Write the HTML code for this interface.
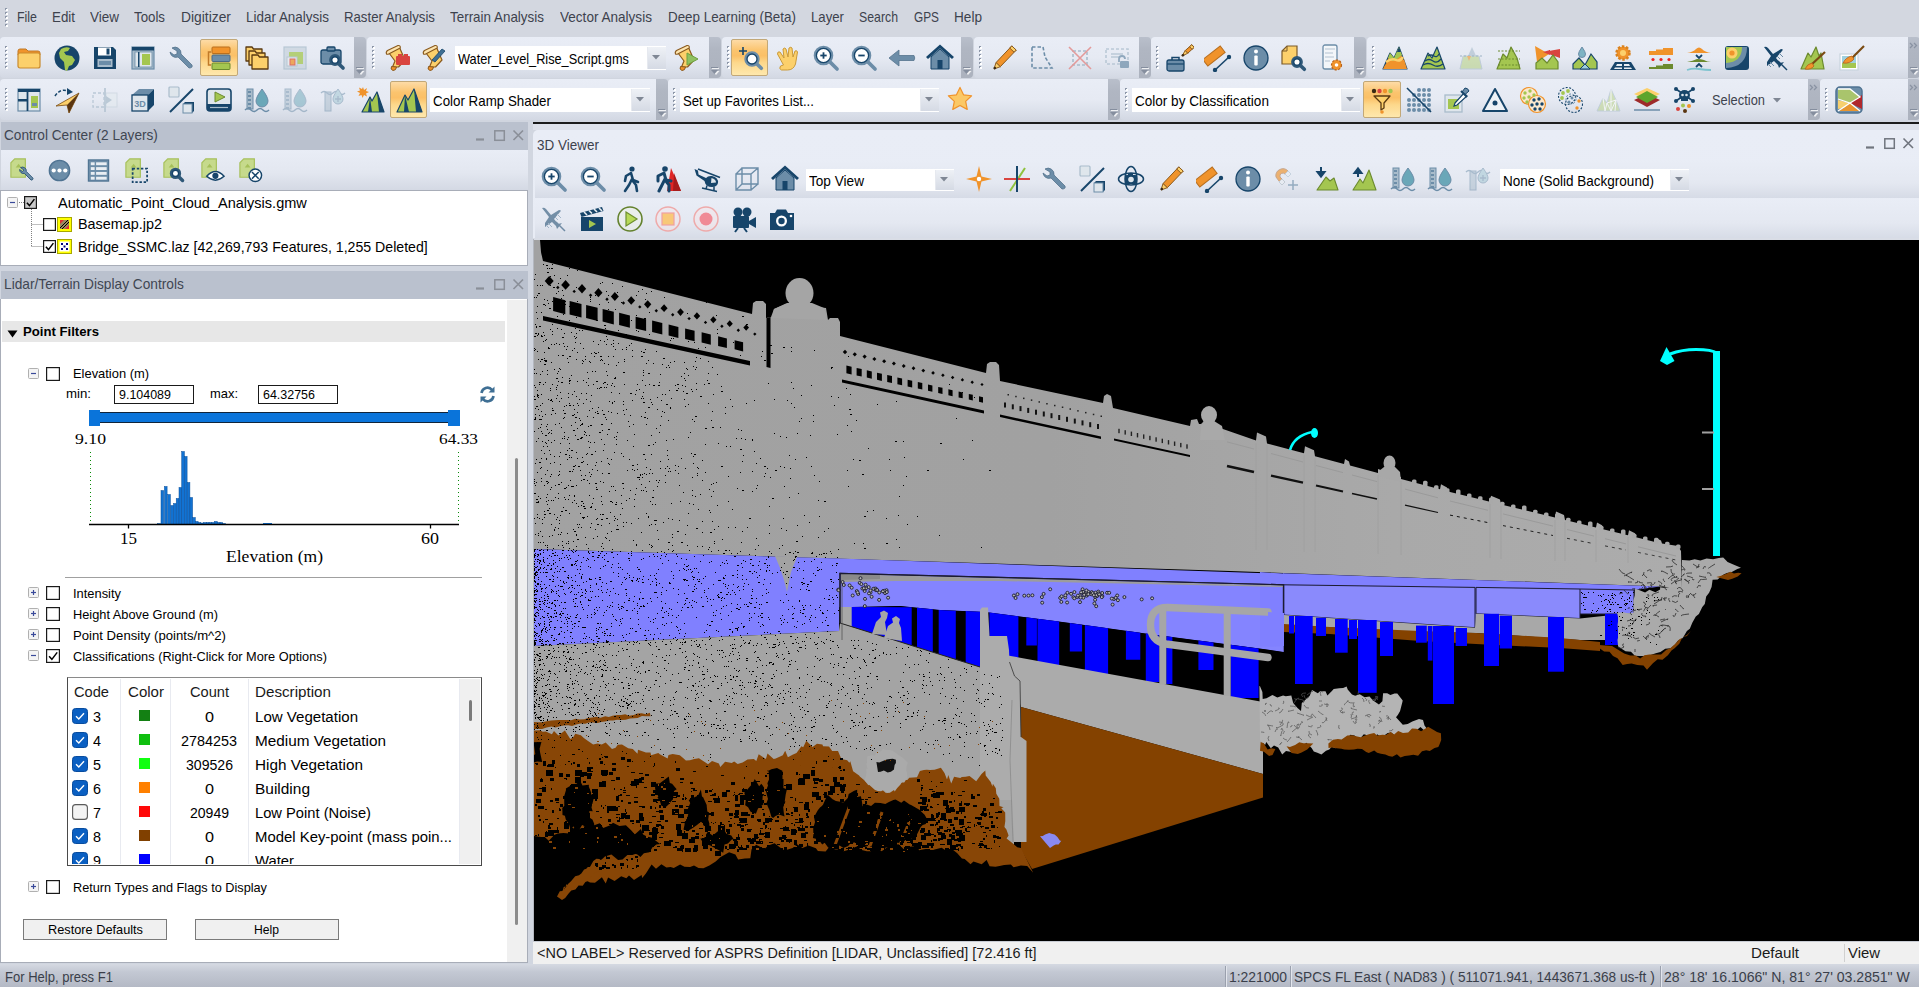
<!DOCTYPE html>
<html lang="en"><head><meta charset="utf-8"><title>Global Mapper - 3D Viewer</title>
<style>
html,body{margin:0;padding:0}
body{width:1919px;height:987px;overflow:hidden;position:relative;background:#d0d5df;font-family:"Liberation Sans",sans-serif;}
body div,body span,body svg,body i{position:absolute;display:block}
.grp{left:0;top:0;width:0;height:0;overflow:visible}
.t{white-space:nowrap;transform-origin:0 50%;}
.tb{background:linear-gradient(#e9edf6 0%,#e6eaf3 50%,#dde2ec 75%,#d3d8e3 100%);}
.ov{background:linear-gradient(#b9bfcb,#b0b6c2 30%,#acb2be);}
.hot{background:linear-gradient(#fddba6 0%,#fbc46e 30%,#fbc067 45%,#fdd88c 65%,#fee8ad 100%);border:1px solid #c2a878;box-sizing:border-box;border-radius:2px;}
</style></head>
<body>
<div id="app-chrome" class="grp">
<div style="left:0px;top:0px;width:1919px;height:37px;background:#d3d7e0;"></div>
<i style="left:5px;top:8px;width:2px;height:2px;background:#8d97a8"></i><i style="left:6px;top:9px;width:2px;height:2px;background:#fff"></i><i style="left:5px;top:12px;width:2px;height:2px;background:#8d97a8"></i><i style="left:6px;top:13px;width:2px;height:2px;background:#fff"></i><i style="left:5px;top:16px;width:2px;height:2px;background:#8d97a8"></i><i style="left:6px;top:17px;width:2px;height:2px;background:#fff"></i><i style="left:5px;top:20px;width:2px;height:2px;background:#8d97a8"></i><i style="left:6px;top:21px;width:2px;height:2px;background:#fff"></i><i style="left:5px;top:24px;width:2px;height:2px;background:#8d97a8"></i><i style="left:6px;top:25px;width:2px;height:2px;background:#fff"></i>
<span class="t " style="left:17.0px;top:8.4px;font-size:14.4px;line-height:19px;color:#3d424d;transform:scaleX(0.8618);">File</span>
<span class="t " style="left:52.0px;top:8.4px;font-size:14.4px;line-height:19px;color:#3d424d;transform:scaleX(0.9268);">Edit</span>
<span class="t " style="left:90.0px;top:8.4px;font-size:14.4px;line-height:19px;color:#3d424d;transform:scaleX(0.9369);">View</span>
<span class="t " style="left:134.0px;top:8.4px;font-size:14.4px;line-height:19px;color:#3d424d;transform:scaleX(0.9221);">Tools</span>
<span class="t " style="left:181.0px;top:8.4px;font-size:14.4px;line-height:19px;color:#3d424d;transform:scaleX(0.9612);">Digitizer</span>
<span class="t " style="left:246.0px;top:8.4px;font-size:14.4px;line-height:19px;color:#3d424d;transform:scaleX(0.9341);">Lidar Analysis</span>
<span class="t " style="left:344.0px;top:8.4px;font-size:14.4px;line-height:19px;color:#3d424d;transform:scaleX(0.9169);">Raster Analysis</span>
<span class="t " style="left:450.0px;top:8.4px;font-size:14.4px;line-height:19px;color:#3d424d;transform:scaleX(0.9321);">Terrain Analysis</span>
<span class="t " style="left:560.0px;top:8.4px;font-size:14.4px;line-height:19px;color:#3d424d;transform:scaleX(0.9421);">Vector Analysis</span>
<span class="t " style="left:668.0px;top:8.4px;font-size:14.4px;line-height:19px;color:#3d424d;transform:scaleX(0.9296);">Deep Learning (Beta)</span>
<span class="t " style="left:811.0px;top:8.4px;font-size:14.4px;line-height:19px;color:#3d424d;transform:scaleX(0.9161);">Layer</span>
<span class="t " style="left:859.0px;top:8.4px;font-size:14.4px;line-height:19px;color:#3d424d;transform:scaleX(0.8547);">Search</span>
<span class="t " style="left:914.0px;top:8.4px;font-size:14.4px;line-height:19px;color:#3d424d;transform:scaleX(0.8221);">GPS</span>
<span class="t " style="left:954.0px;top:8.4px;font-size:14.4px;line-height:19px;color:#3d424d;transform:scaleX(0.9453);">Help</span>
<div style="left:0px;top:37px;width:1919px;height:86px;background:#d0d5df;"></div>
<div class="tb" style="left:0px;top:37px;width:354px;height:41px;border-radius:4px 0 0 4px;"></div><div class="ov" style="left:354px;top:37px;width:12px;height:41px;border-radius:0 4px 4px 0;"></div><svg style="left:355px;top:67px" width="10" height="12" viewBox="0 0 10 12"><path d="M2 1.500 h7" stroke="#fff" stroke-width="1" opacity="0.8"/><path d="M1 0.500 h7" stroke="#858e9e" stroke-width="1"/><path d="M2.500 4 h7 l-3.500 4z" fill="#fff" opacity="0.8"/><path d="M1 3 h7 l-3.500 4z" fill="#858e9e"/></svg><i style="left:5px;top:46px;width:2px;height:2px;background:#8d97a8"></i><i style="left:6px;top:47px;width:2px;height:2px;background:#fff"></i><i style="left:5px;top:50px;width:2px;height:2px;background:#8d97a8"></i><i style="left:6px;top:51px;width:2px;height:2px;background:#fff"></i><i style="left:5px;top:54px;width:2px;height:2px;background:#8d97a8"></i><i style="left:6px;top:55px;width:2px;height:2px;background:#fff"></i><i style="left:5px;top:58px;width:2px;height:2px;background:#8d97a8"></i><i style="left:6px;top:59px;width:2px;height:2px;background:#fff"></i><i style="left:5px;top:62px;width:2px;height:2px;background:#8d97a8"></i><i style="left:6px;top:63px;width:2px;height:2px;background:#fff"></i><i style="left:5px;top:66px;width:2px;height:2px;background:#8d97a8"></i><i style="left:6px;top:67px;width:2px;height:2px;background:#fff"></i>
<div class="hot" style="left:200px;top:39px;width:38px;height:37px;"></div>
<svg style="left:15.0px;top:44.0px" width="28" height="28" viewBox="0 0 28 28"><path d="M3 7 q0 -2 2 -2 h6 l2 2 h10 q2 0 2 2 v2 h-22z" fill="#f0932b" stroke="#c07a28" stroke-width="1"/><rect x="3" y="9" width="22" height="15" rx="2" fill="#fcd06b" stroke="#c98a2d" stroke-width="1.2"/></svg>
<svg style="left:53.0px;top:44.0px" width="28" height="28" viewBox="0 0 28 28"><circle cx="14" cy="14" r="12.5" fill="#17456a"/><path d="M8 5 q5 -3 9 -1 l-2 3 l-4 1 l2 3 l6 1 l3 4 l-3 5 l-3 1 l-2 5 l-2 -1 l-1 -8 l-4 -4 l-1 -5z" fill="#a4c650"/></svg>
<svg style="left:91.0px;top:44.0px" width="28" height="28" viewBox="0 0 28 28"><path d="M3 3 h19 l3 3 v19 h-22z" fill="#17456a"/><rect x="7" y="3.5" width="13" height="8" fill="#fff"/><rect x="15.5" y="4.5" width="3" height="6" fill="#17456a"/><rect x="6.5" y="15" width="15" height="8" fill="#a9bccb"/><rect x="8" y="17" width="12" height="4" fill="#6c8da8"/></svg>
<svg style="left:129.0px;top:44.0px" width="28" height="28" viewBox="0 0 28 28"><rect x="3" y="3" width="22" height="22" fill="#a9bccb" stroke="#6c8da8" stroke-width="1.2"/><rect x="3" y="3" width="22" height="3.5" fill="#17456a"/><rect x="6" y="8" width="17" height="15" fill="#dfe6ec" stroke="#6c8da8" stroke-width="0.8"/><rect x="9" y="8" width="1.5" height="15" fill="#17456a"/><rect x="13" y="10" width="8" height="11" fill="#a4c650"/></svg>
<svg style="left:167.0px;top:44.0px" width="28" height="28" viewBox="0 0 28 28"><path d="M5 4 a6 6 0 0 1 9 6 l11 11 q1 3 -3 3 l-11 -11 a6 6 0 0 1 -8 -5 l4 3 l3 -1 l0 -3z" fill="#6c8da8" stroke="#55748d" stroke-width="0.8"/></svg>
<svg style="left:205.0px;top:44.0px" width="28" height="28" viewBox="0 0 28 28"><path d="M6 8 h-2.5 v13 h2.5" fill="none" stroke="#c07a28" stroke-width="1.5"/><rect x="7" y="3" width="18" height="6.5" rx="1" fill="#f0932b" stroke="#b86f1f" stroke-width="1"/><rect x="7" y="11" width="18" height="6.5" rx="1" fill="#6c8da8" stroke="#4b6a84" stroke-width="1"/><rect x="7" y="19" width="18" height="6.5" rx="1" fill="#a4c650" stroke="#6b8a2e" stroke-width="1"/></svg>
<svg style="left:243.0px;top:44.0px" width="28" height="28" viewBox="0 0 28 28"><path d="M3 3 h6 l1.5 2 h8.5 v12 h-16z" fill="#fcd06b" stroke="#5a3a12" stroke-width="1.3" stroke-linejoin="round"/><path d="M6 7 h6 l1.5 2 h8.5 v12 h-16z" fill="#fcd06b" stroke="#5a3a12" stroke-width="1.3" stroke-linejoin="round"/><path d="M9 11 h6 l1.5 2 h8.5 v12 h-16z" fill="#fcd06b" stroke="#5a3a12" stroke-width="1.3" stroke-linejoin="round"/></svg>
<svg style="left:281.0px;top:44.0px" width="28" height="28" viewBox="0 0 28 28"><g opacity="0.75"><rect x="3" y="3" width="22" height="22" fill="#c9d4de" stroke="#a9bccb" stroke-width="1.2"/><rect x="8" y="8" width="14" height="12" fill="#a4c650"/><rect x="6" y="13" width="10" height="9" fill="#e7ecef" stroke="#a9bccb"/><rect x="9" y="15" width="5" height="6" fill="#f0932b" stroke="#d9443f" stroke-width="1"/></g></svg>
<svg style="left:319.0px;top:44.0px" width="28" height="28" viewBox="0 0 28 28"><rect x="2" y="6" width="20" height="14" rx="2" fill="#6c8da8" stroke="#17456a" stroke-width="1.3"/><rect x="8" y="3" width="8" height="4" rx="1" fill="#6c8da8" stroke="#17456a" stroke-width="1.3"/><line x1="19.15" y1="19.15" x2="24.049999999999997" y2="24.049999999999997" stroke="#2f5878" stroke-width="3.6" stroke-linecap="round"/><circle cx="16" cy="16" r="4.5" fill="#fff" stroke="#2f5878" stroke-width="2.8"/><circle cx="16" cy="16" r="3.2" fill="none" stroke="#17456a" stroke-width="1.3"/></svg>
<div class="tb" style="left:367px;top:37px;width:342px;height:41px;border-radius:4px 0 0 4px;"></div><div class="ov" style="left:709px;top:37px;width:12px;height:41px;border-radius:0 4px 4px 0;"></div><svg style="left:710px;top:67px" width="10" height="12" viewBox="0 0 10 12"><path d="M2 1.500 h7" stroke="#fff" stroke-width="1" opacity="0.8"/><path d="M1 0.500 h7" stroke="#858e9e" stroke-width="1"/><path d="M2.500 4 h7 l-3.500 4z" fill="#fff" opacity="0.8"/><path d="M1 3 h7 l-3.500 4z" fill="#858e9e"/></svg><i style="left:372px;top:46px;width:2px;height:2px;background:#8d97a8"></i><i style="left:373px;top:47px;width:2px;height:2px;background:#fff"></i><i style="left:372px;top:50px;width:2px;height:2px;background:#8d97a8"></i><i style="left:373px;top:51px;width:2px;height:2px;background:#fff"></i><i style="left:372px;top:54px;width:2px;height:2px;background:#8d97a8"></i><i style="left:373px;top:55px;width:2px;height:2px;background:#fff"></i><i style="left:372px;top:58px;width:2px;height:2px;background:#8d97a8"></i><i style="left:373px;top:59px;width:2px;height:2px;background:#fff"></i><i style="left:372px;top:62px;width:2px;height:2px;background:#8d97a8"></i><i style="left:373px;top:63px;width:2px;height:2px;background:#fff"></i><i style="left:372px;top:66px;width:2px;height:2px;background:#8d97a8"></i><i style="left:373px;top:67px;width:2px;height:2px;background:#fff"></i>
<svg style="left:383.0px;top:44.0px" width="28" height="28" viewBox="0 0 28 28"><path d="M6 9 L16.500 3.500 L22 16 L15.500 23 L9.500 23 L12 17 Z" fill="#fcd06b" stroke="#8a5a1e" stroke-width="1.200" stroke-linejoin="round"/><path d="M3.500 10 q-1 -2.500 1.500 -3.800 l10 -4.700 q2.800 -0.300 2.200 2.600 l-11 5.600 q-1.800 1 -2.700 0.300z" fill="#fde4ad" stroke="#8a5a1e" stroke-width="1.100" stroke-linejoin="round"/><path d="M8.500 22.500 q-1.500 3 1.500 4 q3.200 0 3.500 -3.500z" fill="#f0932b" stroke="#8a5a1e" stroke-width="1"/><rect x="13" y="12" width="14" height="9" rx="1" fill="#d9443f"/><rect x="15" y="10" width="4" height="3" fill="#d9443f"/><rect x="21" y="10" width="4" height="3" fill="#d9443f"/></svg>
<svg style="left:420.0px;top:44.0px" width="28" height="28" viewBox="0 0 28 28"><path d="M6 9 L16.500 3.500 L22 16 L15.500 23 L9.500 23 L12 17 Z" fill="#fcd06b" stroke="#8a5a1e" stroke-width="1.200" stroke-linejoin="round"/><path d="M3.500 10 q-1 -2.500 1.500 -3.800 l10 -4.700 q2.800 -0.300 2.200 2.600 l-11 5.600 q-1.800 1 -2.700 0.300z" fill="#fde4ad" stroke="#8a5a1e" stroke-width="1.100" stroke-linejoin="round"/><path d="M8.500 22.500 q-1.500 3 1.500 4 q3.200 0 3.500 -3.500z" fill="#f0932b" stroke="#8a5a1e" stroke-width="1"/><path d="M12 16 l10 -11 l3 2 l-10 11 z" fill="#3f6f94" stroke="#17456a" stroke-width="0.8"/></svg>
<div style="left:455px;top:46px;width:211px;height:24px;background:#fff;"></div><div style="left:647px;top:47px;width:18px;height:22px;background:linear-gradient(#eef1f6,#d5dae4);border-left:1px solid #e6e9ef;"></div><svg style="left:652px;top:55px" width="8" height="5" viewBox="0 0 8 5"><path d="M0 0 h8 l-4 4.500z" fill="#7f8794"/></svg><span class="t " style="left:458.0px;top:49.5px;font-size:14.4px;line-height:19px;color:#000;transform:scaleX(0.8853);">Water_Level_Rise_Script.gms</span>
<svg style="left:672.0px;top:44.0px" width="28" height="28" viewBox="0 0 28 28"><path d="M6 9 L16.500 3.500 L22 16 L15.500 23 L9.500 23 L12 17 Z" fill="#fcd06b" stroke="#8a5a1e" stroke-width="1.200" stroke-linejoin="round"/><path d="M3.500 10 q-1 -2.500 1.500 -3.800 l10 -4.700 q2.800 -0.300 2.200 2.600 l-11 5.600 q-1.800 1 -2.700 0.300z" fill="#fde4ad" stroke="#8a5a1e" stroke-width="1.100" stroke-linejoin="round"/><path d="M8.500 22.500 q-1.500 3 1.500 4 q3.200 0 3.500 -3.500z" fill="#f0932b" stroke="#8a5a1e" stroke-width="1"/><path d="M15 9 l11 6 l-11 6z" fill="#8fc060" stroke="#6ea040" stroke-width="1"/></svg>
<div class="tb" style="left:722px;top:37px;width:239px;height:41px;border-radius:4px 0 0 4px;"></div><div class="ov" style="left:961px;top:37px;width:12px;height:41px;border-radius:0 4px 4px 0;"></div><svg style="left:962px;top:67px" width="10" height="12" viewBox="0 0 10 12"><path d="M2 1.500 h7" stroke="#fff" stroke-width="1" opacity="0.8"/><path d="M1 0.500 h7" stroke="#858e9e" stroke-width="1"/><path d="M2.500 4 h7 l-3.500 4z" fill="#fff" opacity="0.8"/><path d="M1 3 h7 l-3.500 4z" fill="#858e9e"/></svg><i style="left:727px;top:46px;width:2px;height:2px;background:#8d97a8"></i><i style="left:728px;top:47px;width:2px;height:2px;background:#fff"></i><i style="left:727px;top:50px;width:2px;height:2px;background:#8d97a8"></i><i style="left:728px;top:51px;width:2px;height:2px;background:#fff"></i><i style="left:727px;top:54px;width:2px;height:2px;background:#8d97a8"></i><i style="left:728px;top:55px;width:2px;height:2px;background:#fff"></i><i style="left:727px;top:58px;width:2px;height:2px;background:#8d97a8"></i><i style="left:728px;top:59px;width:2px;height:2px;background:#fff"></i><i style="left:727px;top:62px;width:2px;height:2px;background:#8d97a8"></i><i style="left:728px;top:63px;width:2px;height:2px;background:#fff"></i><i style="left:727px;top:66px;width:2px;height:2px;background:#8d97a8"></i><i style="left:728px;top:67px;width:2px;height:2px;background:#fff"></i>
<div class="hot" style="left:731px;top:39px;width:37px;height:37px;"></div>
<svg style="left:736.0px;top:44.0px" width="28" height="28" viewBox="0 0 28 28"><path d="M7 3 v8 M3 7 h8" stroke="#17456a" stroke-width="1.6"/><line x1="20.41" y1="19.41" x2="25.31" y2="24.31" stroke="#6c8da8" stroke-width="3.6" stroke-linecap="round"/><circle cx="16" cy="15" r="6.3" fill="#fff" stroke="#6c8da8" stroke-width="2.8"/><circle cx="16" cy="15" r="5.0" fill="none" stroke="#17456a" stroke-width="1.3"/></svg>
<svg style="left:774.0px;top:44.0px" width="28" height="28" viewBox="0 0 28 28"><path d="M6 8 l4 6 l-1 -9 q2 -2 3 0 l2 8 l1 -9 q2 -1.5 3 0 l1 9 l2 -6 q2 -1 2.5 1 l-2 12 q-2 6 -8 6 h-6 q-3 -1 -1 -4 l3 -1 l-6 -11 q0 -3 2.500 -2z" fill="#fcd06b" stroke="#c99a3a" stroke-width="1"/></svg>
<svg style="left:812.0px;top:44.0px" width="28" height="28" viewBox="0 0 28 28"><line x1="17.38" y1="17.38" x2="25.08" y2="25.08" stroke="#6c8da8" stroke-width="3.6" stroke-linecap="round"/><circle cx="11.5" cy="11.5" r="8.4" fill="#fff" stroke="#6c8da8" stroke-width="2.8"/><circle cx="11.5" cy="11.5" r="7.1000000000000005" fill="none" stroke="#17456a" stroke-width="1.3"/><line x1="8.3" y1="11.5" x2="14.7" y2="11.5" stroke="#17456a" stroke-width="1.8"/><line x1="11.5" y1="8.3" x2="11.5" y2="14.7" stroke="#17456a" stroke-width="1.8"/></svg>
<svg style="left:850.0px;top:44.0px" width="28" height="28" viewBox="0 0 28 28"><line x1="17.38" y1="17.38" x2="25.08" y2="25.08" stroke="#6c8da8" stroke-width="3.6" stroke-linecap="round"/><circle cx="11.5" cy="11.5" r="8.4" fill="#fff" stroke="#6c8da8" stroke-width="2.8"/><circle cx="11.5" cy="11.5" r="7.1000000000000005" fill="none" stroke="#17456a" stroke-width="1.3"/><line x1="8.3" y1="11.5" x2="14.7" y2="11.5" stroke="#17456a" stroke-width="1.8"/></svg>
<svg style="left:888.0px;top:44.0px" width="28" height="28" viewBox="0 0 28 28"><path d="M1 14 l10 -8 v5.500 h15 q1.500 2.500 0 5 h-15 v5.500z" fill="#6c8da8" stroke="#55748d" stroke-width="0.8"/></svg>
<svg style="left:926.0px;top:44.0px" width="28" height="28" viewBox="0 0 28 28"><path d="M5 13 v12 h18 v-12 l-9 -8z" fill="#6c8da8" stroke="#17456a" stroke-width="1"/><path d="M1 14 l13 -11.500 l13 11.500" fill="none" stroke="#17456a" stroke-width="3"/><rect x="11.500" y="16" width="5" height="9" fill="#17456a"/></svg>
<div class="tb" style="left:974px;top:37px;width:165px;height:41px;border-radius:4px 0 0 4px;"></div><div class="ov" style="left:1139px;top:37px;width:12px;height:41px;border-radius:0 4px 4px 0;"></div><svg style="left:1140px;top:67px" width="10" height="12" viewBox="0 0 10 12"><path d="M2 1.500 h7" stroke="#fff" stroke-width="1" opacity="0.8"/><path d="M1 0.500 h7" stroke="#858e9e" stroke-width="1"/><path d="M2.500 4 h7 l-3.500 4z" fill="#fff" opacity="0.8"/><path d="M1 3 h7 l-3.500 4z" fill="#858e9e"/></svg><i style="left:979px;top:46px;width:2px;height:2px;background:#8d97a8"></i><i style="left:980px;top:47px;width:2px;height:2px;background:#fff"></i><i style="left:979px;top:50px;width:2px;height:2px;background:#8d97a8"></i><i style="left:980px;top:51px;width:2px;height:2px;background:#fff"></i><i style="left:979px;top:54px;width:2px;height:2px;background:#8d97a8"></i><i style="left:980px;top:55px;width:2px;height:2px;background:#fff"></i><i style="left:979px;top:58px;width:2px;height:2px;background:#8d97a8"></i><i style="left:980px;top:59px;width:2px;height:2px;background:#fff"></i><i style="left:979px;top:62px;width:2px;height:2px;background:#8d97a8"></i><i style="left:980px;top:63px;width:2px;height:2px;background:#fff"></i><i style="left:979px;top:66px;width:2px;height:2px;background:#8d97a8"></i><i style="left:980px;top:67px;width:2px;height:2px;background:#fff"></i>
<svg style="left:991.0px;top:44.0px" width="28" height="28" viewBox="0 0 28 28"><polygon points="9.3,22.7 25.2,6.1 20.8,1.9 5.0,18.6" fill="#f0932b" stroke="#8a5a1e" stroke-width="1"/><polygon points="3.0,25.0 9.3,22.7 5.0,18.6" fill="#fcd06b" stroke="#8a5a1e" stroke-width="1"/><circle cx="3.8" cy="24.1" r="1.3" fill="#3b2a14"/><polygon points="23.1,8.2 25.2,6.1 20.8,1.9 18.8,4.1" fill="#fcd06b" stroke="#8a5a1e" stroke-width="1"/></svg>
<svg style="left:1028.0px;top:44.0px" width="28" height="28" viewBox="0 0 28 28"><path d="M4 3 h11 l2 10 l7 11 h-20z" fill="none" stroke="#6c8da8" stroke-width="1.6" stroke-dasharray="3.500 2"/></svg>
<svg style="left:1066.0px;top:44.0px" width="28" height="28" viewBox="0 0 28 28"><rect x="7" y="7" width="14" height="14" fill="none" stroke="#a9bccb" stroke-width="1.6" stroke-dasharray="3 2"/><path d="M3 3 l22 22 M25 3 l-22 22" stroke="#e39a9a" stroke-width="1.6"/></svg>
<svg style="left:1104.0px;top:44.0px" width="28" height="28" viewBox="0 0 28 28"><g opacity="0.7"><rect x="2" y="5" width="22" height="15" fill="none" stroke="#a9bccb" stroke-width="1.6" stroke-dasharray="3 2"/><path d="M7 10 h12 M7 13 h9" stroke="#a9bccb" stroke-width="1.5"/><rect x="16" y="17" width="9" height="7" rx="1" fill="#6c8da8"/><path d="M15 18 v-3 a3 3 0 0 1 6 0" fill="none" stroke="#6c8da8" stroke-width="1.8"/></g></svg>
<div class="tb" style="left:1151px;top:37px;width:203px;height:41px;border-radius:4px 0 0 4px;"></div><div class="ov" style="left:1354px;top:37px;width:12px;height:41px;border-radius:0 4px 4px 0;"></div><svg style="left:1355px;top:67px" width="10" height="12" viewBox="0 0 10 12"><path d="M2 1.500 h7" stroke="#fff" stroke-width="1" opacity="0.8"/><path d="M1 0.500 h7" stroke="#858e9e" stroke-width="1"/><path d="M2.500 4 h7 l-3.500 4z" fill="#fff" opacity="0.8"/><path d="M1 3 h7 l-3.500 4z" fill="#858e9e"/></svg><i style="left:1156px;top:46px;width:2px;height:2px;background:#8d97a8"></i><i style="left:1157px;top:47px;width:2px;height:2px;background:#fff"></i><i style="left:1156px;top:50px;width:2px;height:2px;background:#8d97a8"></i><i style="left:1157px;top:51px;width:2px;height:2px;background:#fff"></i><i style="left:1156px;top:54px;width:2px;height:2px;background:#8d97a8"></i><i style="left:1157px;top:55px;width:2px;height:2px;background:#fff"></i><i style="left:1156px;top:58px;width:2px;height:2px;background:#8d97a8"></i><i style="left:1157px;top:59px;width:2px;height:2px;background:#fff"></i><i style="left:1156px;top:62px;width:2px;height:2px;background:#8d97a8"></i><i style="left:1157px;top:63px;width:2px;height:2px;background:#fff"></i><i style="left:1156px;top:66px;width:2px;height:2px;background:#8d97a8"></i><i style="left:1157px;top:67px;width:2px;height:2px;background:#fff"></i>
<svg style="left:1166.0px;top:44.0px" width="28" height="28" viewBox="0 0 28 28"><rect x="1" y="16" width="17" height="11" rx="2" fill="#6c8da8" stroke="#17456a" stroke-width="1.3"/><path d="M6 16 v-2.500 h7 v2.500" fill="none" stroke="#17456a" stroke-width="1.500"/><path d="M1 20 h17" stroke="#17456a" stroke-width="1.2"/><polygon points="21.7,9.3 28.2,3.3 25.8,0.7 19.2,6.6" fill="#f0932b" stroke="#8a5a1e" stroke-width="1"/><polygon points="16.0,12.0 21.7,9.3 19.2,6.6" fill="#fcd06b" stroke="#8a5a1e" stroke-width="1"/><circle cx="16.9" cy="11.2" r="1.3" fill="#3b2a14"/><polygon points="26.0,5.3 28.2,3.3 25.8,0.7 23.6,2.7" fill="#fcd06b" stroke="#8a5a1e" stroke-width="1"/></svg>
<svg style="left:1204.0px;top:44.0px" width="28" height="28" viewBox="0 0 28 28"><rect x="-1" y="8" width="22" height="8" fill="#f0932b" stroke="#b86f1f" stroke-width="1" transform="rotate(-38 10 12)"/><path d="M11 26 l14 -13" stroke="#17456a" stroke-width="1.6"/><circle cx="11" cy="26" r="2.200" fill="#17456a"/><circle cx="25" cy="13" r="2.200" fill="#17456a"/></svg>
<svg style="left:1242.0px;top:44.0px" width="28" height="28" viewBox="0 0 28 28"><circle cx="14" cy="14" r="12" fill="#6c8da8" stroke="#17456a" stroke-width="1.3"/><rect x="12.300" y="11.500" width="3.400" height="10" rx="1" fill="#fff"/><circle cx="14" cy="7.500" r="2" fill="#fff"/></svg>
<svg style="left:1280.0px;top:44.0px" width="28" height="28" viewBox="0 0 28 28"><path d="M7 2 h10 v18 h-15 v-13z" fill="#fcd06b" stroke="#7a5a2a" stroke-width="1.2"/><path d="M2 7 h5 v-5" fill="none" stroke="#7a5a2a" stroke-width="1"/><line x1="20.15" y1="21.15" x2="24.349999999999998" y2="25.349999999999998" stroke="#2f5878" stroke-width="3.6" stroke-linecap="round"/><circle cx="17" cy="18" r="4.5" fill="#fff" stroke="#2f5878" stroke-width="2.8"/><circle cx="17" cy="18" r="3.2" fill="none" stroke="#17456a" stroke-width="1.3"/></svg>
<svg style="left:1319.0px;top:44.0px" width="28" height="28" viewBox="0 0 28 28"><rect x="4" y="1" width="14" height="24" rx="2" fill="#f3f6f9" stroke="#6c8da8" stroke-width="1.300"/><path d="M6 5 h10 M6 9 h8 M6 13 h9 M6 17 h5" stroke="#c9d4de" stroke-width="1.500"/><circle cx="17.500" cy="21" r="5" fill="#f0932b" stroke="#b5601a" stroke-width="1.200" stroke-dasharray="2.200 1.500"/><circle cx="17.500" cy="21" r="1.800" fill="#fff"/></svg>
<div class="tb" style="left:1367px;top:37px;width:541px;height:41px;border-radius:4px 0 0 4px;"></div><div class="ov" style="left:1908px;top:37px;width:12px;height:41px;border-radius:0 4px 4px 0;"></div><svg style="left:1909px;top:67px" width="10" height="12" viewBox="0 0 10 12"><path d="M2 1.500 h7" stroke="#fff" stroke-width="1" opacity="0.8"/><path d="M1 0.500 h7" stroke="#858e9e" stroke-width="1"/><path d="M2.500 4 h7 l-3.500 4z" fill="#fff" opacity="0.8"/><path d="M1 3 h7 l-3.500 4z" fill="#858e9e"/></svg><svg style="left:1909px;top:42px" width="10" height="8" viewBox="0 0 10 8"><path d="M1 1 l2.500 2.500 l-2.500 2.500 M5 1 l2.500 2.500 l-2.500 2.500" fill="none" stroke="#8a93a3" stroke-width="1.300"/></svg><i style="left:1372px;top:46px;width:2px;height:2px;background:#8d97a8"></i><i style="left:1373px;top:47px;width:2px;height:2px;background:#fff"></i><i style="left:1372px;top:50px;width:2px;height:2px;background:#8d97a8"></i><i style="left:1373px;top:51px;width:2px;height:2px;background:#fff"></i><i style="left:1372px;top:54px;width:2px;height:2px;background:#8d97a8"></i><i style="left:1373px;top:55px;width:2px;height:2px;background:#fff"></i><i style="left:1372px;top:58px;width:2px;height:2px;background:#8d97a8"></i><i style="left:1373px;top:59px;width:2px;height:2px;background:#fff"></i><i style="left:1372px;top:62px;width:2px;height:2px;background:#8d97a8"></i><i style="left:1373px;top:63px;width:2px;height:2px;background:#fff"></i><i style="left:1372px;top:66px;width:2px;height:2px;background:#8d97a8"></i><i style="left:1373px;top:67px;width:2px;height:2px;background:#fff"></i>
<svg style="left:1381.0px;top:44.0px" width="28" height="28" viewBox="0 0 28 28"><path d="M2 25 L9 9 L13 14 L18 3 L26 25 Z" fill="#f0932b" stroke="#17456a" stroke-width="1.2" stroke-linejoin="round"/><path d="M7 14 L9 9 L13 14 L18 3 L21 11 L16 15 L12 17z" fill="#a4c650"/><path d="M16 8 L18 3 L20 8z" fill="#17456a"/><path d="M4 21 q6 -4 10 -2 t9 -4 l3 10 h-24z" fill="#f0932b"/><path d="M5 18 q6 -4 10 -2 t7 -3" fill="none" stroke="#fcd06b" stroke-width="2.500"/></svg>
<svg style="left:1419.0px;top:44.0px" width="28" height="28" viewBox="0 0 28 28"><path d="M2 25 L9 9 L13 14 L18 3 L26 25 Z" fill="#a4c650" stroke="#17456a" stroke-width="1.200" stroke-linejoin="round"/><path d="M6 17 q4 -3 8 0 t8 -2 M4 21 q5 -3 10 0 t10 -1 M9 12 q3 -2 6 0 t5 -2" fill="none" stroke="#17456a" stroke-width="1.300"/></svg>
<svg style="left:1457.0px;top:44.0px" width="28" height="28" viewBox="0 0 28 28"><g opacity="0.600"><path d="M15 3 l4 9 h-8z" fill="#a9bccb"/><path d="M6 12 h16 l3 13 h-22z" fill="#bcd58a" stroke="#a9bccb" stroke-width="1"/><path d="M3 12 h22" stroke="#6c8da8" stroke-width="1.200" stroke-dasharray="2 2"/><path d="M10 12 h4 l-2 5z" fill="#f0932b"/></g></svg>
<svg style="left:1495.0px;top:44.0px" width="28" height="28" viewBox="0 0 28 28"><path d="M2 25 L8 10 L12 14 L16 3 L22 14 L25 25 Z" fill="#a4c650" stroke="#6b8a2e" stroke-width="1.200" stroke-linejoin="round"/><path d="M3 7 h22 M3 15 h22 M3 21 h22" stroke="#6b8a2e" stroke-width="1" stroke-dasharray="2 1.500"/></svg>
<svg style="left:1533.0px;top:44.0px" width="28" height="28" viewBox="0 0 28 28"><path d="M2 2 L16 10 L4 18z" fill="#f0932b"/><path d="M10 8 L27 5 V14 z M10 8 l7 -2 v5z" fill="#d9443f"/><path d="M3 25 v-6 l6 -5 l5 5 l6 -8 l5 7 v7z" fill="#a4c650" stroke="#6b8a2e" stroke-width="1.200"/></svg>
<svg style="left:1571.0px;top:44.0px" width="28" height="28" viewBox="0 0 28 28"><path d="M11 3 q3.500 5 3.500 7 a3.500 3.500 0 0 1 -7 0 q0 -2 3.500 -7z" fill="#7db3c4" stroke="#6c8da8" stroke-width="1"/><path d="M2 25 v-5 l6 -6 l6 7 l6 -11 l6 8 v7z" fill="#a4c650" stroke="#17456a" stroke-width="1.200"/><path d="M9 25 l5 -5 l5 5z" fill="#9fd0de" stroke="#17456a" stroke-width="1"/></svg>
<svg style="left:1609.0px;top:44.0px" width="28" height="28" viewBox="0 0 28 28"><circle cx="14" cy="9" r="6.500" fill="#f0932b" stroke="#d9821f" stroke-width="2.500" stroke-dasharray="2.500 1.600"/><circle cx="14" cy="9" r="3" fill="#fcd06b"/><path d="M6 18 h16 l5 8 h-26z" fill="#17456a"/><path d="M8 20 h5 v2 h-6z M15 20 h5 l1 2 h-6z M6 23.500 h7 v1.500 h-8z M15 23.500 h7 l1 1.500 h-8z" fill="#e9eef3"/></svg>
<svg style="left:1647.0px;top:44.0px" width="28" height="28" viewBox="0 0 28 28"><path d="M2 11 v-4 h7 v-1.500 h7 v-1.500 h10 v7z" fill="#f0932b"/><circle cx="6" cy="15.500" r="1.600" fill="#e22"/><circle cx="14" cy="15.500" r="1.600" fill="#e22"/><circle cx="22" cy="15.500" r="1.600" fill="#e22"/><path d="M2 25 v-2 h7 v-1.500 h7 v-1.500 h10 v5z" fill="#6b8a2e"/></svg>
<svg style="left:1685.0px;top:44.0px" width="28" height="28" viewBox="0 0 28 28"><path d="M2 9 q6 -1 9 -4 q3 -3 6 0 q3 3 9 4z" fill="#f0932b"/><path d="M11 11 l3 3 l3 -3" fill="none" stroke="#17456a" stroke-width="1.800"/><path d="M2 18 q6 -1 10 -3 q4 0 7 1 q3 2 7 2z" fill="#6b8a2e"/><path d="M11 23 l3 -3 l3 3" fill="none" stroke="#17456a" stroke-width="1.800"/><path d="M2 26 q6 -2 12 -1 t12 1" fill="none" stroke="#7cc3cf" stroke-width="1.800"/></svg>
<svg style="left:1723.0px;top:44.0px" width="28" height="28" viewBox="0 0 28 28"><rect x="2" y="2" width="24" height="24" rx="3" fill="#17456a"/><path d="M3 3 h21 q0 20 -21 21z" fill="#6c8da8"/><path d="M3 3 h16 q0 15 -16 16z" fill="#a4c650"/><circle cx="9" cy="9" r="5.500" fill="#fcd06b"/><circle cx="9" cy="9" r="2.600" fill="#f0932b"/></svg>
<svg style="left:1761.0px;top:44.0px" width="28" height="28" viewBox="0 0 28 28"><path d="M3 3 q2 -1 4 1 l5 6 l8 -5 q3 0 1 2 l-6 7 l4 5 l4 -1 l-5 6 l-1 -3 l-4 -4 l-7 5 v-4 l4 -6 z" fill="#17456a"/><path d="M17 17 l9 9" stroke="#17456a" stroke-width="1.500"/><path d="M18 9 l4 4 M16 12 l3 3 M9 18 l4 4 M7 20 l3 3" stroke="#6c8da8" stroke-width="1"/></svg>
<svg style="left:1799.0px;top:44.0px" width="28" height="28" viewBox="0 0 28 28"><path d="M2 25 L9 9 L12 13 L17 3 L20 12 L22 9 L25 25 Z" fill="#a4c650" stroke="#6b8a2e" stroke-width="1.200" stroke-linejoin="round"/><path d="M26 8 l-14 13" stroke="#7a4a12" stroke-width="2.200"/><path d="M13 19 q-5 1 -7 6 q6 1 9 -3z" fill="#f0932b" stroke="#b5601a" stroke-width="0.800"/></svg>
<svg style="left:1837.0px;top:44.0px" width="28" height="28" viewBox="0 0 28 28"><rect x="3" y="10" width="18" height="16" fill="#fff" stroke="#c9d4de" stroke-width="1.200"/><rect x="5" y="12" width="14" height="7" fill="#9fd0de"/><rect x="5" y="19" width="14" height="5" fill="#a4c650"/><path d="M27 2 l-13 13" stroke="#7a4a12" stroke-width="2.200"/><path d="M15 12 q-6 1 -9 7 q7 1 11 -4z" fill="#f0932b" stroke="#b5601a" stroke-width="0.800"/></svg>
<div class="tb" style="left:0px;top:79px;width:656px;height:41px;border-radius:4px 0 0 4px;"></div><div class="ov" style="left:656px;top:79px;width:12px;height:41px;border-radius:0 4px 4px 0;"></div><svg style="left:657px;top:109px" width="10" height="12" viewBox="0 0 10 12"><path d="M2 1.500 h7" stroke="#fff" stroke-width="1" opacity="0.8"/><path d="M1 0.500 h7" stroke="#858e9e" stroke-width="1"/><path d="M2.500 4 h7 l-3.500 4z" fill="#fff" opacity="0.8"/><path d="M1 3 h7 l-3.500 4z" fill="#858e9e"/></svg><i style="left:5px;top:88px;width:2px;height:2px;background:#8d97a8"></i><i style="left:6px;top:89px;width:2px;height:2px;background:#fff"></i><i style="left:5px;top:92px;width:2px;height:2px;background:#8d97a8"></i><i style="left:6px;top:93px;width:2px;height:2px;background:#fff"></i><i style="left:5px;top:96px;width:2px;height:2px;background:#8d97a8"></i><i style="left:6px;top:97px;width:2px;height:2px;background:#fff"></i><i style="left:5px;top:100px;width:2px;height:2px;background:#8d97a8"></i><i style="left:6px;top:101px;width:2px;height:2px;background:#fff"></i><i style="left:5px;top:104px;width:2px;height:2px;background:#8d97a8"></i><i style="left:6px;top:105px;width:2px;height:2px;background:#fff"></i><i style="left:5px;top:108px;width:2px;height:2px;background:#8d97a8"></i><i style="left:6px;top:109px;width:2px;height:2px;background:#fff"></i>
<div class="hot" style="left:390px;top:81px;width:37px;height:37px;"></div>
<svg style="left:15.0px;top:86.0px" width="28" height="28" viewBox="0 0 28 28"><rect x="3" y="3" width="22" height="22" fill="#dfe6ec" stroke="#6c8da8" stroke-width="1.200"/><rect x="3" y="3" width="22" height="3" fill="#17456a"/><path d="M12.500 3 v22" stroke="#17456a" stroke-width="1.800"/><rect x="3" y="13" width="9" height="2.500" fill="#17456a"/><rect x="16" y="10" width="7" height="12" fill="#a4c650"/><rect x="17" y="17" width="5" height="3" fill="#6c8da8"/></svg>
<svg style="left:53.0px;top:86.0px" width="28" height="28" viewBox="0 0 28 28"><path d="M3 20 L26 7 L16 27 L14 19z" fill="#fcd06b" stroke="#7a4a12" stroke-width="0.800"/><path d="M14 19 L26 7 L16 27z" fill="#5a3510"/><path d="M2 10 q6 -9 15 -4" fill="none" stroke="#17456a" stroke-width="1.600" stroke-dasharray="3 2"/><path d="M14 2 l6 4 l-6 3z" fill="#17456a"/></svg>
<svg style="left:91.0px;top:86.0px" width="28" height="28" viewBox="0 0 28 28"><g opacity="0.700"><rect x="2" y="7" width="11" height="14" fill="none" stroke="#a9bccb" stroke-width="1.300" stroke-dasharray="3 2"/><rect x="15" y="7" width="11" height="14" fill="#e4eaf0" stroke="#c9d4de" stroke-width="1"/><path d="M14 2 v24" stroke="#a9bccb" stroke-width="1.800"/><path d="M15 10 l6 4 l-6 4z" fill="#a9bccb"/></g></svg>
<svg style="left:129.0px;top:86.0px" width="28" height="28" viewBox="0 0 28 28"><path d="M3 9 l7 -6 h15 l-6 6z" fill="#6c8da8"/><path d="M19 9 l6 -6 v16 l-6 6z" fill="#17456a"/><rect x="3" y="9" width="16" height="16" fill="#dfe6ec" stroke="#17456a" stroke-width="1.300"/><text x="11" y="21" font-size="9" font-weight="bold" text-anchor="middle" fill="#6c8da8" font-family="Liberation Sans, sans-serif">3D</text></svg>
<svg style="left:167.0px;top:86.0px" width="28" height="28" viewBox="0 0 28 28"><rect x="2" y="1" width="10" height="10" rx="1" fill="#dfe6ec" stroke="#a9bccb" stroke-width="1.200"/><path d="M3 26 L26 3" stroke="#17456a" stroke-width="2"/><path d="M16 18 l2 -2 h9 v9 l-2 2z" fill="#17456a"/><rect x="16" y="18" width="9" height="9" fill="#dfe6ec" stroke="#6c8da8" stroke-width="1"/></svg>
<svg style="left:205.0px;top:86.0px" width="28" height="28" viewBox="0 0 28 28"><rect x="2" y="3" width="24" height="22" rx="3" fill="#dfe6ec" stroke="#17456a" stroke-width="1.600"/><path d="M2 18 h24 v4 q0 3 -3 3 h-18 q-3 0 -3 -3z" fill="#17456a"/><path d="M10 6 l10 5 l-10 5z" fill="#a4c650" stroke="#6b8a2e" stroke-width="1"/><path d="M5 21.500 h18" stroke="#a9bccb" stroke-width="1.200"/></svg>
<svg style="left:243.0px;top:86.0px" width="28" height="28" viewBox="0 0 28 28"><g opacity="1"><rect x="4" y="3" width="6" height="20" fill="#a9bccb" stroke="#6c8da8" stroke-width="1"/><rect x="5" y="5" width="3" height="2" fill="#6c8da8"/><rect x="5" y="9" width="3" height="2" fill="#6c8da8"/><rect x="5" y="13" width="3" height="2" fill="#6c8da8"/><rect x="5" y="17" width="3" height="2" fill="#6c8da8"/><rect x="5" y="21" width="3" height="2" fill="#6c8da8"/><path d="M19 3 q6 8 6 12 a6 6 0 0 1 -12 0 q0 -4 6 -12z" fill="#6aa7b8" stroke="#6c8da8" stroke-width="1"/><path d="M2 24 q3 -3 6 0 t6 0 t6 0 t6 0" fill="none" stroke="#6c8da8" stroke-width="1.5"/></g></svg>
<svg style="left:281.0px;top:86.0px" width="28" height="28" viewBox="0 0 28 28"><g opacity="0.5"><rect x="4" y="3" width="6" height="20" fill="#a9bccb" stroke="#6c8da8" stroke-width="1"/><rect x="5" y="5" width="3" height="2" fill="#6c8da8"/><rect x="5" y="9" width="3" height="2" fill="#6c8da8"/><rect x="5" y="13" width="3" height="2" fill="#6c8da8"/><rect x="5" y="17" width="3" height="2" fill="#6c8da8"/><rect x="5" y="21" width="3" height="2" fill="#6c8da8"/><path d="M19 3 q6 8 6 12 a6 6 0 0 1 -12 0 q0 -4 6 -12z" fill="#6aa7b8" stroke="#6c8da8" stroke-width="1"/><path d="M2 24 q3 -3 6 0 t6 0 t6 0 t6 0" fill="none" stroke="#6c8da8" stroke-width="1.5"/></g></svg>
<svg style="left:319.0px;top:86.0px" width="28" height="28" viewBox="0 0 28 28"><g opacity="0.500"><rect x="6" y="6" width="6" height="19" fill="#a9bccb" stroke="#6c8da8" stroke-width="1"/><path d="M2 7 q3 -3 6 0 t6 0 t6 0 t6 0" fill="none" stroke="#6c8da8" stroke-width="1.300"/><path d="M19 3 q5 7 5 10 a5 5 0 0 1 -10 0 q0 -3 5 -10z" fill="#9ec5d1" stroke="#6c8da8" stroke-width="1"/><path d="M19 10 v6 M16 13 h6" stroke="#6c8da8" stroke-width="1.300"/></g></svg>
<svg style="left:357.0px;top:86.0px" width="28" height="28" viewBox="0 0 28 28"><path d="M6 1 l1 3 l3 -2 l-1 3 l3 1 l-3 1.500 l1 3 l-3 -1.500 l-1.500 3 l-1 -3 l-3 1 l1.500 -3 l-3 -1.500 l3 -1 l-1 -3 l3 1.500z" fill="#f0932b"/><path d="M5 26 L13 11 L15 15 L20 6 L27 26 Z" fill="#a4c650" stroke="#17456a" stroke-width="1.200" stroke-linejoin="round"/><path d="M13 11 L15 26 L11 26z M20 6 L27 26 L22 26z" fill="#17456a"/></svg>
<svg style="left:395.0px;top:86.0px" width="28" height="28" viewBox="0 0 28 28"><path d="M2 26 L10 9 L13 14 L19 3 L27 26 Z" fill="#a4c650" stroke="#17456a" stroke-width="1.200" stroke-linejoin="round"/><path d="M10 9 L14 26 L9 26z M19 3 L27 26 L21 26z" fill="#17456a"/></svg>
<div style="left:430px;top:88px;width:220px;height:24px;background:#fff;"></div><div style="left:631px;top:89px;width:18px;height:22px;background:linear-gradient(#eef1f6,#d5dae4);border-left:1px solid #e6e9ef;"></div><svg style="left:636px;top:97px" width="8" height="5" viewBox="0 0 8 5"><path d="M0 0 h8 l-4 4.500z" fill="#7f8794"/></svg><span class="t " style="left:433.0px;top:91.5px;font-size:14.4px;line-height:19px;color:#000;transform:scaleX(0.9272);">Color Ramp Shader</span>
<div class="tb" style="left:668px;top:79px;width:440px;height:41px;border-radius:4px 0 0 4px;"></div><div class="ov" style="left:1108px;top:79px;width:12px;height:41px;border-radius:0 4px 4px 0;"></div><svg style="left:1109px;top:109px" width="10" height="12" viewBox="0 0 10 12"><path d="M2 1.500 h7" stroke="#fff" stroke-width="1" opacity="0.8"/><path d="M1 0.500 h7" stroke="#858e9e" stroke-width="1"/><path d="M2.500 4 h7 l-3.500 4z" fill="#fff" opacity="0.8"/><path d="M1 3 h7 l-3.500 4z" fill="#858e9e"/></svg><i style="left:673px;top:88px;width:2px;height:2px;background:#8d97a8"></i><i style="left:674px;top:89px;width:2px;height:2px;background:#fff"></i><i style="left:673px;top:92px;width:2px;height:2px;background:#8d97a8"></i><i style="left:674px;top:93px;width:2px;height:2px;background:#fff"></i><i style="left:673px;top:96px;width:2px;height:2px;background:#8d97a8"></i><i style="left:674px;top:97px;width:2px;height:2px;background:#fff"></i><i style="left:673px;top:100px;width:2px;height:2px;background:#8d97a8"></i><i style="left:674px;top:101px;width:2px;height:2px;background:#fff"></i><i style="left:673px;top:104px;width:2px;height:2px;background:#8d97a8"></i><i style="left:674px;top:105px;width:2px;height:2px;background:#fff"></i><i style="left:673px;top:108px;width:2px;height:2px;background:#8d97a8"></i><i style="left:674px;top:109px;width:2px;height:2px;background:#fff"></i>
<div style="left:680px;top:88px;width:259px;height:24px;background:#fff;"></div><div style="left:920px;top:89px;width:18px;height:22px;background:linear-gradient(#eef1f6,#d5dae4);border-left:1px solid #e6e9ef;"></div><svg style="left:925px;top:97px" width="8" height="5" viewBox="0 0 8 5"><path d="M0 0 h8 l-4 4.500z" fill="#7f8794"/></svg><span class="t " style="left:683.0px;top:91.5px;font-size:14.4px;line-height:19px;color:#000;transform:scaleX(0.9143);">Set up Favorites List...</span>
<svg style="left:947.0px;top:86.0px" width="26" height="26" viewBox="0 0 28 28"><path d="M14 1.500 l3.800 8 l8.700 1 l-6.400 6 l1.700 8.700 l-7.800 -4.300 l-7.800 4.300 l1.700 -8.700 l-6.400 -6 l8.700 -1z" fill="#fbc866" stroke="#f0932b" stroke-width="1.300" stroke-linejoin="round"/></svg>
<div class="tb" style="left:1120px;top:79px;width:688px;height:41px;border-radius:4px 0 0 4px;"></div><div class="ov" style="left:1808px;top:79px;width:12px;height:41px;border-radius:0 4px 4px 0;"></div><svg style="left:1809px;top:109px" width="10" height="12" viewBox="0 0 10 12"><path d="M2 1.500 h7" stroke="#fff" stroke-width="1" opacity="0.8"/><path d="M1 0.500 h7" stroke="#858e9e" stroke-width="1"/><path d="M2.500 4 h7 l-3.500 4z" fill="#fff" opacity="0.8"/><path d="M1 3 h7 l-3.500 4z" fill="#858e9e"/></svg><svg style="left:1809px;top:84px" width="10" height="8" viewBox="0 0 10 8"><path d="M1 1 l2.500 2.500 l-2.500 2.500 M5 1 l2.500 2.500 l-2.500 2.500" fill="none" stroke="#8a93a3" stroke-width="1.300"/></svg><i style="left:1125px;top:88px;width:2px;height:2px;background:#8d97a8"></i><i style="left:1126px;top:89px;width:2px;height:2px;background:#fff"></i><i style="left:1125px;top:92px;width:2px;height:2px;background:#8d97a8"></i><i style="left:1126px;top:93px;width:2px;height:2px;background:#fff"></i><i style="left:1125px;top:96px;width:2px;height:2px;background:#8d97a8"></i><i style="left:1126px;top:97px;width:2px;height:2px;background:#fff"></i><i style="left:1125px;top:100px;width:2px;height:2px;background:#8d97a8"></i><i style="left:1126px;top:101px;width:2px;height:2px;background:#fff"></i><i style="left:1125px;top:104px;width:2px;height:2px;background:#8d97a8"></i><i style="left:1126px;top:105px;width:2px;height:2px;background:#fff"></i><i style="left:1125px;top:108px;width:2px;height:2px;background:#8d97a8"></i><i style="left:1126px;top:109px;width:2px;height:2px;background:#fff"></i>
<div style="left:1132px;top:88px;width:228px;height:24px;background:#fff;"></div><div style="left:1341px;top:89px;width:18px;height:22px;background:linear-gradient(#eef1f6,#d5dae4);border-left:1px solid #e6e9ef;"></div><svg style="left:1346px;top:97px" width="8" height="5" viewBox="0 0 8 5"><path d="M0 0 h8 l-4 4.500z" fill="#7f8794"/></svg><span class="t " style="left:1135.0px;top:91.5px;font-size:14.4px;line-height:19px;color:#000;transform:scaleX(0.9406);">Color by Classification</span>
<div class="hot" style="left:1363px;top:81px;width:38px;height:37px;"></div>
<svg style="left:1368.0px;top:86.0px" width="28" height="28" viewBox="0 0 28 28"><circle cx="6" cy="5" r="2.200" fill="#3b2a14"/><circle cx="11.500" cy="5" r="2.200" fill="#d9443f"/><circle cx="17" cy="5" r="2.200" fill="#f0932b"/><circle cx="22.500" cy="5" r="2.200" fill="#a4c650"/><path d="M6 10 h16 l-6 7 v5 l-3 2 v-7z" fill="#fcd06b" stroke="#5a3a12" stroke-width="1.300" stroke-linejoin="round"/><circle cx="14" cy="26" r="1.800" fill="#f0932b"/></svg>
<svg style="left:1405.0px;top:86.0px" width="28" height="28" viewBox="0 0 28 28"><circle cx="4" cy="14" r="2" fill="#6c8da8"/><circle cx="4" cy="19" r="2" fill="#6c8da8"/><circle cx="4" cy="24" r="2" fill="#6c8da8"/><circle cx="9" cy="9" r="2" fill="#6c8da8"/><circle cx="9" cy="14" r="2" fill="#6c8da8"/><circle cx="9" cy="19" r="2" fill="#6c8da8"/><circle cx="9" cy="24" r="2" fill="#6c8da8"/><circle cx="14" cy="4" r="2" fill="#6c8da8"/><circle cx="14" cy="9" r="2" fill="#6c8da8"/><circle cx="14" cy="14" r="2" fill="#6c8da8"/><circle cx="14" cy="19" r="2" fill="#6c8da8"/><circle cx="14" cy="24" r="2" fill="#6c8da8"/><circle cx="19" cy="4" r="2" fill="#6c8da8"/><circle cx="19" cy="9" r="2" fill="#6c8da8"/><circle cx="19" cy="14" r="2" fill="#6c8da8"/><circle cx="19" cy="19" r="2" fill="#6c8da8"/><circle cx="19" cy="24" r="2" fill="#6c8da8"/><circle cx="24" cy="4" r="2" fill="#6c8da8"/><circle cx="24" cy="9" r="2" fill="#6c8da8"/><circle cx="24" cy="14" r="2" fill="#6c8da8"/><circle cx="24" cy="19" r="2" fill="#6c8da8"/><circle cx="24" cy="24" r="2" fill="#6c8da8"/><path d="M2 2 L26 26" stroke="#17456a" stroke-width="1.600"/><path d="M2 2 L26 26" stroke="#e8ecf5" stroke-width="4" opacity="0" /></svg>
<svg style="left:1443.0px;top:86.0px" width="28" height="28" viewBox="0 0 28 28"><rect x="2" y="9" width="17" height="17" fill="#dfe6ec" stroke="#a9bccb" stroke-width="1.300"/><path d="M5 13 h11 v10 h-11z" fill="#a4c650"/><path d="M12 17 l9 -10 l3 3 l-10 9 l-3 1z" fill="#fff" stroke="#17456a" stroke-width="1.200"/><path d="M19 6 l3 -4 q3 0 4 3 l-4 3.500z" fill="#6c8da8" stroke="#17456a" stroke-width="1"/><path d="M18 5 l6 6" stroke="#17456a" stroke-width="2"/></svg>
<svg style="left:1481.0px;top:86.0px" width="28" height="28" viewBox="0 0 28 28"><path d="M14 3 L26 25 H2 Z" fill="#eef2f6" stroke="#17456a" stroke-width="2" stroke-linejoin="round"/><circle cx="14" cy="17" r="2.500" fill="#17456a"/></svg>
<svg style="left:1519.0px;top:86.0px" width="28" height="28" viewBox="0 0 28 28"><circle cx="10" cy="10" r="8.500" fill="#fbe9cf" stroke="#f0932b" stroke-width="1.200"/><circle cx="18" cy="18" r="8.500" fill="#fbe9cf" stroke="#f0932b" stroke-width="1.200"/><circle cx="6" cy="7" r="1.700" fill="#a4c650"/><circle cx="11" cy="5" r="1.700" fill="#a4c650"/><circle cx="15" cy="9" r="1.700" fill="#a4c650"/><circle cx="5" cy="12" r="1.700" fill="#a4c650"/><circle cx="10" cy="11" r="1.700" fill="#a4c650"/><circle cx="8" cy="16" r="1.700" fill="#a4c650"/><circle cx="15" cy="14" r="1.700" fill="#17456a"/><circle cx="20" cy="13" r="1.700" fill="#17456a"/><circle cx="23" cy="18" r="1.700" fill="#17456a"/><circle cx="13" cy="19" r="1.700" fill="#17456a"/><circle cx="18" cy="18" r="1.700" fill="#17456a"/><circle cx="16" cy="23" r="1.700" fill="#17456a"/><circle cx="21" cy="23" r="1.700" fill="#17456a"/></svg>
<svg style="left:1557.0px;top:86.0px" width="28" height="28" viewBox="0 0 28 28"><circle cx="10" cy="10" r="8.500" fill="none" stroke="#17456a" stroke-width="1.100" stroke-dasharray="2 1.500"/><circle cx="17" cy="18" r="8.500" fill="none" stroke="#17456a" stroke-width="1.100" stroke-dasharray="2 1.500"/><circle cx="14" cy="13" r="5" fill="none" stroke="#6c8da8" stroke-width="1" stroke-dasharray="2 1.500"/><circle cx="6" cy="7" r="1.900" fill="#a4c650"/><circle cx="11" cy="5" r="1.900" fill="#a4c650"/><circle cx="5" cy="12" r="1.900" fill="#a4c650"/><circle cx="22" cy="15" r="1.700" fill="#f0932b"/><circle cx="20" cy="22" r="1.700" fill="#f0932b"/><circle cx="15" cy="12" r="1.500" fill="#6c8da8"/><circle cx="12" cy="16" r="1.500" fill="#6c8da8"/></svg>
<svg style="left:1595.0px;top:86.0px" width="28" height="28" viewBox="0 0 28 28"><g opacity="0.550"><path d="M2 25 L8 12 L12 17 L16 3 L21 14 L25 25 Z" fill="#bcd58a" stroke="#a9bccb" stroke-width="1"/><path d="M8 12 L10 25 L12 17 L16 25 L16 3 M12 17 L21 14 L16 25 M21 14 L20 25" fill="none" stroke="#fff" stroke-width="1"/></g></svg>
<svg style="left:1633.0px;top:86.0px" width="28" height="28" viewBox="0 0 28 28"><path d="M14 2 l13 6 l-13 6 l-13 -6z" fill="#fcd06b"/><path d="M14 8 l13 6 l-13 7 l-13 -7z" fill="#9e2a2a"/><path d="M14 5 l11 6 l-11 6 l-11 -6z" fill="#5da52c"/><path d="M1 24 h26" stroke="#6c8da8" stroke-width="1.500"/></svg>
<svg style="left:1671.0px;top:86.0px" width="28" height="28" viewBox="0 0 28 28"><path d="M5 3 l17 12 M22 3 l-17 12" stroke="#17456a" stroke-width="1.600"/><circle cx="5" cy="3" r="2" fill="#17456a"/><circle cx="22" cy="3" r="2" fill="#17456a"/><circle cx="5" cy="15" r="2" fill="#17456a"/><circle cx="22" cy="15" r="2" fill="#17456a"/><path d="M8 9 a5.500 5 0 0 1 11 0 q0 3 -2 4 v2 h-7 v-2 q-2 -1 -2 -4z" fill="#17456a"/><circle cx="11.500" cy="9" r="1.300" fill="#dfe6ec"/><circle cx="15.500" cy="9" r="1.300" fill="#dfe6ec"/><circle cx="7" cy="23" r="2" fill="#d9443f"/><circle cx="12" cy="19.500" r="2" fill="#a4c650"/><circle cx="18" cy="20" r="2" fill="#f0932b"/><circle cx="14" cy="25" r="2" fill="#5a3510"/></svg>
<span class="t " style="left:1712.0px;top:90.5px;font-size:14.4px;line-height:19px;color:#3d424d;transform:scaleX(0.8946);">Selection</span>
<svg style="left:1773px;top:98px" width="8" height="5" viewBox="0 0 8 5"><path d="M0 0 h8 l-4 4.500z" fill="#7f8794"/></svg>
<div class="tb" style="left:1820px;top:79px;width:88px;height:41px;border-radius:4px 0 0 4px;"></div><div class="ov" style="left:1908px;top:79px;width:12px;height:41px;border-radius:0 4px 4px 0;"></div><svg style="left:1909px;top:109px" width="10" height="12" viewBox="0 0 10 12"><path d="M2 1.500 h7" stroke="#fff" stroke-width="1" opacity="0.8"/><path d="M1 0.500 h7" stroke="#858e9e" stroke-width="1"/><path d="M2.500 4 h7 l-3.500 4z" fill="#fff" opacity="0.8"/><path d="M1 3 h7 l-3.500 4z" fill="#858e9e"/></svg><svg style="left:1909px;top:84px" width="10" height="8" viewBox="0 0 10 8"><path d="M1 1 l2.500 2.500 l-2.500 2.500 M5 1 l2.500 2.500 l-2.500 2.500" fill="none" stroke="#8a93a3" stroke-width="1.300"/></svg><i style="left:1825px;top:88px;width:2px;height:2px;background:#8d97a8"></i><i style="left:1826px;top:89px;width:2px;height:2px;background:#fff"></i><i style="left:1825px;top:92px;width:2px;height:2px;background:#8d97a8"></i><i style="left:1826px;top:93px;width:2px;height:2px;background:#fff"></i><i style="left:1825px;top:96px;width:2px;height:2px;background:#8d97a8"></i><i style="left:1826px;top:97px;width:2px;height:2px;background:#fff"></i><i style="left:1825px;top:100px;width:2px;height:2px;background:#8d97a8"></i><i style="left:1826px;top:101px;width:2px;height:2px;background:#fff"></i><i style="left:1825px;top:104px;width:2px;height:2px;background:#8d97a8"></i><i style="left:1826px;top:105px;width:2px;height:2px;background:#fff"></i><i style="left:1825px;top:108px;width:2px;height:2px;background:#8d97a8"></i><i style="left:1826px;top:109px;width:2px;height:2px;background:#fff"></i>
<svg style="left:1835.0px;top:86.0px" width="28" height="28" viewBox="0 0 28 28"><rect x="1" y="1" width="26" height="26" rx="4" fill="#6c8da8" stroke="#4f7392" stroke-width="1.500"/><path d="M3 3 h12 l10 8 l-10 6 l-12 -4z" fill="#a9c46c"/><path d="M27 9 v14 l-12 -6z" fill="#b0282d"/><path d="M3 14 l12 3 l-6 5 l-6 1z" fill="#f6d06f"/><path d="M3 25 l6 -3 l6 -5 l10 8z" fill="#e8952f"/><path d="M3 3 l12 0 l10 8 l-10 6 l-12 -4 M15 17 l10 8 M15 17 l-12 8" fill="none" stroke="#fff" stroke-width="1.300"/></svg>
</div>
<div id="side-panels" class="grp">
<div style="left:1px;top:122px;width:527px;height:28px;background:#bac1ce;"></div>
<span class="t " style="left:4.0px;top:125.8px;font-size:14.4px;line-height:19px;color:#3f4652;transform:scaleX(0.9478);">Control Center (2 Layers)</span>
<svg style="left:475px;top:129px" width="50" height="14" viewBox="0 0 50 14"><path d="M1 10.500 h8" stroke="#8a8f98" stroke-width="2.200"/><rect x="19.800" y="1.800" width="9.500" height="9.500" fill="none" stroke="#8a8f98" stroke-width="1.500"/><path d="M38.500 1.500 l9.500 9.500 M48 1.500 l-9.500 9.500" stroke="#8a8f98" stroke-width="1.600"/></svg>
<div style="left:1px;top:150px;width:527px;height:41px;background:linear-gradient(#e9edf6,#e3e7f0 55%,#d3d8e3);"></div>
<svg style="left:7.5px;top:156.5px" width="27" height="27" viewBox="0 0 28 28"><path d="M7 2 H18 V21 H3 V6 Z" fill="#c6da8c" stroke="#a6c05a" stroke-width="1.2" opacity="1"/><path d="M8 11 l3 -4 l3 4 z" fill="#a6c05a" opacity="1"/><path d="M13 11 a4 4 0 0 1 6 4 l7 7 q0 2 -2 2 l-7 -7 a4 4 0 0 1 -5 -4 l3 2 l1.500 -1.500z" fill="#6c8da8" stroke="#17456a" stroke-width="0.800"/></svg>
<svg style="left:45.5px;top:156.5px" width="27" height="27" viewBox="0 0 28 28"><circle cx="14" cy="14" r="10.500" fill="#6c8da8" stroke="#4f7392" stroke-width="1.500"/><circle cx="8" cy="14" r="2.200" fill="#fff"/><circle cx="14" cy="14" r="2.200" fill="#fff"/><circle cx="20" cy="14" r="2.200" fill="#fff"/></svg>
<svg style="left:84.5px;top:156.5px" width="27" height="27" viewBox="0 0 28 28"><rect x="3.500" y="3" width="21" height="22" fill="#6c8da8" stroke="#4f7392" stroke-width="1.200"/><rect x="6" y="5.5" width="4" height="3" fill="#e9eef3"/><rect x="11.500" y="5.5" width="11" height="3" fill="#e9eef3"/><rect x="6" y="10.5" width="4" height="3" fill="#e9eef3"/><rect x="11.500" y="10.5" width="11" height="3" fill="#e9eef3"/><rect x="6" y="15.5" width="4" height="3" fill="#e9eef3"/><rect x="11.500" y="15.5" width="11" height="3" fill="#e9eef3"/><rect x="6" y="20.5" width="4" height="3" fill="#e9eef3"/><rect x="11.500" y="20.5" width="11" height="3" fill="#e9eef3"/></svg>
<svg style="left:122.5px;top:156.5px" width="27" height="27" viewBox="0 0 28 28"><path d="M7 2 H18 V21 H3 V6 Z" fill="#c6da8c" stroke="#a6c05a" stroke-width="1.2" opacity="1"/><path d="M8 11 l3 -4 l3 4 z" fill="#a6c05a" opacity="1"/><rect x="10" y="12" width="15" height="14" fill="none" stroke="#17456a" stroke-width="1.800" stroke-dasharray="2.500 1.800"/></svg>
<svg style="left:160.5px;top:156.5px" width="27" height="27" viewBox="0 0 28 28"><path d="M7 2 H18 V21 H3 V6 Z" fill="#c6da8c" stroke="#a6c05a" stroke-width="1.2" opacity="1"/><path d="M8 11 l3 -4 l3 4 z" fill="#a6c05a" opacity="1"/><line x1="18.15" y1="20.15" x2="22.349999999999998" y2="24.349999999999998" stroke="#2f5878" stroke-width="3.6" stroke-linecap="round"/><circle cx="15" cy="17" r="4.5" fill="#fff" stroke="#2f5878" stroke-width="2.8"/><circle cx="15" cy="17" r="3.2" fill="none" stroke="#17456a" stroke-width="1.3"/></svg>
<svg style="left:198.5px;top:156.5px" width="27" height="27" viewBox="0 0 28 28"><path d="M7 2 H18 V21 H3 V6 Z" fill="#c6da8c" stroke="#a6c05a" stroke-width="1.2" opacity="1"/><path d="M8 11 l3 -4 l3 4 z" fill="#a6c05a" opacity="1"/><path d="M8 20 q9 -10 18 0 q-9 8 -18 0z" fill="#fff" stroke="#17456a" stroke-width="1.500"/><circle cx="17" cy="19.500" r="3.200" fill="#17456a"/></svg>
<svg style="left:236.5px;top:156.5px" width="27" height="27" viewBox="0 0 28 28"><path d="M7 2 H18 V21 H3 V6 Z" fill="#c6da8c" stroke="#a6c05a" stroke-width="1.2" opacity="1"/><path d="M8 11 l3 -4 l3 4 z" fill="#a6c05a" opacity="1"/><circle cx="19" cy="19" r="6.500" fill="#fff" stroke="#17456a" stroke-width="1.500"/><path d="M15.500 15.500 l7 7 M22.500 15.500 l-7 7" stroke="#17456a" stroke-width="1.600"/></svg>
<div style="left:0px;top:190px;width:528px;height:76px;background:#fff;border:1px solid #a8adb8;box-sizing:border-box;"></div>
<svg style="left:7px;top:197px" width="11" height="11" viewBox="0 0 11 11"><rect x="0.500" y="0.500" width="10" height="10" rx="1" fill="#f4f4f4" stroke="#b0b0b0"/><path d="M3 5.500 h5" stroke="#3a4a9a" stroke-width="1.200"/></svg>
<svg style="left:12px;top:202px" width="40" height="50" viewBox="0 0 40 50"><path d="M7 0.500 h5 M19.500 7 v37 M19.500 22.500 h11 M19.500 44.500 h11" fill="none" stroke="#808080" stroke-width="1" stroke-dasharray="1 1"/></svg>
<svg style="left:24px;top:196px" width="13" height="13" viewBox="0 0 13 13"><rect x="0.600" y="0.600" width="11.8" height="11.8" fill="#c9c9c9" stroke="#1a1a1a" stroke-width="1.2"/><path d="M2.86 6.76 l2.6 2.86 l4.94 -6.5" fill="none" stroke="#000" stroke-width="1.500"/></svg>
<span class="t " style="left:58.0px;top:193.5px;font-size:14.4px;line-height:19px;color:#000;transform:scaleX(1.0100);">Automatic_Point_Cloud_Analysis.gmw</span>
<svg style="left:43px;top:218px" width="13" height="13" viewBox="0 0 13 13"><rect x="0.600" y="0.600" width="11.8" height="11.8" fill="#fff" stroke="#1a1a1a" stroke-width="1.2"/></svg>
<svg style="left:57px;top:217px" width="15" height="15" viewBox="0 0 15 15"><rect x="0.500" y="0.500" width="14" height="14" fill="#ffff00" stroke="#a8a800"/><rect x="3" y="3" width="9" height="9" fill="#9a8a60"/><path d="M3 3 h4 l-4 4z M12 12 h-4 l4 -4z" fill="#e03030"/><path d="M3 11 l8 -8 M5 12 l7 -7" stroke="#000" stroke-width="1"/></svg>
<span class="t " style="left:78.0px;top:215.0px;font-size:14.4px;line-height:19px;color:#000;transform:scaleX(0.9993);">Basemap.jp2</span>
<svg style="left:43px;top:240px" width="13" height="13" viewBox="0 0 13 13"><rect x="0.600" y="0.600" width="11.8" height="11.8" fill="#fff" stroke="#1a1a1a" stroke-width="1.2"/><path d="M2.86 6.76 l2.6 2.86 l4.94 -6.5" fill="none" stroke="#000" stroke-width="1.500"/></svg>
<svg style="left:57px;top:239px" width="15" height="15" viewBox="0 0 15 15"><rect x="0.500" y="0.500" width="14" height="14" fill="#ffff00" stroke="#a8a800"/><rect x="2.500" y="2.500" width="10" height="10" fill="#fff"/><rect x="4" y="4" width="2" height="2" fill="#000080"/><rect x="9" y="4" width="2" height="2" fill="#000080"/><rect x="6.500" y="6.500" width="2" height="2" fill="#000080"/><rect x="4" y="9" width="2" height="2" fill="#000080"/><rect x="9" y="9" width="2" height="2" fill="#000080"/></svg>
<span class="t " style="left:78.0px;top:237.5px;font-size:14.4px;line-height:19px;color:#000;transform:scaleX(0.9825);">Bridge_SSMC.laz [42,269,793 Features, 1,255 Deleted]</span>
<div style="left:1px;top:271px;width:527px;height:29px;background:#bac1ce;"></div>
<span class="t " style="left:4.0px;top:274.8px;font-size:14.4px;line-height:19px;color:#3f4652;transform:scaleX(0.9529);">Lidar/Terrain Display Controls</span>
<svg style="left:475px;top:278px" width="50" height="14" viewBox="0 0 50 14"><path d="M1 10.500 h8" stroke="#8a8f98" stroke-width="2.200"/><rect x="19.800" y="1.800" width="9.500" height="9.500" fill="none" stroke="#8a8f98" stroke-width="1.500"/><path d="M38.500 1.500 l9.500 9.500 M48 1.500 l-9.500 9.500" stroke="#8a8f98" stroke-width="1.600"/></svg>
<div style="left:0px;top:299px;width:528px;height:664px;background:#fff;border:1px solid #a8adb8;border-top:none;box-sizing:border-box;"></div>
<div style="left:507px;top:300px;width:20px;height:662px;background:#f0f0f0;"></div>
<div style="left:515px;top:458px;width:3px;height:467px;background:#8c8c8c;border-radius:1.500px;"></div>
<div style="left:2px;top:321px;width:503px;height:21px;background:#e7e7e7;"></div>
<svg style="left:7px;top:330px" width="11" height="8" viewBox="0 0 11 8"><path d="M0.500 0.500 h10 l-5 7z" fill="#000"/></svg>
<span class="t " style="left:23.0px;top:322.6px;font-size:13.5px;line-height:18px;color:#000;transform:scaleX(0.9743);font-weight:bold;">Point Filters</span>
<svg style="left:28px;top:368px" width="11" height="11" viewBox="0 0 11 11"><rect x="0.500" y="0.500" width="10" height="10" rx="1" fill="#f4f4f4" stroke="#b0b0b0"/><path d="M3 5.500 h5" stroke="#3a4a9a" stroke-width="1.200"/></svg>
<svg style="left:46px;top:367px" width="14" height="14" viewBox="0 0 14 14"><rect x="0.600" y="0.600" width="12.8" height="12.8" fill="#fff" stroke="#1a1a1a" stroke-width="1.2"/></svg>
<span class="t " style="left:73.0px;top:365.1px;font-size:12.8px;line-height:17px;color:#000;transform:scaleX(1.0080);">Elevation (m)</span>
<span class="t " style="left:66.0px;top:384.6px;font-size:12.8px;line-height:17px;color:#000;transform:scaleX(1.0339);">min:</span>
<div style="left:114px;top:385px;width:80px;height:19px;border:1.500px solid #1a1a1a;box-sizing:border-box;background:#fff;"></div>
<span class="t " style="left:119.0px;top:386.1px;font-size:12.8px;line-height:17px;color:#000;transform:scaleX(0.9740);">9.104089</span>
<span class="t " style="left:210.0px;top:384.6px;font-size:12.8px;line-height:17px;color:#000;transform:scaleX(1.0095);">max:</span>
<div style="left:258px;top:385px;width:80px;height:19px;border:1.500px solid #1a1a1a;box-sizing:border-box;background:#fff;"></div>
<span class="t " style="left:263.0px;top:386.1px;font-size:12.8px;line-height:17px;color:#000;transform:scaleX(0.9740);">64.32756</span>
<svg style="left:478px;top:385px" width="19" height="19" viewBox="0 0 19 19"><path d="M3.500 8 a6 6 0 0 1 10.500 -3.200 M15.500 11 a6 6 0 0 1 -10.500 3.200" fill="none" stroke="#3f6f94" stroke-width="2.600"/><path d="M16.500 1.500 v6 h-6z M2.500 17.500 v-6 h6z" fill="#3f6f94"/></svg>
<div style="left:89px;top:412px;width:371px;height:11px;background:#0a74da;border:1px solid #10243a;box-sizing:border-box;"></div>
<div style="left:89px;top:410px;width:11px;height:16px;background:#0a74da;"></div>
<div style="left:448px;top:410px;width:12px;height:16px;background:#0a74da;"></div>
<span class="t " style="left:75.0px;top:429.4px;font-size:15.5px;line-height:20px;color:#000;transform:scaleX(1.1429);font-family:'Liberation Serif',serif;">9.10</span>
<span class="t " style="left:439.0px;top:429.4px;font-size:15.5px;line-height:20px;color:#000;transform:scaleX(1.1183);font-family:'Liberation Serif',serif;">64.33</span>
<svg style="left:60px;top:448px" width="430" height="125" viewBox="60 448 430 125"><path d="M90.500 452 V524 M458.500 452 V524" stroke="#0a8a0a" stroke-width="1" stroke-dasharray="1 3"/><rect x="157.7" y="523.5" width="2.700" height="1.0" fill="#1272d2" stroke="#0a4f9a" stroke-width="0.500"/><rect x="161.0" y="490.5" width="2.700" height="34.0" fill="#1272d2" stroke="#0a4f9a" stroke-width="0.500"/><rect x="164.4" y="486.5" width="2.700" height="38.0" fill="#1272d2" stroke="#0a4f9a" stroke-width="0.500"/><rect x="167.7" y="494.5" width="2.700" height="30.0" fill="#1272d2" stroke="#0a4f9a" stroke-width="0.500"/><rect x="170.8" y="505.5" width="2.700" height="19.0" fill="#1272d2" stroke="#0a4f9a" stroke-width="0.500"/><rect x="173.5" y="503.5" width="2.700" height="21.0" fill="#1272d2" stroke="#0a4f9a" stroke-width="0.500"/><rect x="176.2" y="498.5" width="2.700" height="26.0" fill="#1272d2" stroke="#0a4f9a" stroke-width="0.500"/><rect x="179.0" y="487.5" width="2.700" height="37.0" fill="#1272d2" stroke="#0a4f9a" stroke-width="0.500"/><rect x="181.7" y="451.5" width="2.700" height="73.0" fill="#1272d2" stroke="#0a4f9a" stroke-width="0.500"/><rect x="184.4" y="456.5" width="2.700" height="68.0" fill="#1272d2" stroke="#0a4f9a" stroke-width="0.500"/><rect x="187.2" y="482.5" width="2.700" height="42.0" fill="#1272d2" stroke="#0a4f9a" stroke-width="0.500"/><rect x="189.9" y="497.5" width="2.700" height="27.0" fill="#1272d2" stroke="#0a4f9a" stroke-width="0.500"/><rect x="192.6" y="517.5" width="2.700" height="7.0" fill="#1272d2" stroke="#0a4f9a" stroke-width="0.500"/><rect x="195.4" y="521.5" width="2.700" height="3.0" fill="#1272d2" stroke="#0a4f9a" stroke-width="0.500"/><rect x="198.1" y="522.5" width="2.700" height="2.0" fill="#1272d2" stroke="#0a4f9a" stroke-width="0.500"/><rect x="200.9" y="523.0" width="2.700" height="1.5" fill="#1272d2" stroke="#0a4f9a" stroke-width="0.500"/><rect x="203.6" y="522.5" width="2.700" height="2.0" fill="#1272d2" stroke="#0a4f9a" stroke-width="0.500"/><rect x="206.3" y="522.5" width="2.700" height="2.0" fill="#1272d2" stroke="#0a4f9a" stroke-width="0.500"/><rect x="209.1" y="522.5" width="2.700" height="2.0" fill="#1272d2" stroke="#0a4f9a" stroke-width="0.500"/><rect x="211.8" y="522.5" width="2.700" height="2.0" fill="#1272d2" stroke="#0a4f9a" stroke-width="0.500"/><rect x="214.5" y="521.5" width="2.700" height="3.0" fill="#1272d2" stroke="#0a4f9a" stroke-width="0.500"/><rect x="217.3" y="522.5" width="2.700" height="2.0" fill="#1272d2" stroke="#0a4f9a" stroke-width="0.500"/><rect x="220.0" y="522.5" width="2.700" height="2.0" fill="#1272d2" stroke="#0a4f9a" stroke-width="0.500"/><rect x="222.7" y="523.5" width="2.700" height="1.0" fill="#1272d2" stroke="#0a4f9a" stroke-width="0.500"/><rect x="263" y="523" width="9" height="1.500" fill="#1272d2"/><path d="M89 524.500 H459 M128.500 524.500 v4 M430.500 524.500 v4" stroke="#000" stroke-width="1.300" fill="none"/></svg>
<span class="t " style="left:120.0px;top:527.6px;font-size:16px;line-height:21px;color:#000;transform:scaleX(1.0625);font-family:'Liberation Serif',serif;">15</span>
<span class="t " style="left:421.0px;top:527.6px;font-size:16px;line-height:21px;color:#000;transform:scaleX(1.1250);font-family:'Liberation Serif',serif;">60</span>
<span class="t " style="left:226.0px;top:545.9px;font-size:16.5px;line-height:21px;color:#000;transform:scaleX(1.0639);font-family:'Liberation Serif',serif;">Elevation (m)</span>
<div style="left:65px;top:577px;width:417px;height:1px;background:#a0a0a0;"></div>
<svg style="left:28px;top:587px" width="11" height="11" viewBox="0 0 11 11"><rect x="0.500" y="0.500" width="10" height="10" rx="1" fill="#f4f4f4" stroke="#b0b0b0"/><path d="M3 5.500 h5" stroke="#3a4a9a" stroke-width="1.200"/><path d="M5.500 3 v5" stroke="#3a4a9a" stroke-width="1.200"/></svg>
<svg style="left:46px;top:586px" width="14" height="14" viewBox="0 0 14 14"><rect x="0.600" y="0.600" width="12.8" height="12.8" fill="#fff" stroke="#1a1a1a" stroke-width="1.2"/></svg>
<span class="t " style="left:73.0px;top:584.6px;font-size:12.8px;line-height:17px;color:#000;transform:scaleX(1.0069);">Intensity</span>
<svg style="left:28px;top:608px" width="11" height="11" viewBox="0 0 11 11"><rect x="0.500" y="0.500" width="10" height="10" rx="1" fill="#f4f4f4" stroke="#b0b0b0"/><path d="M3 5.500 h5" stroke="#3a4a9a" stroke-width="1.200"/><path d="M5.500 3 v5" stroke="#3a4a9a" stroke-width="1.200"/></svg>
<svg style="left:46px;top:607px" width="14" height="14" viewBox="0 0 14 14"><rect x="0.600" y="0.600" width="12.8" height="12.8" fill="#fff" stroke="#1a1a1a" stroke-width="1.2"/></svg>
<span class="t " style="left:73.0px;top:605.6px;font-size:12.8px;line-height:17px;color:#000;transform:scaleX(0.9991);">Height Above Ground (m)</span>
<svg style="left:28px;top:629px" width="11" height="11" viewBox="0 0 11 11"><rect x="0.500" y="0.500" width="10" height="10" rx="1" fill="#f4f4f4" stroke="#b0b0b0"/><path d="M3 5.500 h5" stroke="#3a4a9a" stroke-width="1.200"/><path d="M5.500 3 v5" stroke="#3a4a9a" stroke-width="1.200"/></svg>
<svg style="left:46px;top:628px" width="14" height="14" viewBox="0 0 14 14"><rect x="0.600" y="0.600" width="12.8" height="12.8" fill="#fff" stroke="#1a1a1a" stroke-width="1.2"/></svg>
<span class="t " style="left:73.0px;top:626.6px;font-size:12.8px;line-height:17px;color:#000;transform:scaleX(1.0269);">Point Density (points/m^2)</span>
<svg style="left:28px;top:650px" width="11" height="11" viewBox="0 0 11 11"><rect x="0.500" y="0.500" width="10" height="10" rx="1" fill="#f4f4f4" stroke="#b0b0b0"/><path d="M3 5.500 h5" stroke="#3a4a9a" stroke-width="1.200"/></svg>
<svg style="left:46px;top:649px" width="14" height="14" viewBox="0 0 14 14"><rect x="0.600" y="0.600" width="12.8" height="12.8" fill="#fff" stroke="#1a1a1a" stroke-width="1.2"/><path d="M3.08 7.28 l2.8000000000000003 3.08 l5.32 -7.0" fill="none" stroke="#000" stroke-width="1.500"/></svg>
<span class="t " style="left:73.0px;top:647.6px;font-size:12.8px;line-height:17px;color:#000;transform:scaleX(0.9975);">Classifications (Right-Click for More Options)</span>
<svg style="left:28px;top:881px" width="11" height="11" viewBox="0 0 11 11"><rect x="0.500" y="0.500" width="10" height="10" rx="1" fill="#f4f4f4" stroke="#b0b0b0"/><path d="M3 5.500 h5" stroke="#3a4a9a" stroke-width="1.200"/><path d="M5.500 3 v5" stroke="#3a4a9a" stroke-width="1.200"/></svg>
<svg style="left:46px;top:880px" width="14" height="14" viewBox="0 0 14 14"><rect x="0.600" y="0.600" width="12.8" height="12.8" fill="#fff" stroke="#1a1a1a" stroke-width="1.2"/></svg>
<span class="t " style="left:73.0px;top:878.6px;font-size:12.8px;line-height:17px;color:#000;transform:scaleX(0.9927);">Return Types and Flags to Display</span>
<div style="left:67px;top:677px;width:415px;height:189px;border:1.500px solid #4a4a4a;border-top-color:#8a8a8a;box-sizing:border-box;background:#fff;overflow:hidden;"></div>
<div style="left:460px;top:679px;width:20px;height:185px;background:#f0f0f0;"></div>
<div style="left:469px;top:700px;width:3px;height:21px;background:#7a7a7a;border-radius:1.500px;"></div>
<div style="left:120px;top:679px;width:1px;height:185px;background:#e8eaf0;"></div>
<div style="left:170px;top:679px;width:1px;height:185px;background:#e8eaf0;"></div>
<div style="left:248px;top:679px;width:1px;height:185px;background:#e8eaf0;"></div>
<div style="left:459px;top:679px;width:1px;height:185px;background:#e8eaf0;"></div>
<span class="t " style="left:74.0px;top:681.6px;font-size:15.5px;line-height:20px;color:#1a1a1a;transform:scaleX(0.9445);">Code</span>
<span class="t " style="left:128.0px;top:681.6px;font-size:15.5px;line-height:20px;color:#1a1a1a;transform:scaleX(0.9719);">Color</span>
<span class="t " style="left:190.0px;top:681.6px;font-size:15.5px;line-height:20px;color:#1a1a1a;transform:scaleX(0.9429);">Count</span>
<span class="t " style="left:255.0px;top:681.6px;font-size:15.5px;line-height:20px;color:#1a1a1a;transform:scaleX(0.9803);">Description</span>
<div style="left:68px;top:678px;width:413px;height:186px;overflow:hidden"><svg style="left:4px;top:30px" width="16" height="16" viewBox="0 0 16 16"><rect x="0.500" y="0.500" width="15" height="15" rx="3" fill="#0a5fc2" stroke="#084c9e"/><path d="M4 8.300 l2.800 2.700 l5.200 -5.800" fill="none" stroke="#fff" stroke-width="1.400"/></svg><span class="t " style="left:25.0px;top:28.8px;font-size:15.5px;line-height:20px;color:#000;transform:scaleX(0.9280);">3</span><div style="left:71px;top:32px;width:11px;height:11px;background:#138013;"></div><span class="t " style="left:136.5px;top:28.8px;font-size:15.5px;line-height:20px;color:#000;transform:scaleX(1.0440);">0</span><span class="t " style="left:187.0px;top:28.8px;font-size:15.5px;line-height:20px;color:#000;transform:scaleX(0.9717);">Low Vegetation</span><svg style="left:4px;top:54px" width="16" height="16" viewBox="0 0 16 16"><rect x="0.500" y="0.500" width="15" height="15" rx="3" fill="#0a5fc2" stroke="#084c9e"/><path d="M4 8.300 l2.800 2.700 l5.200 -5.800" fill="none" stroke="#fff" stroke-width="1.400"/></svg><span class="t " style="left:25.0px;top:52.8px;font-size:15.5px;line-height:20px;color:#000;transform:scaleX(0.9280);">4</span><div style="left:71px;top:56px;width:11px;height:11px;background:#0fbf0f;"></div><span class="t " style="left:113.0px;top:52.8px;font-size:15.5px;line-height:20px;color:#000;transform:scaleX(0.9280);">2784253</span><span class="t " style="left:187.0px;top:52.8px;font-size:15.5px;line-height:20px;color:#000;transform:scaleX(0.9872);">Medium Vegetation</span><svg style="left:4px;top:78px" width="16" height="16" viewBox="0 0 16 16"><rect x="0.500" y="0.500" width="15" height="15" rx="3" fill="#0a5fc2" stroke="#084c9e"/><path d="M4 8.300 l2.800 2.700 l5.200 -5.800" fill="none" stroke="#fff" stroke-width="1.400"/></svg><span class="t " style="left:25.0px;top:76.8px;font-size:15.5px;line-height:20px;color:#000;transform:scaleX(0.9280);">5</span><div style="left:71px;top:80px;width:11px;height:11px;background:#10ff10;"></div><span class="t " style="left:117.5px;top:76.8px;font-size:15.5px;line-height:20px;color:#000;transform:scaleX(0.9087);">309526</span><span class="t " style="left:187.0px;top:76.8px;font-size:15.5px;line-height:20px;color:#000;transform:scaleX(0.9868);">High Vegetation</span><svg style="left:4px;top:102px" width="16" height="16" viewBox="0 0 16 16"><rect x="0.500" y="0.500" width="15" height="15" rx="3" fill="#0a5fc2" stroke="#084c9e"/><path d="M4 8.300 l2.800 2.700 l5.200 -5.800" fill="none" stroke="#fff" stroke-width="1.400"/></svg><span class="t " style="left:25.0px;top:100.8px;font-size:15.5px;line-height:20px;color:#000;transform:scaleX(0.9280);">6</span><div style="left:71px;top:104px;width:11px;height:11px;background:#ff8000;"></div><span class="t " style="left:136.5px;top:100.8px;font-size:15.5px;line-height:20px;color:#000;transform:scaleX(1.0440);">0</span><span class="t " style="left:187.0px;top:100.8px;font-size:15.5px;line-height:20px;color:#000;transform:scaleX(0.9973);">Building</span><svg style="left:4px;top:126px" width="16" height="16" viewBox="0 0 16 16"><rect x="0.600" y="0.600" width="14.800" height="14.800" rx="3" fill="#f3f3f3" stroke="#5a5a5a" stroke-width="1.100"/></svg><span class="t " style="left:25.0px;top:124.8px;font-size:15.5px;line-height:20px;color:#000;transform:scaleX(0.9280);">7</span><div style="left:71px;top:128px;width:11px;height:11px;background:#ff0808;"></div><span class="t " style="left:121.5px;top:124.8px;font-size:15.5px;line-height:20px;color:#000;transform:scaleX(0.9048);">20949</span><span class="t " style="left:187.0px;top:124.8px;font-size:15.5px;line-height:20px;color:#000;transform:scaleX(0.9483);">Low Point (Noise)</span><svg style="left:4px;top:150px" width="16" height="16" viewBox="0 0 16 16"><rect x="0.500" y="0.500" width="15" height="15" rx="3" fill="#0a5fc2" stroke="#084c9e"/><path d="M4 8.300 l2.800 2.700 l5.200 -5.800" fill="none" stroke="#fff" stroke-width="1.400"/></svg><span class="t " style="left:25.0px;top:148.8px;font-size:15.5px;line-height:20px;color:#000;transform:scaleX(0.9280);">8</span><div style="left:71px;top:152px;width:11px;height:11px;background:#804000;"></div><span class="t " style="left:136.5px;top:148.8px;font-size:15.5px;line-height:20px;color:#000;transform:scaleX(1.0440);">0</span><span class="t " style="left:187.0px;top:148.8px;font-size:15.5px;line-height:20px;color:#000;transform:scaleX(0.9608);">Model Key-point (mass poin...</span><svg style="left:4px;top:174px" width="16" height="16" viewBox="0 0 16 16"><rect x="0.500" y="0.500" width="15" height="15" rx="3" fill="#0a5fc2" stroke="#084c9e"/><path d="M4 8.300 l2.800 2.700 l5.200 -5.800" fill="none" stroke="#fff" stroke-width="1.400"/></svg><span class="t " style="left:25.0px;top:172.8px;font-size:15.5px;line-height:20px;color:#000;transform:scaleX(0.9280);">9</span><div style="left:71px;top:176px;width:11px;height:11px;background:#0000ff;"></div><span class="t " style="left:136.5px;top:172.8px;font-size:15.5px;line-height:20px;color:#000;transform:scaleX(1.0440);">0</span><span class="t " style="left:187.0px;top:172.8px;font-size:15.5px;line-height:20px;color:#000;transform:scaleX(0.9568);">Water</span></div>
<div style="left:23px;top:919px;width:144px;height:21px;background:#f0f0f0;border:1px solid #7a7a7a;box-sizing:border-box;"></div>
<span class="t " style="left:48.0px;top:921.1px;font-size:12.8px;line-height:17px;color:#000;transform:scaleX(0.9965);">Restore Defaults</span>
<div style="left:195px;top:919px;width:144px;height:21px;background:#f0f0f0;border:1px solid #7a7a7a;box-sizing:border-box;"></div>
<span class="t " style="left:254.0px;top:921.1px;font-size:12.8px;line-height:17px;color:#000;transform:scaleX(0.9497);">Help</span>
</div>
<div id="viewer-3d" class="grp">
<div style="left:528px;top:121px;width:6px;height:844px;background:#d1d6e0;"></div>
<div style="left:533px;top:122px;width:1386px;height:2px;background:#1a1a1a;"></div>
<div style="left:533px;top:124px;width:1386px;height:6px;background:#dde1ea;"></div>
<div style="left:533px;top:130px;width:1386px;height:112px;background:linear-gradient(#e9edf6,#e8ecf5);border-radius:5px 0 0 0;"></div>
<div style="left:535px;top:160px;width:1384px;height:38px;background:linear-gradient(#e9edf6 0%,#e4e8f1 60%,#d6dbe6 100%);"></div>
<div style="left:535px;top:199px;width:1384px;height:40px;background:linear-gradient(#e9edf6 0%,#e4e8f1 60%,#d6dbe6 100%);"></div>
<span class="t " style="left:537.0px;top:135.9px;font-size:14.4px;line-height:19px;color:#3d424d;transform:scaleX(0.9370);">3D Viewer</span>
<svg style="left:1865px;top:137px" width="50" height="14" viewBox="0 0 50 14"><path d="M1 10.500 h8" stroke="#70757e" stroke-width="2.200"/><rect x="19.800" y="1.800" width="9.500" height="9.500" fill="none" stroke="#70757e" stroke-width="1.500"/><path d="M38.500 1.500 l9.500 9.500 M48 1.500 l-9.500 9.500" stroke="#70757e" stroke-width="1.600"/></svg>
<svg style="left:540.0px;top:165.0px" width="28" height="28" viewBox="0 0 28 28"><line x1="17.38" y1="17.38" x2="25.08" y2="25.08" stroke="#6c8da8" stroke-width="3.6" stroke-linecap="round"/><circle cx="11.5" cy="11.5" r="8.4" fill="#fff" stroke="#6c8da8" stroke-width="2.8"/><circle cx="11.5" cy="11.5" r="7.1000000000000005" fill="none" stroke="#17456a" stroke-width="1.3"/><line x1="8.3" y1="11.5" x2="14.7" y2="11.5" stroke="#17456a" stroke-width="1.8"/><line x1="11.5" y1="8.3" x2="11.5" y2="14.7" stroke="#17456a" stroke-width="1.8"/></svg>
<svg style="left:579.0px;top:165.0px" width="28" height="28" viewBox="0 0 28 28"><line x1="17.38" y1="17.38" x2="25.08" y2="25.08" stroke="#6c8da8" stroke-width="3.6" stroke-linecap="round"/><circle cx="11.5" cy="11.5" r="8.4" fill="#fff" stroke="#6c8da8" stroke-width="2.8"/><circle cx="11.5" cy="11.5" r="7.1000000000000005" fill="none" stroke="#17456a" stroke-width="1.3"/><line x1="8.3" y1="11.5" x2="14.7" y2="11.5" stroke="#17456a" stroke-width="1.8"/></svg>
<svg style="left:616.0px;top:165.0px" width="28" height="28" viewBox="0 0 28 28"><circle cx="16" cy="4" r="2.600" fill="#17456a"/><path d="M15 8 l-5 3 l-1 5 M15 8 l2 7 l5 2 M16 14 l-3 6 l-4 6 M16 15 l4 5 l1 6" fill="none" stroke="#17456a" stroke-width="2.600" stroke-linecap="round" stroke-linejoin="round"/></svg>
<svg style="left:654.0px;top:165.0px" width="28" height="28" viewBox="0 0 28 28"><path d="M17 3 L27 26 H13z" fill="#e02626"/><path d="M20 8 L27 26 H19z" fill="#a81c1c"/><circle cx="11" cy="4" r="2.800" fill="#17456a"/><path d="M10 8 l-6 3 l0 5 M10 8 l2 7 l5 1 M11 14 l-3 6 l-3 6 M11 15 l4 5 l0 6" fill="none" stroke="#17456a" stroke-width="3" stroke-linecap="round" stroke-linejoin="round"/></svg>
<svg style="left:693.0px;top:165.0px" width="28" height="28" viewBox="0 0 28 28"><path d="M5 4 l22 8.500" stroke="#17456a" stroke-width="1.700"/><path d="M1.500 4 l3.500 1.500 l0.500 4 l7.500 3.500 q2 -2.500 6 -2 q6.500 1.500 6 7 q-1 4 -6 4 q-6.500 0 -7.500 -6 l-8 -5.500z" fill="#17456a"/><path d="M18.500 13 q4.500 1 4.500 4.500 l-5 0.500z" fill="#dfe6ec"/><path d="M9 23 l15 3.500 M14 20.500 l-1 3.500 M21 21.500 l0 4" stroke="#17456a" stroke-width="1.500" fill="none"/></svg>
<svg style="left:733.0px;top:165.0px" width="28" height="28" viewBox="0 0 28 28"><path d="M3 9 h15 v16 h-15z M9 3 h16 v16 h-16z M3 9 l6 -6 M18 9 l7 -6 M3 25 l6 -6 M18 25 l7 -6" fill="none" stroke="#6c8da8" stroke-width="1.400"/></svg>
<svg style="left:771.0px;top:165.0px" width="28" height="28" viewBox="0 0 28 28"><path d="M5 13 v12 h18 v-12 l-9 -8z" fill="#6c8da8" stroke="#17456a" stroke-width="1"/><path d="M1 14 l13 -11.500 l13 11.500" fill="none" stroke="#17456a" stroke-width="3"/><rect x="11.500" y="16" width="5" height="9" fill="#17456a"/></svg>
<div style="left:806px;top:169px;width:148px;height:22px;background:#fff;"></div><div style="left:935px;top:170px;width:18px;height:20px;background:linear-gradient(#eef1f6,#d5dae4);border-left:1px solid #e6e9ef;"></div><svg style="left:940px;top:177px" width="8" height="5" viewBox="0 0 8 5"><path d="M0 0 h8 l-4 4.500z" fill="#7f8794"/></svg><span class="t " style="left:809.0px;top:171.5px;font-size:14.4px;line-height:19px;color:#000;transform:scaleX(0.9454);">Top View</span>
<svg style="left:965.0px;top:165.0px" width="28" height="28" viewBox="0 0 28 28"><path d="M14 1 l2.500 10.500 l10.500 2.500 l-10.500 2.500 l-2.500 10.500 l-2.500 -10.500 l-10.500 -2.500 l10.500 -2.500z" fill="#f0932b"/><circle cx="14" cy="14" r="2.200" fill="#fff"/></svg>
<svg style="left:1003.0px;top:165.0px" width="28" height="28" viewBox="0 0 28 28"><path d="M7 26 L22 3" stroke="#8fc23e" stroke-width="2"/><path d="M1 14 h26" stroke="#d9443f" stroke-width="2"/><path d="M14 1 v26" stroke="#17456a" stroke-width="2"/></svg>
<svg style="left:1040.0px;top:165.0px" width="28" height="28" viewBox="0 0 28 28"><path d="M5 4 a6 6 0 0 1 9 6 l11 11 q1 3 -3 3 l-11 -11 a6 6 0 0 1 -8 -5 l4 3 l3 -1 l0 -3z" fill="#6c8da8" stroke="#55748d" stroke-width="0.8"/></svg>
<svg style="left:1078.0px;top:165.0px" width="28" height="28" viewBox="0 0 28 28"><rect x="2" y="1" width="10" height="10" rx="1" fill="#dfe6ec" stroke="#a9bccb" stroke-width="1.200"/><path d="M3 26 L26 3" stroke="#17456a" stroke-width="2"/><path d="M16 18 l2 -2 h9 v9 l-2 2z" fill="#17456a"/><rect x="16" y="18" width="9" height="9" fill="#dfe6ec" stroke="#6c8da8" stroke-width="1"/></svg>
<svg style="left:1117.0px;top:165.0px" width="28" height="28" viewBox="0 0 28 28"><ellipse cx="14" cy="14" rx="12.500" ry="6" fill="none" stroke="#17456a" stroke-width="1.500"/><ellipse cx="14" cy="14" rx="6" ry="12.500" fill="none" stroke="#17456a" stroke-width="1.500"/><rect x="8" y="10" width="12" height="9" rx="1.500" fill="#17456a"/><rect x="11" y="8" width="5" height="3" fill="#17456a"/><circle cx="14" cy="14.500" r="2.800" fill="#dfe6ec"/></svg>
<svg style="left:1158.0px;top:165.0px" width="28" height="28" viewBox="0 0 28 28"><polygon points="9.3,22.7 25.2,6.1 20.8,1.9 5.0,18.6" fill="#f0932b" stroke="#8a5a1e" stroke-width="1"/><polygon points="3.0,25.0 9.3,22.7 5.0,18.6" fill="#fcd06b" stroke="#8a5a1e" stroke-width="1"/><circle cx="3.8" cy="24.1" r="1.3" fill="#3b2a14"/><polygon points="23.1,8.2 25.2,6.1 20.8,1.9 18.8,4.1" fill="#fcd06b" stroke="#8a5a1e" stroke-width="1"/></svg>
<svg style="left:1196.0px;top:165.0px" width="28" height="28" viewBox="0 0 28 28"><rect x="-1" y="8" width="22" height="8" fill="#f0932b" stroke="#b86f1f" stroke-width="1" transform="rotate(-38 10 12)"/><path d="M11 26 l14 -13" stroke="#17456a" stroke-width="1.6"/><circle cx="11" cy="26" r="2.200" fill="#17456a"/><circle cx="25" cy="13" r="2.200" fill="#17456a"/></svg>
<svg style="left:1234.0px;top:165.0px" width="28" height="28" viewBox="0 0 28 28"><circle cx="14" cy="14" r="12" fill="#6c8da8" stroke="#17456a" stroke-width="1.3"/><rect x="12.300" y="11.500" width="3.400" height="10" rx="1" fill="#fff"/><circle cx="14" cy="7.500" r="2" fill="#fff"/></svg>
<svg style="left:1272.0px;top:165.0px" width="28" height="28" viewBox="0 0 28 28"><g opacity="0.650"><path d="M4 12 a7 7 0 0 1 12 -6 l-3 3 a3 3 0 0 0 -5 3 l5 5 l-3 3z" fill="#f0932b" stroke="#b5835a" stroke-width="1"/><path d="M16 6 l3 3 l-3 3 l-3 -3z M13 17 l-3 3 l-3 -3 l3 -3z" fill="#e9eef3" stroke="#a9bccb" stroke-width="0.800"/><path d="M21 15 v10 M16 20 h10" stroke="#6c8da8" stroke-width="1.500"/></g></svg>
<svg style="left:1312.0px;top:165.0px" width="28" height="28" viewBox="0 0 28 28"><path d="M5 25 L14 12 L18 16 L22 13 L26 25 Z" fill="#a4c650" stroke="#6b8a2e" stroke-width="1.100" stroke-linejoin="round"/><path d="M9 2 v6 M5.500 7 h7 l-3.500 4.500z" fill="#17456a" stroke="#17456a" stroke-width="2"/></svg>
<svg style="left:1350.0px;top:165.0px" width="28" height="28" viewBox="0 0 28 28"><path d="M3 25 L10 14 L13 18 L19 5 L26 25 Z" fill="#a4c650" stroke="#6b8a2e" stroke-width="1.100" stroke-linejoin="round"/><path d="M8 12 v-5 M4.500 8 h7 l-3.500 -4.500z" fill="#17456a" stroke="#17456a" stroke-width="2"/></svg>
<svg style="left:1389.0px;top:165.0px" width="28" height="28" viewBox="0 0 28 28"><g opacity="1"><rect x="4" y="3" width="6" height="20" fill="#a9bccb" stroke="#6c8da8" stroke-width="1"/><rect x="5" y="5" width="3" height="2" fill="#6c8da8"/><rect x="5" y="9" width="3" height="2" fill="#6c8da8"/><rect x="5" y="13" width="3" height="2" fill="#6c8da8"/><rect x="5" y="17" width="3" height="2" fill="#6c8da8"/><rect x="5" y="21" width="3" height="2" fill="#6c8da8"/><path d="M19 3 q6 8 6 12 a6 6 0 0 1 -12 0 q0 -4 6 -12z" fill="#6aa7b8" stroke="#6c8da8" stroke-width="1"/><path d="M2 24 q3 -3 6 0 t6 0 t6 0 t6 0" fill="none" stroke="#6c8da8" stroke-width="1.5"/></g></svg>
<svg style="left:1426.0px;top:165.0px" width="28" height="28" viewBox="0 0 28 28"><g opacity="1"><rect x="4" y="3" width="6" height="20" fill="#a9bccb" stroke="#6c8da8" stroke-width="1"/><rect x="5" y="5" width="3" height="2" fill="#6c8da8"/><rect x="5" y="9" width="3" height="2" fill="#6c8da8"/><rect x="5" y="13" width="3" height="2" fill="#6c8da8"/><rect x="5" y="17" width="3" height="2" fill="#6c8da8"/><rect x="5" y="21" width="3" height="2" fill="#6c8da8"/><path d="M19 3 q6 8 6 12 a6 6 0 0 1 -12 0 q0 -4 6 -12z" fill="#6aa7b8" stroke="#6c8da8" stroke-width="1"/><path d="M2 24 q3 -3 6 0 t6 0 t6 0 t6 0" fill="none" stroke="#6c8da8" stroke-width="1.5"/></g></svg>
<svg style="left:1464.0px;top:165.0px" width="28" height="28" viewBox="0 0 28 28"><g opacity="0.500"><rect x="6" y="6" width="6" height="19" fill="#a9bccb" stroke="#6c8da8" stroke-width="1"/><path d="M2 7 q3 -3 6 0 t6 0 t6 0 t6 0" fill="none" stroke="#6c8da8" stroke-width="1.300"/><path d="M19 3 q5 7 5 10 a5 5 0 0 1 -10 0 q0 -3 5 -10z" fill="#9ec5d1" stroke="#6c8da8" stroke-width="1"/><path d="M19 10 v6 M16 13 h6" stroke="#6c8da8" stroke-width="1.300"/></g></svg>
<div style="left:1500px;top:169px;width:189px;height:22px;background:#fff;"></div><div style="left:1670px;top:170px;width:18px;height:20px;background:linear-gradient(#eef1f6,#d5dae4);border-left:1px solid #e6e9ef;"></div><svg style="left:1675px;top:177px" width="8" height="5" viewBox="0 0 8 5"><path d="M0 0 h8 l-4 4.500z" fill="#7f8794"/></svg><span class="t " style="left:1503.0px;top:171.5px;font-size:14.4px;line-height:19px;color:#000;transform:scaleX(0.9385);">None (Solid Background)</span>
<svg style="left:539.0px;top:205.0px" width="28" height="28" viewBox="0 0 28 28"><g opacity="0.550"><path d="M3 3 q2 -1 4 1 l5 6 l8 -5 q3 0 1 2 l-6 7 l4 5 l4 -1 l-5 6 l-1 -3 l-4 -4 l-7 5 v-4 l4 -6 z" fill="#17456a"/><path d="M17 17 l9 9" stroke="#17456a" stroke-width="1.500"/><path d="M18 9 l4 4 M16 12 l3 3 M9 18 l4 4 M7 20 l3 3" stroke="#6c8da8" stroke-width="1"/></g></svg>
<svg style="left:578.0px;top:205.0px" width="28" height="28" viewBox="0 0 28 28"><rect x="3" y="12" width="22" height="14" fill="#17456a"/><path d="M2 8 l22 -6 l1.500 4 l-22 6z" fill="#17456a"/><path d="M6 7 l3 3 M11 5.500 l3 3 M16 4 l3 3 M21 3 l3 3" stroke="#e9eef3" stroke-width="1.600"/><path d="M11 15 l7 4 l-7 4z" fill="#a4c650"/></svg>
<svg style="left:616.0px;top:205.0px" width="28" height="28" viewBox="0 0 28 28"><circle cx="14" cy="14" r="12" fill="#eef2e6" fill-opacity="0.5" stroke="#64822e" stroke-width="1.600"/><path d="M10 7 l11 7 l-11 7z" fill="#b7d957" stroke="#6d8f2e" stroke-width="1.200"/></svg>
<svg style="left:654.0px;top:205.0px" width="28" height="28" viewBox="0 0 28 28"><circle cx="14" cy="14" r="12" fill="#fbe3e3" fill-opacity="0.35" stroke="#eeaaaa" stroke-width="1.500"/><rect x="8" y="8" width="12" height="12" fill="#f8c878" stroke="#f0a0a0" stroke-width="1.200"/></svg>
<svg style="left:692.0px;top:205.0px" width="28" height="28" viewBox="0 0 28 28"><circle cx="14" cy="14" r="12" fill="#fbe3e3" fill-opacity="0.35" stroke="#eeaaaa" stroke-width="1.500"/><circle cx="14" cy="14" r="6.500" fill="#f08a95"/></svg>
<svg style="left:730.0px;top:205.0px" width="28" height="28" viewBox="0 0 28 28"><circle cx="8" cy="7" r="4.500" fill="#17456a"/><circle cx="17" cy="7" r="4.500" fill="#17456a"/><rect x="3" y="11" width="16" height="12" rx="1" fill="#17456a"/><path d="M19 16 l7 -4 v11 l-7 -4z" fill="#17456a"/><path d="M8 23 l-3 4 M14 23 l3 4" stroke="#17456a" stroke-width="2"/></svg>
<svg style="left:768.0px;top:205.0px" width="28" height="28" viewBox="0 0 28 28"><path d="M2 8 h5 l2 -3.500 h9 l2 3.500 h6 v17 h-24z" fill="#17456a"/><circle cx="13.500" cy="16" r="5.500" fill="#fff"/><circle cx="13.500" cy="16" r="3.200" fill="#17456a"/><circle cx="23" cy="11" r="1.300" fill="#fff"/></svg>
<div style="left:533px;top:238px;width:1386px;height:2px;background:#d9dde6;"></div>
<div style="left:533px;top:240px;width:1386px;height:701px;background:#000;"></div>
<svg style="left:533px;top:240px" width="1386" height="701" viewBox="533 240 1386 701">
<defs><linearGradient id="bg" x1="534" x2="1680" y1="0" y2="0" gradientUnits="userSpaceOnUse"><stop offset="0" stop-color="#a2a2a2"/><stop offset="0.45" stop-color="#a1a1a1"/><stop offset="0.75" stop-color="#a9a9a9"/><stop offset="1" stop-color="#acacac"/></linearGradient></defs>
<polygon points="534.0,240.0 540.0,240.0 541.0,252.0 543.0,261.0 752.0,314.0 753.0,303.0 756.0,301.0 763.0,301.0 766.0,304.0 766.0,318.0 771.0,317.0 774.0,309.0 786.0,304.0 826.0,308.0 828.0,320.0 830.0,318.0 838.0,318.0 840.0,322.0 840.0,336.0 986.0,373.0 987.0,364.0 990.0,362.0 996.0,362.0 999.0,365.0 1000.0,381.0 1103.0,403.0 1104.0,396.0 1107.0,394.0 1111.0,396.0 1113.0,408.0 1190.0,426.0 1191.0,420.0 1197.0,419.0 1199.0,424.0 1201.0,424.0 1204.0,421.0 1220.0,428.0 1256.0,440.5 1257.0,432.5 1266.0,436.5 1267.0,443.5 1304.0,453.3 1305.0,446.3 1314.0,450.2 1315.0,456.2 1344.0,463.9 1345.0,458.9 1349.0,461.5 1350.0,465.5 1378.0,472.9 1378.0,468.9 1401.0,477.0 1401.0,479.0 1440.0,489.3 1441.0,484.3 1447.0,487.5 1448.0,491.5 1490.0,501.7 1491.0,495.7 1500.0,499.4 1501.0,504.4 1555.0,517.6 1556.0,511.6 1564.0,515.0 1565.0,520.0 1596.0,527.5 1597.0,522.5 1602.0,525.3 1603.0,529.3 1628.0,535.3 1629.0,530.3 1635.0,533.3 1636.0,537.3 1655.0,541.9 1656.0,537.9 1661.0,540.6 1662.0,543.6 1678.0,546.0 1681.0,551.0 1682.0,590.0 1660.0,586.5 1230.0,571.0 534.0,549.0" fill="url(#bg)" />
<ellipse cx="799.5" cy="293" rx="14" ry="15" fill="#a5a5a5"/>
<polygon points="772.0,318.0 774.0,309.0 787.0,303.0 812.0,303.0 824.0,308.0 827.0,320.0" fill="#a5a5a5" />
<ellipse cx="1209" cy="415" rx="8" ry="9" fill="#a9a9a9"/>
<polygon points="1200.0,440.0 1201.0,426.0 1205.0,421.0 1214.0,421.0 1222.0,426.0 1225.0,440.0" fill="#a9a9a9" />
<ellipse cx="1389.500" cy="463" rx="6" ry="7.500" fill="#a8a8a8"/>
<polygon points="1378.0,476.0 1379.0,471.0 1384.0,467.0 1395.0,467.0 1400.0,472.0 1401.0,482.0" fill="#a8a8a8" />
<rect x="1412" y="479.4" width="4.500" height="4.5" rx="1.500" fill="#a9a9a9"/>
<rect x="1423" y="480.8" width="4.500" height="6.0" rx="1.500" fill="#a9a9a9"/>
<rect x="1434" y="485.3" width="4.500" height="4.5" rx="1.500" fill="#a9a9a9"/>
<rect x="1445" y="488.2" width="4.500" height="4.5" rx="1.500" fill="#a9a9a9"/>
<rect x="1456" y="489.5" width="4.500" height="6.0" rx="1.500" fill="#a9a9a9"/>
<rect x="1467" y="493.6" width="4.500" height="4.5" rx="1.500" fill="#a9a9a9"/>
<rect x="1478" y="496.3" width="4.500" height="4.5" rx="1.500" fill="#a9a9a9"/>
<rect x="1489" y="497.5" width="4.500" height="6.0" rx="1.500" fill="#a9a9a9"/>
<rect x="1500" y="501.7" width="4.500" height="4.5" rx="1.500" fill="#a9a9a9"/>
<rect x="1511" y="504.4" width="4.500" height="4.5" rx="1.500" fill="#a9a9a9"/>
<rect x="1522" y="505.5" width="4.500" height="6.0" rx="1.500" fill="#a9a9a9"/>
<rect x="1533" y="509.7" width="4.500" height="4.5" rx="1.500" fill="#a9a9a9"/>
<rect x="1544" y="512.4" width="4.500" height="4.5" rx="1.500" fill="#a9a9a9"/>
<rect x="1555" y="513.6" width="4.500" height="6.0" rx="1.500" fill="#a9a9a9"/>
<rect x="1566" y="517.7" width="4.500" height="4.5" rx="1.500" fill="#a9a9a9"/>
<rect x="1577" y="520.4" width="4.500" height="4.5" rx="1.500" fill="#a9a9a9"/>
<rect x="1588" y="521.6" width="4.500" height="6.0" rx="1.500" fill="#a9a9a9"/>
<rect x="1599" y="525.8" width="4.500" height="4.5" rx="1.500" fill="#a9a9a9"/>
<rect x="1610" y="528.5" width="4.500" height="4.5" rx="1.500" fill="#a9a9a9"/>
<rect x="1621" y="529.6" width="4.500" height="6.0" rx="1.500" fill="#a9a9a9"/>
<rect x="1632" y="533.8" width="4.500" height="4.5" rx="1.500" fill="#a9a9a9"/>
<rect x="1643" y="536.5" width="4.500" height="4.5" rx="1.500" fill="#a9a9a9"/>
<rect x="1654" y="537.7" width="4.500" height="6.0" rx="1.500" fill="#a9a9a9"/>
<rect x="1665" y="541.8" width="4.500" height="4.5" rx="1.500" fill="#a9a9a9"/>
<rect x="1676" y="544.5" width="4.500" height="4.5" rx="1.500" fill="#a9a9a9"/>
<path d="M1256 443 V550" stroke="#9e9e9e" stroke-width="1" opacity="0.7"/>
<path d="M1267 445 V550" stroke="#9e9e9e" stroke-width="1" opacity="0.7"/>
<path d="M1304 455 V552" stroke="#9e9e9e" stroke-width="1" opacity="0.7"/>
<path d="M1315 458 V552" stroke="#9e9e9e" stroke-width="1" opacity="0.7"/>
<path d="M1378 475 V554" stroke="#9e9e9e" stroke-width="1" opacity="0.7"/>
<path d="M1401 481 V555" stroke="#9e9e9e" stroke-width="1" opacity="0.7"/>
<path d="M1490 504 V558" stroke="#9e9e9e" stroke-width="1" opacity="0.7"/>
<path d="M1501 506 V559" stroke="#9e9e9e" stroke-width="1" opacity="0.7"/>
<path d="M1555 520 V561" stroke="#9e9e9e" stroke-width="1" opacity="0.7"/>
<path d="M1565 522 V561" stroke="#9e9e9e" stroke-width="1" opacity="0.7"/>
<path d="M1596 530 V562" stroke="#9e9e9e" stroke-width="1" opacity="0.7"/>
<path d="M1628 537 V563" stroke="#9e9e9e" stroke-width="1" opacity="0.7"/>
<path d="M1227 466.0 L1254 471.9" stroke="#101010" stroke-width="2.6" />
<path d="M1227 441.9 L1254 449.0" stroke="#9a9a9a" stroke-width="1"/>
<path d="M1271 475.7 L1303 482.7" stroke="#101010" stroke-width="2.4" />
<path d="M1271 453.5 L1303 462.0" stroke="#9a9a9a" stroke-width="1"/>
<path d="M1316 485.6 L1343 491.5" stroke="#101010" stroke-width="2.0" />
<path d="M1316 465.5 L1343 472.6" stroke="#9a9a9a" stroke-width="1"/>
<path d="M1352 493.5 L1377 499.0" stroke="#101010" stroke-width="1.5" />
<path d="M1352 475.0 L1377 481.6" stroke="#9a9a9a" stroke-width="1"/>
<path d="M1405 505.2 L1438 512.5" stroke="#101010" stroke-width="1.2" />
<path d="M1405 489.1 L1438 497.8" stroke="#9a9a9a" stroke-width="1"/>
<path d="M1450 515.1 L1488 522.6" stroke="#101010" stroke-width="1.0" stroke-dasharray="3 4"/>
<path d="M1450 501.0 L1488 510.3" stroke="#9a9a9a" stroke-width="1"/>
<path d="M1503 525.6 L1553 535.5" stroke="#101010" stroke-width="0.9" stroke-dasharray="3 4"/>
<path d="M1503 513.9 L1553 526.1" stroke="#9a9a9a" stroke-width="1"/>
<path d="M1567 538.3 L1594 543.7" stroke="#101010" stroke-width="0.8" stroke-dasharray="3 4"/>
<path d="M1567 529.5 L1594 536.1" stroke="#9a9a9a" stroke-width="1"/>
<path d="M1605 545.9 L1626 550.0" stroke="#101010" stroke-width="0.8" stroke-dasharray="3 4"/>
<path d="M1605 538.7 L1626 543.9" stroke="#9a9a9a" stroke-width="1"/>
<path d="M1638 552.4 L1676 560.0" stroke="#101010" stroke-width="0.7" stroke-dasharray="3 4"/>
<path d="M1638 546.8 L1676 556.0" stroke="#9a9a9a" stroke-width="1"/>
<polygon points="543.0,316.0 750.0,361.0 750.0,365.5 543.0,320.5" fill="#000" />
<polygon points="766.5,318.0 770.5,317.0 770.5,368.0 766.5,367.0" fill="#000" />
<polygon points="549.2,276.0 553.7,281.0 549.2,286.0 544.7,281.0" fill="#000" />
<polygon points="557.8,285.8 559.5,287.5 557.8,289.2 556.1,287.5" fill="#000" />
<polygon points="565.6,280.1 569.9,284.9 565.6,289.8 561.2,284.9" fill="#000" />
<polygon points="574.2,289.7 575.9,291.4 574.2,293.1 572.5,291.4" fill="#000" />
<polygon points="582.0,284.1 586.2,288.8 582.0,293.5 577.8,288.8" fill="#000" />
<polygon points="590.6,293.6 592.3,295.3 590.6,297.0 588.9,295.3" fill="#000" />
<polygon points="598.4,288.1 602.5,292.7 598.4,297.2 594.3,292.7" fill="#000" />
<polygon points="607.0,297.5 608.7,299.2 607.0,300.9 605.3,299.2" fill="#000" />
<polygon points="614.8,292.1 618.8,296.5 614.8,300.9 610.9,296.5" fill="#000" />
<polygon points="623.4,301.3 625.1,303.0 623.4,304.7 621.7,303.0" fill="#000" />
<polygon points="631.2,296.2 635.1,300.4 631.2,304.7 627.4,300.4" fill="#000" />
<polygon points="639.8,305.2 641.5,306.9 639.8,308.6 638.1,306.9" fill="#000" />
<polygon points="647.7,300.2 651.3,304.3 647.7,308.4 644.0,304.3" fill="#000" />
<polygon points="656.3,309.1 658.0,310.8 656.3,312.5 654.6,310.8" fill="#000" />
<polygon points="664.1,304.2 667.6,308.2 664.1,312.1 660.5,308.2" fill="#000" />
<polygon points="672.7,313.0 674.4,314.7 672.7,316.4 671.0,314.7" fill="#000" />
<polygon points="680.5,308.3 683.9,312.1 680.5,315.9 677.1,312.1" fill="#000" />
<polygon points="689.1,316.9 690.8,318.6 689.1,320.3 687.4,318.6" fill="#000" />
<polygon points="696.9,312.3 700.2,315.9 696.9,319.6 693.6,315.9" fill="#000" />
<polygon points="705.5,320.7 707.2,322.4 705.5,324.1 703.8,322.4" fill="#000" />
<polygon points="713.3,316.3 716.5,319.8 713.3,323.3 710.2,319.8" fill="#000" />
<polygon points="721.9,324.6 723.6,326.3 721.9,328.0 720.2,326.3" fill="#000" />
<polygon points="729.7,320.3 732.8,323.7 729.7,327.0 726.7,323.7" fill="#000" />
<polygon points="738.3,328.5 740.0,330.2 738.3,331.9 736.6,330.2" fill="#000" />
<polygon points="746.2,324.4 749.0,327.6 746.2,330.8 743.3,327.6" fill="#000" />
<polygon points="754.8,332.4 756.5,334.1 754.8,335.8 753.1,334.1" fill="#000" />
<polygon points="553.1,297.1 565.3,300.2 565.3,314.2 553.1,311.1" fill="#000" />
<polygon points="569.6,301.1 581.5,304.0 581.5,317.6 569.6,314.6" fill="#000" />
<polygon points="586.1,305.0 597.6,307.8 597.6,321.0 586.1,318.1" fill="#000" />
<polygon points="602.6,308.9 613.8,311.7 613.8,324.4 602.6,321.6" fill="#000" />
<polygon points="619.1,312.8 629.9,315.5 629.9,327.7 619.1,325.0" fill="#000" />
<polygon points="635.6,316.7 646.1,319.3 646.1,331.1 635.6,328.5" fill="#000" />
<polygon points="652.1,320.6 662.3,323.1 662.3,334.5 652.1,332.0" fill="#000" />
<polygon points="668.6,324.5 678.4,327.0 678.4,337.9 668.6,335.4" fill="#000" />
<polygon points="685.1,328.4 694.6,330.8 694.6,341.3 685.1,338.9" fill="#000" />
<polygon points="701.6,332.3 710.8,334.6 710.8,344.7 701.6,342.4" fill="#000" />
<polygon points="718.1,336.3 726.9,338.5 726.9,348.1 718.1,345.9" fill="#000" />
<polygon points="734.6,340.2 743.1,342.3 743.1,351.4 734.6,349.3" fill="#000" />
<polygon points="842.0,379.5 984.0,410.5 984.0,413.5 842.0,382.5" fill="#000" />
<polygon points="846.4,365.6 851.6,366.8 851.6,374.4 846.4,373.2" fill="#000" />
<polygon points="856.6,368.0 861.7,369.1 861.7,376.6 856.6,375.4" fill="#000" />
<polygon points="866.8,370.3 871.8,371.4 871.8,378.7 866.8,377.6" fill="#000" />
<polygon points="877.0,372.7 881.9,373.8 881.9,380.9 877.0,379.8" fill="#000" />
<polygon points="887.2,375.1 892.0,376.1 892.0,383.1 887.2,382.0" fill="#000" />
<polygon points="897.4,377.4 902.1,378.5 902.1,385.3 897.4,384.2" fill="#000" />
<polygon points="907.6,379.8 912.2,380.8 912.2,387.4 907.6,386.4" fill="#000" />
<polygon points="917.8,382.1 922.3,383.1 922.3,389.6 917.8,388.6" fill="#000" />
<polygon points="928.0,384.5 932.4,385.5 932.4,391.8 928.0,390.8" fill="#000" />
<polygon points="938.2,386.9 942.5,387.8 942.5,394.0 938.2,393.0" fill="#000" />
<polygon points="948.4,389.2 952.6,390.2 952.6,396.2 948.4,395.2" fill="#000" />
<polygon points="958.6,391.6 962.7,392.5 962.7,398.3 958.6,397.4" fill="#000" />
<polygon points="968.8,394.0 972.8,394.8 972.8,400.5 968.8,399.6" fill="#000" />
<polygon points="979.0,396.3 983.0,397.2 983.0,402.7 979.0,401.8" fill="#000" />
<polygon points="845.0,349.8 847.2,352.0 845.0,354.2 842.8,352.0" fill="#000" />
<polygon points="854.8,352.2 856.9,354.3 854.8,356.5 852.6,354.3" fill="#000" />
<polygon points="864.6,354.5 866.7,356.6 864.6,358.8 862.5,356.6" fill="#000" />
<polygon points="874.4,356.9 876.4,359.0 874.4,361.0 872.3,359.0" fill="#000" />
<polygon points="884.1,359.2 886.2,361.3 884.1,363.3 882.1,361.3" fill="#000" />
<polygon points="893.9,361.6 895.9,363.6 893.9,365.6 891.9,363.6" fill="#000" />
<polygon points="903.7,364.0 905.7,365.9 903.7,367.9 901.8,365.9" fill="#000" />
<polygon points="913.5,366.3 915.4,368.2 913.5,370.2 911.6,368.2" fill="#000" />
<polygon points="923.3,368.7 925.2,370.6 923.3,372.5 921.4,370.6" fill="#000" />
<polygon points="933.1,371.1 934.9,372.9 933.1,374.7 931.2,372.9" fill="#000" />
<polygon points="942.9,373.4 944.7,375.2 942.9,377.0 941.1,375.2" fill="#000" />
<polygon points="952.6,375.8 954.4,377.5 952.6,379.3 950.9,377.5" fill="#000" />
<polygon points="962.4,378.1 964.1,379.9 962.4,381.6 960.7,379.9" fill="#000" />
<polygon points="972.2,380.5 973.9,382.2 972.2,383.9 970.5,382.2" fill="#000" />
<polygon points="982.0,382.9 983.6,384.5 982.0,386.1 980.4,384.5" fill="#000" />
<polygon points="1000.0,414.5 1101.0,436.5 1101.0,439.0 1000.0,417.0" fill="#000" />
<rect x="1004.0" y="402.5" width="2" height="5" fill="#111"/>
<rect x="1007.5" y="394.0" width="1.500" height="1.500" fill="#222"/>
<rect x="1011.8" y="404.3" width="2" height="5" fill="#111"/>
<rect x="1015.2" y="395.8" width="1.500" height="1.500" fill="#222"/>
<rect x="1019.5" y="406.1" width="2" height="5" fill="#111"/>
<rect x="1023.0" y="397.6" width="1.500" height="1.500" fill="#222"/>
<rect x="1027.2" y="407.9" width="2" height="5" fill="#111"/>
<rect x="1030.8" y="399.4" width="1.500" height="1.500" fill="#222"/>
<rect x="1035.0" y="409.7" width="2" height="5" fill="#111"/>
<rect x="1038.5" y="401.2" width="1.500" height="1.500" fill="#222"/>
<rect x="1042.8" y="411.5" width="2" height="5" fill="#111"/>
<rect x="1046.2" y="403.0" width="1.500" height="1.500" fill="#222"/>
<rect x="1050.5" y="413.2" width="2" height="5" fill="#111"/>
<rect x="1054.0" y="404.8" width="1.500" height="1.500" fill="#222"/>
<rect x="1058.2" y="415.0" width="2" height="5" fill="#111"/>
<rect x="1061.8" y="406.5" width="1.500" height="1.500" fill="#222"/>
<rect x="1066.0" y="416.8" width="2" height="5" fill="#111"/>
<rect x="1069.5" y="408.3" width="1.500" height="1.500" fill="#222"/>
<rect x="1073.8" y="418.6" width="2" height="5" fill="#111"/>
<rect x="1077.2" y="410.1" width="1.500" height="1.500" fill="#222"/>
<rect x="1081.5" y="420.4" width="2" height="5" fill="#111"/>
<rect x="1085.0" y="411.9" width="1.500" height="1.500" fill="#222"/>
<rect x="1089.2" y="422.2" width="2" height="5" fill="#111"/>
<rect x="1092.8" y="413.7" width="1.500" height="1.500" fill="#222"/>
<rect x="1097.0" y="424.0" width="2" height="5" fill="#111"/>
<rect x="1100.5" y="415.5" width="1.500" height="1.500" fill="#222"/>
<polygon points="1114.0,438.5 1190.0,455.0 1190.0,457.0 1114.0,440.5" fill="#000" />
<rect x="1118.3" y="428.8" width="1.400" height="4.400" fill="#222"/>
<rect x="1124.5" y="430.2" width="1.400" height="4.400" fill="#222"/>
<rect x="1130.7" y="431.6" width="1.400" height="4.400" fill="#222"/>
<rect x="1136.8" y="433.0" width="1.400" height="4.400" fill="#222"/>
<rect x="1143.0" y="434.4" width="1.400" height="4.400" fill="#222"/>
<rect x="1149.2" y="435.8" width="1.400" height="4.400" fill="#222"/>
<rect x="1155.4" y="437.3" width="1.400" height="4.400" fill="#222"/>
<rect x="1161.6" y="438.7" width="1.400" height="4.400" fill="#222"/>
<rect x="1167.8" y="440.1" width="1.400" height="4.400" fill="#222"/>
<rect x="1173.9" y="441.5" width="1.400" height="4.400" fill="#222"/>
<rect x="1180.1" y="442.9" width="1.400" height="4.400" fill="#222"/>
<rect x="1186.3" y="444.3" width="1.400" height="4.400" fill="#222"/>
<polygon points="541.0,240.0 548.0,240.0 546.0,252.0 542.0,256.0" fill="#000" />
<polygon points="534.0,549.0 839.0,558.6 839.0,631.0 534.0,646.0" fill="#8080ff" />
<polygon points="839.0,558.6 1283.5,573.8 1283.5,652.0 1263.0,649.0 1149.0,634.0 1070.0,623.0 985.0,612.0 940.0,610.0 900.0,606.0 852.0,607.0 839.0,607.0" fill="#8080ff" />
<polygon points="840.5,573.5 1283.0,585.0 1283.5,652.0 1263.0,649.0 1149.0,634.0 1070.0,623.0 985.0,612.0 940.0,610.0 900.0,606.0 852.0,607.0 852.0,607.0 840.5,607.0" fill="#8484ff" />
<polygon points="1283.0,573.2 1660.0,586.5 1634.0,590.0 1634.0,614.0 1580.0,614.0 1580.0,618.5 1476.0,613.8 1475.0,627.7 1283.7,615.0" fill="#8080ff" />
<polygon points="1284.5,585.5 1474.5,588.0 1474.5,627.2 1284.5,614.5" fill="#8a8afc" />
<polygon points="1476.5,588.0 1579.5,589.6 1579.5,618.0 1476.5,613.4" fill="#8a8afc" />
<polygon points="1260.0,572.0 1284.0,573.8 1284.0,646.0 1260.0,646.7" fill="#8080ff" />
<polygon points="775.0,556.0 797.0,557.0 791.0,572.0 787.0,592.0 784.0,580.0 780.0,568.0" fill="#a2a2a2" />
<polyline points="840.0,623.0 840.0,573.3 1283.5,584.8 1283.5,615.0" fill="none" stroke="#1c1c30" stroke-width="1.2" />
<polyline points="1283.7,615.0 1283.7,584.8 1475.0,587.4 1475.0,627.7 1283.7,615.0" fill="none" stroke="#1c1c30" stroke-width="1" />
<polyline points="1476.0,613.8 1476.0,587.4 1580.0,589.0 1580.0,618.5 1476.0,613.8" fill="none" stroke="#1c1c30" stroke-width="1" />
<polyline points="1580.0,589.0 1634.0,590.0 1634.0,614.0 1580.0,614.0" fill="none" stroke="#1c1c30" stroke-width="1" />
<polygon points="852.0,607.0 900.0,606.0 940.0,610.0 985.0,612.0 985.0,668.0 840.0,623.0 840.0,607.0" fill="#000" />
<polygon points="985.0,612.0 1070.0,623.0 1149.0,634.0 1263.0,649.0 1283.5,652.0 1283.5,706.0 1263.0,702.0 1005.0,655.0" fill="#000" />
<polygon points="840.5,607.0 852.0,607.0 852.0,627.0 840.5,623.5" fill="#a8a8a8" />
<polygon points="851.7,607.0 911.7,607.2 911.7,645.5 851.7,626.7" fill="#0000ff" />
<polygon points="917.0,607.7 932.8,609.3 932.8,652.2 917.0,647.2" fill="#0000ff" />
<polygon points="938.7,609.9 955.8,610.7 955.8,659.4 938.7,654.0" fill="#0000ff" />
<polygon points="965.7,611.1 980.0,611.8 980.0,667.0 965.7,662.5" fill="#0000ff" />
<polygon points="989.4,612.6 1018.4,616.3 1018.4,662.0 989.4,662.0" fill="#0000ff" />
<polygon points="1026.3,617.3 1036.9,618.7 1036.9,645.6 1026.3,645.6" fill="#0000ff" />
<polygon points="1037.5,618.8 1059.2,621.6 1059.2,668.0 1037.5,668.0" fill="#0000ff" />
<polygon points="1069.8,623.0 1082.1,624.7 1082.1,651.6 1069.8,651.6" fill="#0000ff" />
<polygon points="1084.9,625.1 1108.1,628.3 1108.1,675.0 1084.9,675.0" fill="#0000ff" />
<polygon points="1125.9,630.8 1140.3,632.8 1140.3,659.8 1125.9,659.8" fill="#0000ff" />
<polygon points="1145.8,633.6 1159.4,635.4 1159.4,682.0 1145.8,682.0" fill="#0000ff" />
<polygon points="1166.3,636.3 1172.4,637.1 1172.4,684.0 1166.3,684.0" fill="#0000ff" />
<polygon points="1198.4,640.5 1213.5,642.5 1213.5,670.0 1198.4,670.0" fill="#0000ff" />
<polygon points="1230.6,644.7 1258.6,648.4 1258.6,698.0 1230.6,698.0" fill="#0000ff" />
<polygon points="534.0,646.0 839.0,631.0 840.0,623.0 980.0,667.0 1014.0,680.0 1014.0,845.0 960.0,835.0 900.0,800.0 800.0,790.0 534.0,780.0" fill="#a4a4a4" />
<polyline points="840.0,623.0 980.0,667.0" fill="none" stroke="#222" stroke-width="1" />
<polyline points="842.0,573.0 842.0,640.0" fill="none" stroke="#555" stroke-width="0.8" />
<polygon points="1005.0,655.0 1263.0,702.0 1263.0,774.0 1021.0,707.0" fill="#ababab" />
<polygon points="1021.0,707.0 1263.0,774.0 1263.0,797.5 1032.0,869.0 1021.0,850.0" fill="#844200" />
<polygon points="980.0,610.0 982.0,607.5 988.0,607.5 989.5,636.0 1007.0,636.0 1009.0,650.0 1009.5,662.0 1014.5,676.0 1020.0,681.0 1021.0,737.0 1026.5,741.0 1026.5,842.0 1014.0,842.0 1012.0,800.0 980.0,800.0" fill="#acacac" />
<polyline points="1009.5,662.0 1014.5,676.0 1020.0,681.0 1021.0,737.0" fill="none" stroke="#333" stroke-width="0.8" />
<polyline points="1012.0,700.0 1010.0,760.0 1013.0,842.0" fill="none" stroke="#8a8a8a" stroke-width="0.8" />
<polygon points="872.0,634.0 876.0,622.0 881.0,617.0 880.0,612.5 884.0,610.5 888.0,613.0 887.0,618.0 885.0,622.0 887.0,635.0" fill="#a6a6a6" />
<polygon points="884.0,638.0 888.0,626.0 893.0,622.5 892.0,618.5 896.0,616.0 900.0,619.0 899.0,623.0 901.0,628.0 902.0,641.0" fill="#a9a9a9" />
<polygon points="841.0,574.0 896.0,575.5 1000.0,578.2 1283.0,585.5 1283.0,587.0 1000.0,581.0 896.0,581.0 841.0,582.0" fill="#9c9c9c" />
<polygon points="841.0,574.0 880.0,575.0 880.0,579.0 841.0,580.0" fill="#8a8a8a" />
<polyline points="840.0,623.0 840.0,573.3 1283.5,584.8 1283.5,615.0" fill="none" stroke="#1c1c30" stroke-width="1.2" />
<path d="M1268 612 L1168 607.500 Q1150.500 607 1150.500 625 Q1150.500 641 1166 644 L1268 657.500" fill="none" stroke="#a6a6a6" stroke-width="7.400" stroke-linecap="round"/>
<path d="M1162.800 607 V684.500 M1227.200 610 V696" stroke="#a6a6a6" stroke-width="7"/>
<polygon points="1284.0,615.0 1475.0,627.7 1476.0,613.8 1580.0,618.5 1640.0,612.0 1640.0,640.0 1580.0,640.0 1476.0,633.0 1420.0,632.0 1284.0,625.0" fill="#a8a8a8" />
<polygon points="1284.0,624.0 1330.0,627.0 1420.0,631.0 1476.0,633.0 1560.0,638.0 1600.0,642.0 1600.0,651.0 1560.0,648.0 1476.0,644.0 1420.0,641.0 1330.0,634.0 1284.0,632.0" fill="#844200" />
<rect x="1289.0" y="616.0" width="5.0" height="17.5" fill="#0000ff"/>
<rect x="1295.0" y="616.0" width="17.7" height="68.0" fill="#0000ff"/>
<rect x="1316.0" y="617.7" width="10.0" height="18.3" fill="#0000ff"/>
<rect x="1335.0" y="619.0" width="12.7" height="33.7" fill="#0000ff"/>
<rect x="1349.0" y="620.0" width="8.0" height="19.0" fill="#0000ff"/>
<rect x="1358.0" y="620.0" width="18.7" height="72.8" fill="#0000ff"/>
<rect x="1380.0" y="622.0" width="13.0" height="34.0" fill="#0000ff"/>
<rect x="1416.0" y="625.6" width="10.8" height="17.1" fill="#0000ff"/>
<rect x="1427.8" y="626.0" width="4.7" height="34.6" fill="#0000ff"/>
<rect x="1433.0" y="626.0" width="21.0" height="78.0" fill="#0000ff"/>
<rect x="1455.7" y="628.0" width="11.3" height="18.0" fill="#0000ff"/>
<rect x="1484.0" y="613.8" width="15.0" height="52.2" fill="#0000ff"/>
<rect x="1499.7" y="615.6" width="12.3" height="32.9" fill="#0000ff"/>
<rect x="1548.0" y="617.0" width="16.0" height="54.7" fill="#0000ff"/>
<rect x="1605.0" y="613.8" width="13.0" height="31.2" fill="#0000ff"/>
<polygon points="1681.6,587.6 1677.1,586.9 1671.6,587.7 1665.4,587.9 1660.1,587.2 1660.1,589.4 1655.4,592.2 1649.4,589.7 1645.1,592.5 1639.6,590.2 1635.0,588.7 1634.7,595.5 1633.3,600.7 1633.6,609.4 1633.4,614.3 1628.9,613.5 1623.4,612.3 1617.1,612.8 1618.4,618.9 1617.6,624.7 1617.9,628.7 1618.6,635.5 1617.5,640.1 1618.1,646.5 1625.5,651.2 1631.0,651.8 1634.8,655.7 1639.3,656.0 1644.1,656.0 1650.5,655.0 1655.8,653.3 1660.4,651.9 1665.2,648.8 1670.7,648.3 1674.9,644.7 1677.9,640.8 1682.8,638.0 1686.9,631.1 1689.8,628.7 1692.3,622.8 1695.8,616.5 1698.9,614.1 1702.3,607.0 1704.8,603.9 1706.2,596.6 1709.1,592.7 1711.6,587.1 1712.6,579.7 1717.6,579.5 1723.6,574.6 1726.9,572.9 1731.8,571.9 1737.3,569.1 1741.0,567.7 1736.9,566.1 1733.3,564.4 1727.6,561.9 1723.2,557.4 1718.8,558.1 1713.1,559.2 1706.6,558.6 1700.4,560.5 1694.7,559.3 1689.4,560.6 1682.0,560.0" fill="#aaaaaa" />
<polygon points="1589.7,644.2 1594.0,645.9 1599.2,648.1 1604.1,651.5 1609.5,651.8 1613.0,655.9 1617.5,658.2 1622.7,665.0 1627.1,663.9 1631.6,663.4 1637.3,665.1 1643.5,665.6 1647.0,669.8 1652.9,663.2 1657.7,659.3 1662.5,659.7 1667.9,655.2 1671.5,650.5 1674.9,647.9 1679.3,643.7 1682.5,637.3 1687.0,636.1 1690.7,631.2 1687.1,634.7 1682.5,637.6 1679.2,639.4 1675.1,644.1 1670.3,648.3 1666.4,649.8 1661.1,654.5 1655.9,654.5 1649.4,654.6 1644.4,655.2 1640.2,658.6 1635.7,655.6 1630.3,655.5 1624.2,653.6 1619.3,650.6 1612.0,646.0" fill="#844200" />
<polygon points="1716.3,577.0 1720.3,575.9 1725.2,574.3 1730.5,571.8 1733.9,573.6 1738.2,572.7 1741.6,573.3 1737.7,576.6 1732.3,578.7 1728.0,580.0" fill="#844200" />
<path d="M1644 611 q-1 1 2 -4" stroke="#2c2c2c" stroke-width="0.800" fill="none"/>
<path d="M1623 636 q-2 -2 7 -0" stroke="#2c2c2c" stroke-width="0.800" fill="none"/>
<path d="M1681 578 q1 3 0 2" stroke="#2c2c2c" stroke-width="0.800" fill="none"/>
<path d="M1684 570 q3 1 -3 -5" stroke="#2c2c2c" stroke-width="0.800" fill="none"/>
<path d="M1659 633 q-1 3 5 -4" stroke="#2c2c2c" stroke-width="0.800" fill="none"/>
<path d="M1635 583 q5 -1 2 -2" stroke="#2c2c2c" stroke-width="0.800" fill="none"/>
<path d="M1669 598 q-1 1 1 4" stroke="#2c2c2c" stroke-width="0.800" fill="none"/>
<path d="M1684 579 q4 4 6 1" stroke="#2c2c2c" stroke-width="0.800" fill="none"/>
<path d="M1688 583 q3 1 -3 -4" stroke="#2c2c2c" stroke-width="0.800" fill="none"/>
<path d="M1630 633 q-1 -3 -3 3" stroke="#2c2c2c" stroke-width="0.800" fill="none"/>
<path d="M1703 569 q1 -4 3 -2" stroke="#2c2c2c" stroke-width="0.800" fill="none"/>
<path d="M1651 572 q1 -4 -4 -1" stroke="#2c2c2c" stroke-width="0.800" fill="none"/>
<path d="M1679 578 q-5 3 -3 5" stroke="#2c2c2c" stroke-width="0.800" fill="none"/>
<path d="M1665 609 q1 1 1 1" stroke="#2c2c2c" stroke-width="0.800" fill="none"/>
<path d="M1662 626 q-3 -2 7 0" stroke="#2c2c2c" stroke-width="0.800" fill="none"/>
<path d="M1673 566 q-1 1 -7 1" stroke="#2c2c2c" stroke-width="0.800" fill="none"/>
<path d="M1681 570 q1 -0 3 -1" stroke="#2c2c2c" stroke-width="0.800" fill="none"/>
<path d="M1645 604 q1 -1 -2 -2" stroke="#2c2c2c" stroke-width="0.800" fill="none"/>
<path d="M1656 616 q-2 -1 4 -5" stroke="#2c2c2c" stroke-width="0.800" fill="none"/>
<path d="M1651 584 q3 -2 -4 -1" stroke="#2c2c2c" stroke-width="0.800" fill="none"/>
<path d="M1687 574 q-2 -1 5 -1" stroke="#2c2c2c" stroke-width="0.800" fill="none"/>
<path d="M1702 579 q-2 1 5 -0" stroke="#2c2c2c" stroke-width="0.800" fill="none"/>
<path d="M1643 575 q0 -2 4 3" stroke="#2c2c2c" stroke-width="0.800" fill="none"/>
<path d="M1639 589 q3 1 4 -2" stroke="#2c2c2c" stroke-width="0.800" fill="none"/>
<path d="M1634 590 q3 -2 -2 -1" stroke="#2c2c2c" stroke-width="0.800" fill="none"/>
<path d="M1661 600 q4 -3 -7 4" stroke="#2c2c2c" stroke-width="0.800" fill="none"/>
<path d="M1684 609 q-2 -1 -4 -4" stroke="#2c2c2c" stroke-width="0.800" fill="none"/>
<path d="M1677 589 q3 -4 6 2" stroke="#2c2c2c" stroke-width="0.800" fill="none"/>
<path d="M1623 628 q-3 -2 2 0" stroke="#2c2c2c" stroke-width="0.800" fill="none"/>
<path d="M1679 594 q-2 3 -0 3" stroke="#2c2c2c" stroke-width="0.800" fill="none"/>
<path d="M1655 582 q0 3 -5 3" stroke="#2c2c2c" stroke-width="0.800" fill="none"/>
<path d="M1699 566 q1 3 -6 -2" stroke="#2c2c2c" stroke-width="0.800" fill="none"/>
<path d="M1647 610 q-1 -0 4 -5" stroke="#2c2c2c" stroke-width="0.800" fill="none"/>
<path d="M1627 576 q-4 -3 7 4" stroke="#2c2c2c" stroke-width="0.800" fill="none"/>
<path d="M1630 608 q-2 -1 -2 1" stroke="#2c2c2c" stroke-width="0.800" fill="none"/>
<path d="M1677 596 q-3 -1 -5 1" stroke="#2c2c2c" stroke-width="0.800" fill="none"/>
<path d="M1689 597 q-4 -3 -2 1" stroke="#2c2c2c" stroke-width="0.800" fill="none"/>
<path d="M1662 597 q-0 2 -1 2" stroke="#2c2c2c" stroke-width="0.800" fill="none"/>
<path d="M1665 586 q0 2 -6 -1" stroke="#2c2c2c" stroke-width="0.800" fill="none"/>
<path d="M1646 604 q-4 3 2 4" stroke="#2c2c2c" stroke-width="0.800" fill="none"/>
<path d="M1632 615 q-5 -3 4 -5" stroke="#2c2c2c" stroke-width="0.800" fill="none"/>
<path d="M1631 573 q4 -3 -7 3" stroke="#2c2c2c" stroke-width="0.800" fill="none"/>
<path d="M1633 637 q2 3 6 1" stroke="#2c2c2c" stroke-width="0.800" fill="none"/>
<path d="M1696 568 q3 0 3 -4" stroke="#2c2c2c" stroke-width="0.800" fill="none"/>
<path d="M1628 593 q1 3 -4 -3" stroke="#2c2c2c" stroke-width="0.800" fill="none"/>
<path d="M1645 617 q3 -1 -2 -1" stroke="#2c2c2c" stroke-width="0.800" fill="none"/>
<path d="M1655 601 q-4 0 7 -1" stroke="#2c2c2c" stroke-width="0.800" fill="none"/>
<path d="M1692 579 q2 2 2 0" stroke="#2c2c2c" stroke-width="0.800" fill="none"/>
<path d="M1667 620 q4 -3 -6 2" stroke="#2c2c2c" stroke-width="0.800" fill="none"/>
<path d="M1663 626 q-3 -2 -4 1" stroke="#2c2c2c" stroke-width="0.800" fill="none"/>
<path d="M1651 585 q2 4 -3 2" stroke="#2c2c2c" stroke-width="0.800" fill="none"/>
<path d="M1660 638 q1 -2 -4 -5" stroke="#2c2c2c" stroke-width="0.800" fill="none"/>
<path d="M1667 598 q-3 -1 -2 3" stroke="#2c2c2c" stroke-width="0.800" fill="none"/>
<path d="M1635 649 q-0 1 -0 3" stroke="#2c2c2c" stroke-width="0.800" fill="none"/>
<path d="M1667 626 q4 -1 3 5" stroke="#2c2c2c" stroke-width="0.800" fill="none"/>
<path d="M1665 585 q-3 2 2 5" stroke="#2c2c2c" stroke-width="0.800" fill="none"/>
<path d="M1701 586 q-3 -2 -4 2" stroke="#2c2c2c" stroke-width="0.800" fill="none"/>
<path d="M1646 639 q-2 -1 3 -4" stroke="#2c2c2c" stroke-width="0.800" fill="none"/>
<path d="M1631 636 q-2 -1 1 2" stroke="#2c2c2c" stroke-width="0.800" fill="none"/>
<path d="M1623 593 q-1 -0 -4 1" stroke="#2c2c2c" stroke-width="0.800" fill="none"/>
<path d="M1673 575 q-2 1 -5 4" stroke="#2c2c2c" stroke-width="0.800" fill="none"/>
<path d="M1707 573 q4 -1 4 3" stroke="#2c2c2c" stroke-width="0.800" fill="none"/>
<path d="M1649 622 q2 2 -3 3" stroke="#2c2c2c" stroke-width="0.800" fill="none"/>
<path d="M1672 575 q-0 -1 3 2" stroke="#2c2c2c" stroke-width="0.800" fill="none"/>
<path d="M1675 580 q1 1 -4 4" stroke="#2c2c2c" stroke-width="0.800" fill="none"/>
<path d="M1683 575 q4 -3 -2 2" stroke="#2c2c2c" stroke-width="0.800" fill="none"/>
<path d="M1678 612 q1 -0 -3 -3" stroke="#2c2c2c" stroke-width="0.800" fill="none"/>
<path d="M1628 626 q3 0 3 -1" stroke="#2c2c2c" stroke-width="0.800" fill="none"/>
<path d="M1647 598 q4 -4 0 -3" stroke="#2c2c2c" stroke-width="0.800" fill="none"/>
<path d="M1694 595 q-2 -1 1 3" stroke="#2c2c2c" stroke-width="0.800" fill="none"/>
<path d="M1655 637 q-4 -2 -6 -4" stroke="#2c2c2c" stroke-width="0.800" fill="none"/>
<path d="M1639 581 q-1 2 4 2" stroke="#2c2c2c" stroke-width="0.800" fill="none"/>
<path d="M1677 577 q-1 -2 0 1" stroke="#2c2c2c" stroke-width="0.800" fill="none"/>
<path d="M1641 586 q3 -4 4 4" stroke="#2c2c2c" stroke-width="0.800" fill="none"/>
<path d="M1673 615 q1 4 3 -2" stroke="#2c2c2c" stroke-width="0.800" fill="none"/>
<path d="M1622 630 q2 -0 0 -0" stroke="#2c2c2c" stroke-width="0.800" fill="none"/>
<path d="M1640 610 q-5 0 2 -1" stroke="#2c2c2c" stroke-width="0.800" fill="none"/>
<path d="M1705 577 q3 1 -6 -1" stroke="#2c2c2c" stroke-width="0.800" fill="none"/>
<path d="M1644 572 q0 3 -2 4" stroke="#2c2c2c" stroke-width="0.800" fill="none"/>
<path d="M1687 576 q4 1 6 2" stroke="#2c2c2c" stroke-width="0.800" fill="none"/>
<path d="M1691 594 q3 3 5 -1" stroke="#2c2c2c" stroke-width="0.800" fill="none"/>
<path d="M1629 582 q-3 -0 3 0" stroke="#2c2c2c" stroke-width="0.800" fill="none"/>
<path d="M1661 620 q-2 -0 4 -1" stroke="#2c2c2c" stroke-width="0.800" fill="none"/>
<path d="M1639 641 q2 -1 -2 0" stroke="#2c2c2c" stroke-width="0.800" fill="none"/>
<path d="M1677 584 q-5 -2 4 -4" stroke="#2c2c2c" stroke-width="0.800" fill="none"/>
<path d="M1665 582 q-3 -3 -1 -3" stroke="#2c2c2c" stroke-width="0.800" fill="none"/>
<path d="M1625 574 q-3 -0 -6 -5" stroke="#2c2c2c" stroke-width="0.800" fill="none"/>
<path d="M1664 600 q2 -4 -1 -1" stroke="#2c2c2c" stroke-width="0.800" fill="none"/>
<path d="M1624 647 q-3 -3 -0 -3" stroke="#2c2c2c" stroke-width="0.800" fill="none"/>
<path d="M1680 594 q-4 -4 3 -2" stroke="#2c2c2c" stroke-width="0.800" fill="none"/>
<path d="M1645 588 q3 1 -2 -4" stroke="#2c2c2c" stroke-width="0.800" fill="none"/>
<path d="M1677 565 q-5 -3 -5 -5" stroke="#2c2c2c" stroke-width="0.800" fill="none"/>
<path d="M1627 621 q4 -2 7 -0" stroke="#2c2c2c" stroke-width="0.800" fill="none"/>
<path d="M1709 568 q-2 1 6 -4" stroke="#2c2c2c" stroke-width="0.800" fill="none"/>
<path d="M1649 637 q-4 -1 -2 2" stroke="#2c2c2c" stroke-width="0.800" fill="none"/>
<path d="M1661 584 q3 -0 -3 -3" stroke="#2c2c2c" stroke-width="0.800" fill="none"/>
<path d="M1688 598 q-0 -3 3 -5" stroke="#2c2c2c" stroke-width="0.800" fill="none"/>
<path d="M1665 629 q2 -3 -4 3" stroke="#2c2c2c" stroke-width="0.800" fill="none"/>
<path d="M1653 596 q-4 -1 6 -4" stroke="#2c2c2c" stroke-width="0.800" fill="none"/>
<path d="M1675 574 q-4 1 -4 -5" stroke="#2c2c2c" stroke-width="0.800" fill="none"/>
<path d="M1636 620 q1 -4 -4 5" stroke="#2c2c2c" stroke-width="0.800" fill="none"/>
<path d="M1642 613 q-1 2 1 3" stroke="#2c2c2c" stroke-width="0.800" fill="none"/>
<path d="M1672 581 q-3 -3 5 -4" stroke="#2c2c2c" stroke-width="0.800" fill="none"/>
<path d="M1624 647 q-3 3 -6 -0" stroke="#2c2c2c" stroke-width="0.800" fill="none"/>
<path d="M1643 636 q1 1 4 4" stroke="#2c2c2c" stroke-width="0.800" fill="none"/>
<path d="M1654 616 q-1 -3 5 1" stroke="#2c2c2c" stroke-width="0.800" fill="none"/>
<path d="M1698 583 q0 -0 3 -4" stroke="#2c2c2c" stroke-width="0.800" fill="none"/>
<path d="M1654 606 q-4 0 3 -1" stroke="#2c2c2c" stroke-width="0.800" fill="none"/>
<path d="M1682 616 q-3 -1 7 -2" stroke="#2c2c2c" stroke-width="0.800" fill="none"/>
<path d="M1662 572 q-3 -3 6 2" stroke="#2c2c2c" stroke-width="0.800" fill="none"/>
<path d="M1672 601 q4 3 6 -0" stroke="#2c2c2c" stroke-width="0.800" fill="none"/>
<polygon points="1259.4,686.2 1259.9,686.0 1262.4,692.0 1262.7,698.9 1266.5,698.2 1272.5,695.0 1277.3,697.5 1283.1,695.5 1285.8,696.2 1291.3,695.5 1293.2,703.1 1297.5,707.9 1301.0,710.9 1301.8,702.9 1304.2,701.0 1307.5,697.8 1309.6,696.0 1312.0,689.9 1317.8,693.3 1320.0,691.2 1325.5,691.2 1327.4,695.6 1331.9,691.1 1333.7,689.0 1339.2,688.3 1343.1,687.9 1346.6,686.5 1347.7,689.4 1352.0,694.5 1355.2,695.7 1359.8,694.3 1364.6,697.2 1369.5,696.6 1372.8,700.3 1378.9,704.4 1382.4,701.2 1383.1,693.2 1387.2,693.2 1390.4,695.1 1394.5,693.4 1397.3,693.5 1402.7,700.4 1402.4,702.1 1400.6,709.1 1400.0,711.3 1397.8,715.0 1396.0,717.2 1402.8,724.7 1407.7,723.9 1412.3,721.5 1419.0,718.9 1423.0,720.1 1424.5,725.4 1428.3,730.5 1425.4,731.6 1420.5,726.9 1416.2,730.6 1411.7,729.7 1408.2,734.1 1402.1,733.3 1398.7,733.1 1396.1,736.4 1391.1,732.5 1387.7,733.0 1381.7,737.2 1377.1,734.2 1374.6,738.5 1368.3,735.5 1363.8,734.2 1359.4,739.6 1354.5,735.4 1350.4,734.8 1347.0,739.0 1344.4,741.0 1340.9,739.9 1335.7,748.2 1331.6,746.7 1329.3,749.4 1326.0,750.7 1321.4,754.5 1317.4,752.7 1313.8,751.6 1311.6,747.9 1306.3,742.8 1304.0,745.1 1298.1,750.6 1295.9,747.5 1291.9,752.0 1286.0,751.0 1282.2,754.4 1278.2,747.4 1274.0,745.5 1270.8,748.3 1266.3,742.1 1265.1,745.1 1260.0,740.2" fill="#b4b4b4" />
<path d="M1298 728 q1 3 -4 -3" stroke="#555" stroke-width="0.700" fill="none"/>
<path d="M1283 704 q2 -3 0 -3" stroke="#555" stroke-width="0.700" fill="none"/>
<path d="M1303 715 q3 1 -6 -2" stroke="#555" stroke-width="0.700" fill="none"/>
<path d="M1283 738 q2 2 4 2" stroke="#555" stroke-width="0.700" fill="none"/>
<path d="M1298 737 q-0 2 1 -1" stroke="#555" stroke-width="0.700" fill="none"/>
<path d="M1312 715 q-1 -3 4 3" stroke="#555" stroke-width="0.700" fill="none"/>
<path d="M1393 729 q0 2 -4 2" stroke="#555" stroke-width="0.700" fill="none"/>
<path d="M1322 701 q-2 0 -3 -0" stroke="#555" stroke-width="0.700" fill="none"/>
<path d="M1343 713 q-3 -0 -3 -3" stroke="#555" stroke-width="0.700" fill="none"/>
<path d="M1289 711 q-3 1 5 -1" stroke="#555" stroke-width="0.700" fill="none"/>
<path d="M1348 700 q-1 3 5 3" stroke="#555" stroke-width="0.700" fill="none"/>
<path d="M1291 737 q-1 2 -4 5" stroke="#555" stroke-width="0.700" fill="none"/>
<path d="M1292 725 q1 1 -2 2" stroke="#555" stroke-width="0.700" fill="none"/>
<path d="M1309 708 q-3 1 -5 -3" stroke="#555" stroke-width="0.700" fill="none"/>
<path d="M1273 726 q0 0 -6 -1" stroke="#555" stroke-width="0.700" fill="none"/>
<path d="M1309 697 q-4 4 -5 -2" stroke="#555" stroke-width="0.700" fill="none"/>
<path d="M1299 724 q-3 -0 -2 3" stroke="#555" stroke-width="0.700" fill="none"/>
<path d="M1265 710 q-0 4 0 -0" stroke="#555" stroke-width="0.700" fill="none"/>
<path d="M1352 708 q-4 0 5 2" stroke="#555" stroke-width="0.700" fill="none"/>
<path d="M1298 728 q3 -2 1 -1" stroke="#555" stroke-width="0.700" fill="none"/>
<path d="M1296 707 q-2 -1 -6 -1" stroke="#555" stroke-width="0.700" fill="none"/>
<path d="M1275 732 q1 -4 3 -3" stroke="#555" stroke-width="0.700" fill="none"/>
<path d="M1327 721 q-1 -2 -1 -4" stroke="#555" stroke-width="0.700" fill="none"/>
<path d="M1377 698 q3 -2 -2 -1" stroke="#555" stroke-width="0.700" fill="none"/>
<path d="M1311 715 q3 4 -5 0" stroke="#555" stroke-width="0.700" fill="none"/>
<path d="M1281 735 q-1 3 1 -4" stroke="#555" stroke-width="0.700" fill="none"/>
<path d="M1265 705 q3 -3 -0 -1" stroke="#555" stroke-width="0.700" fill="none"/>
<path d="M1309 734 q-2 2 2 4" stroke="#555" stroke-width="0.700" fill="none"/>
<path d="M1322 722 q1 3 5 -4" stroke="#555" stroke-width="0.700" fill="none"/>
<path d="M1282 720 q2 0 -2 5" stroke="#555" stroke-width="0.700" fill="none"/>
<path d="M1303 697 q-4 -4 3 -4" stroke="#555" stroke-width="0.700" fill="none"/>
<path d="M1320 725 q3 2 -3 3" stroke="#555" stroke-width="0.700" fill="none"/>
<path d="M1278 708 q4 -0 -3 3" stroke="#555" stroke-width="0.700" fill="none"/>
<path d="M1323 692 q-4 -2 -2 4" stroke="#555" stroke-width="0.700" fill="none"/>
<path d="M1296 737 q3 -1 6 3" stroke="#555" stroke-width="0.700" fill="none"/>
<path d="M1327 706 q-0 3 0 -3" stroke="#555" stroke-width="0.700" fill="none"/>
<path d="M1313 717 q-2 1 -6 3" stroke="#555" stroke-width="0.700" fill="none"/>
<path d="M1341 708 q3 -0 0 3" stroke="#555" stroke-width="0.700" fill="none"/>
<path d="M1292 732 q1 -1 6 -5" stroke="#555" stroke-width="0.700" fill="none"/>
<path d="M1377 700 q3 -3 -5 0" stroke="#555" stroke-width="0.700" fill="none"/>
<path d="M1385 706 q-0 1 -3 0" stroke="#555" stroke-width="0.700" fill="none"/>
<path d="M1265 716 q2 -1 -3 -4" stroke="#555" stroke-width="0.700" fill="none"/>
<path d="M1356 715 q3 2 -5 4" stroke="#555" stroke-width="0.700" fill="none"/>
<path d="M1373 728 q2 1 1 -2" stroke="#555" stroke-width="0.700" fill="none"/>
<path d="M1281 730 q1 -4 2 1" stroke="#555" stroke-width="0.700" fill="none"/>
<path d="M1379 712 q3 -0 1 -1" stroke="#555" stroke-width="0.700" fill="none"/>
<path d="M1386 716 q4 -1 2 4" stroke="#555" stroke-width="0.700" fill="none"/>
<path d="M1354 712 q-3 -0 -1 3" stroke="#555" stroke-width="0.700" fill="none"/>
<path d="M1323 714 q1 2 -5 -3" stroke="#555" stroke-width="0.700" fill="none"/>
<path d="M1283 709 q-2 4 -4 4" stroke="#555" stroke-width="0.700" fill="none"/>
<path d="M1303 703 q4 -3 -5 -4" stroke="#555" stroke-width="0.700" fill="none"/>
<path d="M1273 712 q-2 -3 -6 2" stroke="#555" stroke-width="0.700" fill="none"/>
<path d="M1270 704 q1 3 2 2" stroke="#555" stroke-width="0.700" fill="none"/>
<path d="M1376 700 q-4 1 0 0" stroke="#555" stroke-width="0.700" fill="none"/>
<path d="M1366 701 q2 -1 -1 -3" stroke="#555" stroke-width="0.700" fill="none"/>
<path d="M1301 723 q0 3 -3 2" stroke="#555" stroke-width="0.700" fill="none"/>
<path d="M1277 727 q-3 3 6 -2" stroke="#555" stroke-width="0.700" fill="none"/>
<path d="M1370 704 q-2 -3 -1 -4" stroke="#555" stroke-width="0.700" fill="none"/>
<path d="M1356 723 q-1 2 -3 -2" stroke="#555" stroke-width="0.700" fill="none"/>
<path d="M1312 692 q3 -3 -5 3" stroke="#555" stroke-width="0.700" fill="none"/>
<path d="M1371 716 q-1 -3 -6 0" stroke="#555" stroke-width="0.700" fill="none"/>
<path d="M1296 700 q3 -4 -2 3" stroke="#555" stroke-width="0.700" fill="none"/>
<path d="M1362 698 q2 1 2 4" stroke="#555" stroke-width="0.700" fill="none"/>
<path d="M1369 724 q2 -0 1 3" stroke="#555" stroke-width="0.700" fill="none"/>
<path d="M1345 712 q-4 2 -2 -1" stroke="#555" stroke-width="0.700" fill="none"/>
<path d="M1302 721 q-1 3 1 1" stroke="#555" stroke-width="0.700" fill="none"/>
<path d="M1367 715 q0 2 3 2" stroke="#555" stroke-width="0.700" fill="none"/>
<path d="M1381 722 q0 -2 -3 -1" stroke="#555" stroke-width="0.700" fill="none"/>
<path d="M1329 740 q-4 -1 3 -0" stroke="#555" stroke-width="0.700" fill="none"/>
<path d="M1375 700 q2 -1 1 -4" stroke="#555" stroke-width="0.700" fill="none"/>
<path d="M1317 735 q2 1 -1 -5" stroke="#555" stroke-width="0.700" fill="none"/>
<path d="M1356 716 q2 1 -1 4" stroke="#555" stroke-width="0.700" fill="none"/>
<path d="M1281 743 q-3 4 1 -1" stroke="#555" stroke-width="0.700" fill="none"/>
<path d="M1387 719 q0 -4 4 1" stroke="#555" stroke-width="0.700" fill="none"/>
<path d="M1295 698 q-1 3 4 -0" stroke="#555" stroke-width="0.700" fill="none"/>
<path d="M1269 736 q-2 2 -0 5" stroke="#555" stroke-width="0.700" fill="none"/>
<path d="M1283 734 q2 -4 1 -2" stroke="#555" stroke-width="0.700" fill="none"/>
<path d="M1351 718 q1 -2 -0 -4" stroke="#555" stroke-width="0.700" fill="none"/>
<path d="M1358 695 q0 -3 1 -4" stroke="#555" stroke-width="0.700" fill="none"/>
<path d="M1268 725 q2 3 2 5" stroke="#555" stroke-width="0.700" fill="none"/>
<path d="M1283 725 q1 -3 -4 -3" stroke="#555" stroke-width="0.700" fill="none"/>
<path d="M1357 722 q-3 2 0 -3" stroke="#555" stroke-width="0.700" fill="none"/>
<path d="M1345 705 q-2 -0 3 -4" stroke="#555" stroke-width="0.700" fill="none"/>
<path d="M1322 704 q1 3 -3 2" stroke="#555" stroke-width="0.700" fill="none"/>
<path d="M1325 704 q-2 0 4 1" stroke="#555" stroke-width="0.700" fill="none"/>
<path d="M1264 733 q1 -1 -3 -1" stroke="#555" stroke-width="0.700" fill="none"/>
<path d="M1355 706 q-3 3 -1 -4" stroke="#555" stroke-width="0.700" fill="none"/>
<path d="M1312 725 q1 3 -4 1" stroke="#555" stroke-width="0.700" fill="none"/>
<path d="M1379 717 q2 -0 3 5" stroke="#555" stroke-width="0.700" fill="none"/>
<path d="M1309 731 q-1 3 3 4" stroke="#555" stroke-width="0.700" fill="none"/>
<path d="M1378 724 q4 -3 1 -4" stroke="#555" stroke-width="0.700" fill="none"/>
<path d="M1340 728 q-2 2 -1 -3" stroke="#555" stroke-width="0.700" fill="none"/>
<path d="M1289 723 q-1 -4 -2 5" stroke="#555" stroke-width="0.700" fill="none"/>
<polygon points="1328.4,743.6 1333.0,739.8 1337.9,739.1 1341.6,739.4 1347.3,735.6 1352.2,735.2 1355.0,736.0 1360.7,737.2 1365.0,735.5 1369.7,733.9 1374.2,733.1 1377.0,735.5 1382.6,734.8 1385.9,735.1 1390.7,731.9 1394.1,734.5 1398.2,730.9 1403.0,733.1 1408.2,732.4 1412.0,728.5 1416.4,728.7 1421.1,731.3 1423.5,729.8 1428.1,726.8 1433.7,729.9 1437.0,732.1 1440.9,733.3 1441.2,739.9 1439.3,744.9 1438.3,746.9 1434.5,747.9 1429.8,751.0 1426.1,750.3 1422.0,751.2 1418.1,755.7 1413.4,754.7 1409.0,755.6 1404.7,756.0 1400.5,757.4 1396.9,754.3 1392.3,756.7 1388.8,756.0 1385.4,754.5 1380.9,753.7 1377.1,752.8 1374.2,750.5 1368.8,753.0 1366.2,752.0 1362.0,748.9 1357.6,748.7 1353.8,749.5 1349.0,749.7 1344.3,749.6 1341.5,748.8 1336.6,748.2 1332.0,747.5 1328.5,748.1" fill="#844200" />
<polygon points="1260.7,742.1 1263.7,743.3 1267.6,749.6 1271.4,748.2 1275.4,749.1 1272.5,754.9 1269.1,756.0 1263.9,751.7 1260.0,750.7" fill="#844200" />
<polygon points="1286.5,746.2 1289.9,747.1 1295.1,744.9 1299.3,742.2 1303.4,743.3 1307.8,743.3 1313.3,743.5 1307.2,749.4 1301.6,752.5 1297.8,754.0 1291.6,752.9" fill="#844200" />
<polygon points="1268.0,612.0 1284.0,613.0 1284.0,646.0 1268.0,646.5" fill="#8080ff" />
<polygon points="533.8,730.5 540.0,730.2 542.7,731.7 545.7,731.6 551.9,734.3 554.0,730.9 558.4,735.5 564.9,730.5 570.3,739.1 573.1,737.4 575.3,733.8 580.9,735.3 583.8,737.9 587.3,740.5 593.1,744.4 597.6,743.6 601.7,744.6 605.7,742.4 612.0,749.0 615.6,747.7 617.8,744.8 622.0,744.6 628.2,748.2 632.8,749.1 637.5,753.8 638.0,749.7 645.9,752.5 650.5,752.6 651.1,755.2 658.3,753.0 659.8,754.2 667.6,758.4 668.5,755.0 672.7,753.9 679.8,755.3 683.1,757.9 685.9,760.6 690.0,760.3 694.2,758.9 698.9,758.2 706.3,763.1 708.0,764.3 712.0,761.0 718.9,763.6 720.3,767.0 725.1,761.8 731.7,763.0 734.2,761.6 737.7,764.0 742.6,762.5 747.5,759.6 753.8,758.9 756.3,760.9 758.7,754.2 765.9,759.0 767.5,753.5 773.7,759.0 775.8,758.6 782.8,755.3 785.2,750.8 787.9,757.2 793.0,754.6 796.5,753.1 801.4,746.3 803.2,747.3 806.3,740.8 812.5,747.1 817.0,743.7 822.4,744.4 823.1,746.2 829.0,746.5 832.2,751.0 838.0,751.1 841.4,759.1 847.2,760.3 849.3,762.7 850.3,761.3 853.1,771.3 859.1,775.4 859.8,776.4 864.9,780.8 868.3,785.2 871.3,783.8 877.9,788.8 881.9,789.4 886.2,793.3 888.1,789.6 893.9,789.3 895.7,786.8 901.1,783.2 903.8,779.9 907.3,779.9 909.3,777.7 917.0,777.2 919.9,770.9 923.9,770.0 926.8,769.7 930.0,770.0 934.5,769.8 940.9,767.8 944.5,773.0 947.0,779.4 948.3,775.1 951.2,783.4 954.1,776.7 960.3,777.9 961.8,777.1 965.6,776.7 969.5,776.1 976.2,781.3 981.5,774.1 985.3,770.5 985.7,775.6 990.7,782.0 992.4,786.4 992.9,783.8 995.8,788.2 996.3,793.7 999.3,798.8 999.5,805.9 1003.5,807.2 1001.3,808.3 1005.2,812.6 1005.3,821.1 1004.4,827.2 1003.9,826.2 1006.4,829.6 1008.6,835.6 1006.6,838.4 1012.9,843.6 1017.2,847.2 1021.0,848.0 1033.2,872.7 1027.2,866.1 1020.9,865.4 1013.5,867.3 1010.9,864.4 1004.1,865.0 1000.8,865.7 995.5,866.8 989.6,866.3 986.6,859.9 981.7,864.3 973.5,861.4 970.5,864.3 964.7,859.1 961.9,858.4 957.3,853.2 951.3,848.6 946.7,851.0 941.6,847.7 934.6,849.4 932.4,850.3 925.4,849.1 919.3,850.3 916.2,846.0 907.8,847.0 904.5,849.9 898.9,844.2 894.7,844.8 889.1,846.0 881.6,851.2 875.3,846.3 871.2,851.2 866.9,851.2 861.8,849.9 856.7,846.5 848.7,849.8 843.8,851.2 840.1,849.3 835.8,849.4 828.6,847.7 825.6,851.6 817.9,851.0 815.9,848.2 808.5,845.6 802.5,848.0 797.0,844.2 792.7,848.1 784.6,850.4 779.7,847.3 774.6,843.3 768.4,845.5 764.4,849.0 756.1,844.8 751.5,849.5 750.3,858.2 744.9,858.5 738.1,859.6 735.4,854.4 729.1,852.2 720.3,857.3 715.7,861.6 709.4,865.6 703.4,868.2 698.5,868.1 694.0,865.4 690.1,867.1 684.5,866.7 680.1,864.5 673.8,868.1 670.6,867.0 666.4,867.5 661.4,864.3 656.0,868.7 651.6,864.5 645.9,873.4 642.2,878.0 641.6,875.1 634.0,880.1 629.0,875.4 626.3,878.3 621.2,876.2 614.6,881.0 608.1,877.4 605.7,883.4 601.9,877.3 595.0,882.8 590.0,882.5 583.8,879.2 578.4,880.6 575.2,886.1 570.3,884.8 563.7,887.0 561.4,894.9 566.7,884.1 568.2,887.3 574.8,882.1 578.6,876.4 583.7,872.8 588.4,866.1 593.1,869.4 595.4,863.0 602.0,859.2 604.9,856.5 611.4,854.5 618.1,859.9 622.5,859.6 627.4,855.1 632.4,855.0 637.2,853.2 637.5,849.8 642.7,844.5 646.3,837.2 641.6,838.7 635.8,835.5 631.1,830.2 625.9,825.2 619.4,826.1 613.0,822.8 610.2,825.2 603.3,827.9 599.7,823.2 594.3,825.2 588.5,824.0 585.0,826.1 579.1,829.3 575.6,825.5 569.5,833.4 563.4,832.9 557.9,833.4 554.5,834.8 548.8,840.7 544.7,837.1 541.1,837.0 534.0,836.0" fill="#884606" />
<polygon points="557.0,896.6 559.8,891.3 562.5,891.0 564.6,888.7 568.0,883.9 571.2,881.0 575.2,876.2 579.0,875.2 581.3,873.4 584.1,869.6 587.8,868.2 590.2,866.4 593.3,861.1 596.4,858.7 599.3,859.0 605.8,863.6 603.5,863.1 601.0,869.5 596.1,872.2 593.9,873.3 591.9,875.3 588.0,880.9 585.4,881.9 582.7,885.8 578.6,885.6 575.4,889.5 571.3,890.5 568.6,893.4 565.2,898.1 562.0,900.0" fill="#884606" />
<polygon points="565.9,788.6 569.2,786.5 572.8,784.2 576.5,783.7 580.0,780.4 582.5,785.4 588.9,784.7 588.8,786.6 591.1,792.4 592.0,796.8 593.8,798.1 591.5,807.4 592.7,811.3 589.4,810.9 589.3,817.6 592.4,819.6 594.1,823.4 594.8,831.1 591.8,829.5 587.0,827.2 582.1,825.1 579.4,829.4 573.1,826.4 570.9,830.7 568.8,823.8 565.8,819.5 564.9,815.7 562.5,814.9 562.3,807.9 564.3,805.7 564.2,798.0 564.0,796.7 566.0,790.0" fill="#000" />
<polygon points="653.7,783.5 659.5,783.6 664.2,780.1 668.8,776.5 669.8,783.0 672.1,783.8 676.7,789.2 674.0,790.9 672.9,799.4 671.6,800.7 668.6,804.4 665.3,807.6 661.2,805.6 659.9,800.8 657.5,797.4 658.3,796.4 655.2,789.2 655.0,786.0" fill="#000" />
<polygon points="683.6,829.2 684.5,825.0 684.8,821.8 687.5,817.4 688.4,813.2 687.3,810.1 690.3,803.0 688.6,800.1 693.5,797.7 698.1,795.6 700.9,789.4 702.1,797.2 702.8,796.5 706.7,804.9 706.8,806.8 707.3,811.5 709.1,812.5 708.2,819.6 709.4,823.6 709.3,825.0 711.4,831.0 706.6,827.6 704.0,825.9 701.2,821.5 697.0,825.0 693.1,827.8 689.0,830.3 684.0,830.0" fill="#000" />
<polygon points="746.4,790.8 748.4,788.3 752.6,783.5 754.8,778.9 759.1,786.3 761.3,783.7 764.1,787.5 763.9,795.3 762.7,795.9 762.3,802.4 763.8,804.1 758.0,808.4 755.9,813.8 750.6,811.7 748.1,807.3 745.2,805.3 746.0,797.7 744.4,793.4 745.0,790.0" fill="#000" />
<polygon points="767.0,771.5 771.4,769.3 777.0,767.9 779.3,769.3 782.4,770.7 782.5,778.9 783.5,779.1 783.4,788.1 786.9,789.3 785.7,794.4 784.7,801.6 785.5,801.4 783.2,807.2 783.9,813.4 784.6,816.6 779.0,814.6 775.5,815.9 773.1,818.1 771.4,816.8 769.3,809.8 768.0,807.0 766.5,803.1 768.0,798.9 765.9,791.1 768.0,785.6 767.4,783.3 769.0,779.5 768.9,773.3 768.0,770.0" fill="#000" />
<polygon points="814.9,815.5 817.8,810.2 820.0,807.6 821.6,806.2 823.0,804.7 825.9,798.2 827.7,794.8 832.6,799.3 835.9,801.1 838.8,801.4 843.3,802.4 847.8,798.1 848.7,794.1 854.2,790.8 857.2,789.7 857.0,796.9 860.9,796.2 861.8,800.7 862.6,806.2 866.6,804.5 871.1,806.0 874.9,802.7 880.5,803.0 885.3,803.9 888.9,802.0 893.4,800.1 895.5,799.6 901.3,802.7 904.0,800.4 909.7,804.4 911.1,805.0 915.0,807.2 919.4,809.8 924.6,814.7 927.0,818.9 925.8,823.9 922.7,825.0 920.7,827.1 917.2,833.9 915.4,837.2 911.0,838.9 905.6,840.0 901.9,843.1 896.6,842.7 893.2,846.3 889.6,846.5 883.0,848.6 881.2,846.9 875.6,846.1 870.9,847.0 869.5,845.4 864.6,846.9 859.1,847.1 856.4,842.2 850.7,842.9 848.2,846.0 843.5,847.9 839.6,845.5 834.9,849.0 830.9,849.0 828.1,847.4 824.7,842.8 822.2,844.5 818.5,839.4 812.9,837.9 813.4,834.4 813.2,828.4 815.0,822.1 814.1,817.5 814.0,816.0" fill="#000" />
<polygon points="618.6,836.1 625.5,839.4 628.5,834.4 632.5,835.8 635.6,833.8 640.9,829.1 643.1,834.4 646.9,836.5 652.2,837.8 656.1,841.0 660.2,844.0 656.4,844.4 652.5,847.3 649.4,852.2 643.9,853.3 640.4,857.1 637.4,854.5 633.3,853.0 631.0,849.1 626.4,843.6 623.5,843.4 620.0,838.0" fill="#000" />
<polygon points="700.1,838.2 703.8,838.8 707.5,832.1 712.7,835.6 716.7,832.2 720.8,828.8 724.0,829.4 726.4,833.7 731.3,835.4 733.7,839.2 731.8,839.4 727.9,843.4 724.5,844.4 723.2,852.8 718.8,850.2 714.4,847.8 710.2,845.5 707.5,844.4 702.5,841.8 700.0,838.0" fill="#000" />
<polygon points="532.9,742.2 541.4,742.0 539.6,748.8 540.1,752.4 542.2,761.9 537.2,761.6 534.3,762.3 532.6,762.8 533.4,755.8 535.3,754.1 533.9,744.8 534.0,742.0" fill="#000" />
<path d="M835 845 L850 805" stroke="#884606" stroke-width="3"/>
<path d="M870 846 L882 812" stroke="#884606" stroke-width="3"/>
<path d="M900 845 L912 815" stroke="#884606" stroke-width="3"/>
<polygon points="864.6,780.7 866.2,774.8 866.5,772.4 866.2,768.7 867.5,769.0 866.5,764.5 867.0,762.5 867.1,756.4 871.5,755.3 874.8,755.5 877.4,750.5 880.4,751.8 883.1,748.7 885.8,750.0 890.0,750.0 892.2,750.5 896.3,753.2 898.5,755.1 902.3,757.4 903.7,758.7 907.9,762.7 906.6,766.0 906.2,770.7 906.9,772.3 907.1,773.8 907.2,778.1 904.2,782.4 901.5,782.5 900.5,784.5 897.2,787.9 894.7,791.4 894.0,790.1 889.9,792.7 886.8,793.1 884.0,789.7 881.1,791.2 877.7,791.0 875.0,790.0" fill="#aaaaaa" />
<polygon points="876.4,762.1 879.3,762.5 882.9,761.1 886.7,759.5 889.8,759.0 892.8,758.7 895.9,759.8 895.9,762.9 894.6,765.0 894.1,768.2 894.0,769.6 890.9,771.8 887.7,772.5 883.9,770.6 880.5,771.8 878.0,772.0" fill="#111" />
<polygon points="533.9,721.9 537.9,722.3 541.9,722.3 546.6,721.3 551.0,720.4 554.6,720.3 558.6,720.0 563.4,720.1 567.2,720.0 571.2,720.2 575.5,718.8 579.7,719.4 584.4,719.2 587.8,718.1 592.2,717.4 596.9,716.7 600.6,717.8 605.2,716.2 608.8,717.0 612.5,715.7 617.4,715.1 621.1,715.1 625.2,714.3 628.9,715.8 633.8,714.9 637.4,713.6 641.8,713.2 645.8,714.2 649.9,712.7 650.5,716.2 645.5,716.3 642.0,716.1 637.7,717.9 634.1,718.2 630.1,718.4 625.5,719.7 621.4,720.1 617.2,719.7 613.1,720.6 609.0,720.4 605.0,721.4 601.1,721.9 597.7,722.9 593.5,722.4 588.9,722.6 585.2,723.7 580.5,723.5 576.2,724.4 572.1,726.1 568.2,725.2 563.6,725.4 559.9,726.2 555.5,727.4 551.4,726.4 546.6,727.5 542.1,728.9 538.1,729.1 534.0,729.0" fill="#884606" />
<polygon points="1040.0,836.2 1042.8,836.0 1045.1,834.6 1049.2,833.1 1051.6,833.7 1054.6,834.5 1057.4,837.0 1060.0,840.7 1061.3,840.8 1058.6,844.4 1055.8,844.5 1053.7,845.4 1050.0,848.0" fill="#8a8af0" />
<path d="M610 845h3v2h-3zM926 849h4v3h-4zM619 831h1v1h-1zM706 826h1v1h-1zM903 811h2v3h-2zM553 869h4v3h-4zM739 847h4v3h-4zM587 866h3v1h-3zM606 856h1v1h-1zM745 824h3v2h-3zM759 792h1v2h-1zM937 804h2v1h-2zM847 839h1v1h-1zM795 822h4v1h-4zM693 789h4v2h-4zM704 817h4v2h-4zM997 827h1v1h-1zM608 847h4v1h-4zM763 822h2v3h-2zM817 820h1v1h-1zM846 828h3v2h-3zM889 847h2v1h-2zM612 864h2v2h-2zM708 832h2v2h-2zM961 801h1v2h-1zM762 809h2v1h-2zM609 772h4v3h-4zM759 840h1v2h-1zM840 770h2v1h-2zM717 843h2v1h-2zM881 828h3v1h-3zM980 826h4v1h-4zM978 845h3v1h-3zM944 830h4v2h-4zM804 840h3v1h-3zM783 800h1v2h-1zM853 847h1v2h-1zM810 826h4v2h-4zM852 837h2v1h-2zM600 817h2v1h-2zM833 837h1v1h-1zM839 784h3v2h-3zM764 795h2v1h-2zM619 817h1v3h-1zM865 844h1v1h-1zM714 842h4v3h-4zM615 847h3v3h-3zM816 833h2v2h-2zM606 848h3v3h-3zM908 826h1v3h-1zM814 815h3v3h-3zM678 832h2v1h-2zM821 800h2v2h-2zM564 840h4v1h-4zM938 832h4v3h-4zM823 760h4v2h-4zM775 810h4v1h-4zM639 773h4v1h-4zM649 832h4v3h-4zM733 839h4v2h-4zM686 798h1v1h-1zM757 819h2v2h-2zM826 834h3v1h-3zM758 819h3v3h-3zM711 822h1v1h-1zM679 805h4v3h-4zM601 833h1v3h-1zM675 846h4v1h-4zM995 812h4v1h-4zM850 812h2v2h-2zM572 754h3v1h-3zM953 827h2v3h-2zM854 835h2v2h-2zM751 815h3v3h-3zM615 817h3v1h-3zM621 867h1v2h-1zM911 847h3v1h-3zM568 833h4v3h-4zM739 818h1v3h-1zM602 867h2v2h-2zM706 766h2v1h-2zM799 844h4v3h-4zM925 809h4v2h-4zM945 808h4v1h-4zM840 777h4v3h-4zM994 836h2v1h-2zM765 821h4v2h-4zM850 832h2v2h-2zM605 805h1v1h-1zM845 794h1v3h-1zM919 815h3v1h-3zM609 836h3v3h-3zM901 822h1v1h-1zM642 806h3v2h-3zM626 795h4v1h-4zM685 797h1v3h-1zM698 822h2v1h-2zM864 826h2v2h-2zM909 846h1v1h-1zM851 831h1v2h-1zM715 847h3v1h-3zM959 803h3v3h-3zM545 809h2v1h-2zM967 827h4v1h-4zM639 832h3v2h-3zM878 845h3v1h-3zM645 825h3v3h-3zM847 842h2v1h-2zM958 848h1v3h-1zM878 840h2v3h-2zM777 844h3v1h-3zM609 843h4v2h-4zM884 836h3v1h-3zM734 813h4v2h-4zM657 821h4v1h-4zM550 855h4v2h-4zM877 839h2v2h-2zM600 761h3v3h-3zM921 821h4v1h-4zM939 826h4v3h-4zM559 809h2v2h-2zM689 809h4v3h-4zM868 797h3v1h-3zM708 801h4v1h-4zM966 805h3v1h-3zM881 816h2v1h-2zM884 847h1v3h-1zM821 826h2v1h-2zM765 833h2v1h-2zM853 811h3v1h-3zM624 787h1v2h-1zM858 819h1v3h-1zM839 766h2v3h-2zM862 825h3v2h-3zM830 827h3v1h-3zM695 836h4v3h-4zM773 795h2v1h-2zM931 845h2v3h-2zM954 839h3v2h-3zM605 756h3v2h-3zM856 810h1v2h-1zM620 789h2v1h-2zM636 785h1v3h-1zM722 837h2v3h-2zM860 827h1v1h-1zM636 836h2v1h-2zM735 839h1v2h-1zM675 805h3v2h-3zM549 823h4v3h-4zM758 772h1v2h-1zM895 838h2v2h-2zM692 830h3v2h-3zM961 812h1v2h-1zM806 813h2v3h-2zM603 807h1v2h-1zM842 814h2v1h-2zM708 842h4v3h-4zM855 830h4v1h-4zM793 807h2v1h-2zM764 803h3v2h-3zM620 863h4v3h-4zM627 766h2v1h-2zM938 812h2v3h-2zM983 808h3v3h-3zM928 799h2v3h-2zM705 790h3v3h-3zM601 844h1v1h-1zM648 849h3v3h-3zM710 848h2v3h-2zM718 829h3v2h-3zM632 868h2v1h-2zM940 844h4v1h-4zM766 832h2v1h-2zM839 813h3v1h-3zM775 773h1v1h-1zM611 780h4v1h-4zM568 805h2v3h-2zM805 826h3v2h-3zM891 848h1v2h-1zM696 833h3v2h-3zM825 800h3v2h-3zM596 811h3v1h-3zM828 838h3v1h-3zM535 804h2v2h-2zM857 824h1v1h-1zM614 835h2v1h-2zM928 830h2v3h-2zM888 805h3v2h-3zM651 794h4v2h-4zM902 844h1v1h-1zM673 797h4v1h-4zM998 811h4v2h-4zM865 847h2v1h-2zM869 824h1v2h-1zM958 795h4v1h-4zM914 845h1v3h-1zM891 849h2v3h-2zM830 826h1v2h-1zM575 816h4v2h-4zM761 800h3v3h-3zM889 814h1v1h-1zM608 819h3v3h-3zM655 807h1v2h-1zM782 772h1v3h-1zM628 802h3v2h-3zM669 840h4v2h-4zM893 837h3v2h-3zM821 833h4v1h-4zM828 845h3v1h-3zM846 848h2v1h-2zM973 805h4v2h-4zM812 794h3v1h-3zM937 831h1v2h-1zM796 772h2v3h-2zM539 850h2v3h-2zM734 816h4v2h-4zM821 785h2v1h-2zM865 848h4v1h-4zM949 834h3v3h-3zM827 841h4v2h-4zM807 843h1v3h-1zM702 811h3v3h-3zM733 782h2v1h-2zM936 792h2v1h-2zM893 810h1v1h-1zM979 843h4v3h-4zM814 782h4v2h-4zM916 822h1v1h-1zM602 865h4v3h-4zM825 784h4v2h-4zM589 843h2v1h-2zM586 809h1v2h-1zM907 817h4v3h-4zM756 781h4v1h-4zM884 849h3v1h-3zM700 820h3v1h-3zM746 814h4v2h-4zM888 845h1v2h-1zM647 844h3v1h-3zM754 801h4v1h-4zM897 847h4v2h-4zM950 845h2v2h-2zM702 838h3v3h-3zM741 848h1v2h-1zM566 774h4v3h-4zM752 838h4v2h-4zM715 822h1v1h-1zM616 850h1v1h-1zM707 813h4v2h-4zM583 828h2v1h-2zM908 820h4v1h-4zM727 801h3v1h-3zM542 838h2v1h-2zM689 812h2v3h-2zM585 816h1v3h-1zM960 844h1v3h-1zM886 844h4v2h-4zM731 782h4v3h-4zM838 767h2v1h-2zM985 827h4v2h-4zM974 824h1v3h-1zM931 840h1v2h-1zM880 819h1v1h-1zM980 845h1v2h-1zM772 789h2v1h-2zM989 812h1v3h-1zM695 818h3v1h-3zM760 828h3v1h-3zM782 805h1v1h-1zM905 837h4v3h-4zM610 831h4v2h-4zM971 794h2v2h-2zM920 797h2v2h-2zM963 832h2v1h-2zM972 843h3v1h-3zM937 795h3v2h-3zM729 847h3v2h-3zM713 798h2v2h-2zM940 782h3v1h-3zM780 828h4v1h-4zM835 802h2v3h-2zM538 834h1v2h-1zM607 844h4v3h-4zM606 867h4v2h-4zM853 802h1v2h-1zM758 847h4v2h-4zM657 846h3v1h-3zM656 802h2v1h-2zM687 817h3v2h-3zM615 847h4v2h-4zM857 823h2v3h-2zM912 837h4v3h-4zM571 784h3v1h-3zM910 839h3v3h-3zM956 844h4v2h-4zM571 812h2v3h-2zM560 804h3v3h-3zM784 804h1v1h-1zM840 758h3v2h-3zM587 851h2v3h-2zM869 797h2v1h-2zM857 846h1v3h-1zM851 794h2v1h-2zM740 825h4v2h-4zM819 779h4v3h-4zM626 853h1v1h-1zM797 827h3v1h-3zM897 818h1v2h-1zM616 814h4v1h-4zM868 813h4v2h-4zM676 829h4v1h-4zM990 803h4v3h-4zM855 842h3v3h-3zM868 829h4v3h-4zM827 844h1v2h-1zM639 806h4v1h-4zM931 814h2v2h-2zM791 812h2v2h-2zM696 816h1v1h-1zM697 795h2v1h-2zM747 829h4v3h-4zM589 821h2v1h-2zM550 852h1v2h-1zM571 852h3v1h-3zM634 801h4v2h-4zM617 806h3v1h-3zM736 837h4v3h-4zM727 831h3v3h-3zM659 810h4v3h-4zM738 794h2v1h-2zM978 822h3v3h-3zM746 845h3v3h-3zM589 792h1v1h-1zM642 827h3v1h-3zM958 839h3v3h-3zM772 819h1v1h-1zM673 847h4v1h-4zM699 828h4v1h-4zM737 849h2v3h-2zM777 816h2v2h-2zM906 813h2v1h-2zM599 867h3v3h-3zM619 818h4v1h-4zM883 808h2v2h-2zM799 774h1v2h-1zM609 824h4v1h-4zM589 762h1v2h-1zM828 819h2v1h-2zM841 848h3v3h-3zM659 805h2v3h-2zM648 844h3v2h-3zM844 834h1v2h-1zM546 849h4v2h-4zM707 827h3v1h-3zM989 816h4v2h-4zM862 820h1v1h-1zM644 761h1v1h-1zM759 833h3v2h-3zM910 820h4v3h-4zM961 801h1v3h-1zM627 865h1v3h-1zM650 806h2v3h-2zM573 846h4v1h-4zM879 824h2v2h-2zM772 813h2v1h-2zM788 814h2v1h-2zM786 849h1v1h-1zM986 848h4v1h-4zM571 825h4v1h-4zM661 790h1v1h-1zM814 780h1v3h-1zM776 802h4v1h-4zM645 774h4v2h-4zM762 833h4v2h-4zM794 830h3v3h-3zM920 808h4v2h-4zM828 821h4v1h-4zM949 839h2v3h-2zM690 782h3v2h-3zM607 806h1v1h-1zM961 846h2v3h-2zM669 816h1v1h-1zM574 855h1v3h-1zM950 807h4v2h-4zM816 838h4v1h-4zM748 838h3v3h-3zM675 842h4v1h-4zM694 808h1v1h-1zM921 785h2v1h-2zM545 819h3v1h-3zM588 861h3v1h-3zM615 846h2v3h-2zM563 814h3v1h-3zM880 828h1v3h-1zM744 777h1v2h-1zM568 761h2v1h-2zM860 849h2v1h-2zM923 830h2v2h-2zM784 849h3v1h-3zM936 786h1v1h-1zM982 811h2v2h-2zM891 834h1v2h-1zM618 831h2v2h-2zM769 816h1v1h-1zM848 847h4v3h-4zM991 848h1v1h-1zM661 833h3v1h-3zM878 835h3v2h-3zM981 847h1v1h-1zM596 866h2v1h-2zM980 814h1v1h-1zM830 838h1v3h-1zM605 862h1v2h-1zM812 801h1v2h-1zM739 822h3v1h-3zM625 836h2v3h-2zM920 794h2v1h-2zM686 849h2v2h-2zM964 816h2v2h-2zM742 812h2v3h-2zM723 841h3v3h-3zM978 817h4v3h-4zM730 818h2v1h-2zM784 839h2v1h-2zM680 778h4v2h-4zM837 794h2v1h-2zM738 834h1v3h-1zM800 825h1v1h-1zM938 820h2v3h-2zM631 858h2v2h-2zM718 843h2v3h-2zM826 833h4v2h-4zM661 826h3v3h-3zM938 838h2v3h-2zM741 845h1v3h-1zM980 841h3v1h-3zM740 825h1v3h-1zM951 792h2v3h-2zM934 835h2v2h-2zM748 841h3v1h-3zM960 827h3v1h-3zM734 823h1v1h-1zM841 840h3v2h-3zM908 825h1v3h-1zM612 768h4v3h-4zM786 813h3v2h-3zM657 832h2v1h-2zM616 777h4v3h-4zM924 820h4v3h-4zM767 773h2v1h-2zM663 806h3v2h-3zM954 817h4v3h-4zM861 799h3v1h-3zM784 827h4v3h-4zM863 804h3v3h-3zM915 813h1v2h-1zM684 831h1v2h-1zM981 813h4v3h-4zM709 790h3v2h-3zM588 789h2v1h-2zM676 768h4v3h-4zM897 834h1v2h-1zM979 847h3v1h-3zM968 826h1v1h-1zM770 791h3v3h-3zM722 843h2v1h-2zM865 801h2v3h-2zM630 823h4v1h-4zM962 826h3v1h-3zM768 798h2v3h-2zM930 806h3v2h-3zM842 849h1v2h-1zM819 837h4v3h-4zM726 790h4v2h-4zM704 808h2v1h-2zM753 811h1v2h-1zM986 835h1v2h-1zM851 798h4v3h-4zM954 800h1v2h-1zM806 817h3v1h-3zM975 817h3v2h-3zM861 845h1v2h-1zM661 777h3v1h-3zM632 834h1v3h-1zM993 798h2v1h-2zM716 836h3v2h-3zM918 802h4v2h-4zM952 835h3v2h-3zM949 801h3v2h-3zM924 834h2v3h-2zM583 859h4v2h-4zM557 818h2v1h-2zM691 838h4v3h-4zM898 846h1v2h-1zM725 808h4v3h-4zM734 792h1v3h-1zM583 862h2v1h-2zM976 825h1v1h-1zM642 831h2v2h-2zM607 811h2v2h-2zM661 825h1v2h-1zM873 826h2v3h-2zM743 788h1v3h-1zM601 825h1v1h-1zM856 801h1v2h-1zM869 825h4v1h-4zM834 786h3v1h-3zM572 838h1v3h-1zM977 822h2v2h-2zM619 826h1v3h-1zM759 839h3v1h-3zM652 839h1v1h-1zM960 824h1v1h-1zM857 818h4v1h-4zM922 837h3v1h-3zM897 833h3v2h-3zM816 839h4v3h-4zM764 836h1v1h-1zM807 816h2v1h-2zM653 799h4v3h-4zM757 837h2v1h-2zM791 823h2v1h-2zM713 823h1v1h-1zM592 828h2v2h-2zM813 787h4v1h-4zM927 804h1v3h-1zM886 840h4v3h-4zM556 837h2v2h-2zM932 791h3v1h-3zM912 844h2v2h-2zM696 800h3v1h-3zM833 814h4v1h-4zM890 822h1v2h-1zM715 848h4v1h-4zM827 839h2v1h-2zM893 828h3v1h-3zM964 803h4v2h-4zM833 791h2v2h-2zM875 825h1v3h-1zM699 797h3v3h-3zM921 789h1v2h-1zM983 838h2v2h-2zM691 788h4v1h-4zM908 847h3v2h-3zM654 849h3v2h-3zM722 824h2v2h-2zM549 860h3v1h-3zM889 847h1v2h-1zM941 833h4v3h-4zM984 845h3v3h-3zM686 806h3v1h-3zM596 847h4v2h-4zM781 840h3v2h-3zM599 824h2v1h-2zM846 826h2v3h-2zM983 813h4v3h-4zM885 830h3v3h-3zM766 819h1v1h-1zM768 845h1v3h-1zM912 807h3v2h-3zM785 826h1v2h-1zM845 819h2v3h-2zM911 815h4v1h-4zM564 828h2v1h-2zM948 829h2v3h-2zM906 828h4v3h-4zM556 802h3v1h-3zM593 790h3v1h-3zM842 841h3v3h-3zM660 843h1v1h-1zM599 839h2v1h-2zM895 842h2v3h-2zM568 852h4v1h-4zM595 799h2v2h-2zM977 794h3v2h-3zM857 809h1v2h-1zM693 811h1v3h-1zM768 828h1v1h-1zM675 761h1v2h-1zM636 865h1v3h-1zM744 815h3v1h-3zM873 828h4v3h-4zM942 844h3v1h-3zM738 845h1v3h-1zM732 846h2v1h-2zM925 820h3v2h-3zM964 780h3v1h-3zM786 819h2v2h-2zM626 859h1v1h-1zM570 785h4v1h-4zM676 795h4v2h-4zM617 820h3v2h-3zM563 796h3v3h-3zM953 835h1v1h-1zM951 837h4v3h-4zM781 785h1v2h-1zM859 835h1v3h-1zM599 758h2v2h-2zM542 850h1v2h-1zM816 761h1v3h-1zM788 840h4v2h-4zM931 781h1v1h-1zM575 806h2v1h-2zM641 777h3v1h-3zM766 820h3v3h-3zM779 837h3v3h-3zM539 842h4v3h-4zM751 792h1v1h-1zM858 827h4v1h-4zM663 793h4v2h-4zM659 789h2v1h-2zM843 769h2v2h-2zM595 843h4v3h-4zM884 805h4v2h-4zM543 837h2v1h-2zM952 832h3v2h-3zM565 859h1v1h-1zM920 830h4v3h-4zM737 824h4v2h-4zM908 820h4v1h-4zM930 824h4v2h-4zM653 827h3v2h-3zM890 819h1v3h-1zM984 815h2v2h-2zM937 828h3v3h-3zM753 796h2v3h-2zM710 836h2v3h-2zM574 844h4v3h-4zM765 825h2v3h-2zM867 808h1v1h-1zM571 809h4v1h-4zM555 852h2v2h-2zM589 842h1v1h-1zM721 775h3v1h-3zM591 822h2v2h-2zM876 822h1v1h-1zM791 815h2v1h-2zM713 834h4v3h-4zM996 817h2v2h-2zM940 838h3v2h-3zM547 765h2v2h-2zM790 797h3v1h-3zM950 824h4v2h-4zM627 759h4v3h-4zM726 829h4v3h-4zM828 825h3v2h-3zM626 812h1v2h-1zM822 835h3v2h-3zM931 815h3v3h-3zM572 837h1v1h-1zM785 837h2v1h-2zM550 800h3v2h-3zM769 842h4v1h-4zM648 830h2v1h-2zM630 820h4v2h-4zM568 833h4v3h-4zM765 826h1v3h-1zM539 819h2v2h-2zM901 824h2v2h-2zM637 859h1v3h-1zM622 817h2v2h-2zM621 757h4v3h-4zM794 824h1v2h-1zM867 848h4v2h-4zM682 816h2v1h-2zM805 802h4v3h-4zM735 816h4v2h-4zM892 805h4v2h-4zM732 848h3v1h-3zM682 849h1v3h-1zM917 779h3v3h-3zM616 828h2v2h-2zM725 846h2v3h-2zM856 822h3v2h-3zM640 824h1v3h-1zM872 826h4v3h-4zM832 818h3v3h-3zM935 824h1v2h-1zM733 795h1v1h-1zM634 797h4v1h-4zM966 831h4v1h-4zM834 778h2v1h-2zM853 833h1v2h-1zM799 814h1v2h-1zM601 805h1v2h-1zM683 794h1v3h-1zM967 803h3v2h-3zM659 837h4v1h-4zM799 802h4v1h-4zM602 781h4v1h-4zM727 849h2v1h-2zM605 844h3v2h-3zM823 794h2v1h-2zM808 809h2v3h-2zM857 827h1v1h-1zM765 789h4v2h-4zM887 826h2v3h-2zM652 816h4v1h-4zM875 792h3v1h-3zM758 806h4v2h-4zM802 825h1v3h-1zM578 857h4v1h-4zM548 841h1v3h-1zM795 819h3v1h-3zM929 772h1v1h-1zM872 821h1v1h-1zM751 782h3v3h-3zM635 856h3v2h-3zM812 767h3v1h-3zM863 790h1v3h-1zM892 843h3v2h-3zM701 801h1v1h-1zM573 762h2v2h-2zM846 826h3v3h-3zM752 839h4v3h-4zM870 848h3v3h-3zM925 846h2v1h-2zM601 848h2v1h-2zM625 809h1v3h-1zM819 834h2v3h-2zM740 799h4v3h-4zM841 843h3v3h-3zM888 823h2v2h-2zM991 821h2v3h-2zM760 830h1v3h-1zM707 839h2v1h-2zM539 788h4v1h-4zM665 820h3v2h-3zM717 836h3v2h-3zM865 799h3v1h-3zM627 859h1v2h-1zM682 798h2v2h-2zM841 829h4v2h-4zM614 842h2v3h-2zM612 763h4v2h-4zM905 846h4v2h-4zM563 853h3v1h-3zM912 843h3v2h-3zM541 778h1v2h-1zM860 808h3v1h-3zM965 828h2v3h-2zM543 821h1v2h-1zM885 843h1v3h-1zM954 849h2v1h-2zM856 784h4v1h-4zM557 858h4v3h-4zM887 845h1v1h-1zM551 788h1v2h-1zM712 789h3v1h-3zM931 834h3v1h-3zM589 773h3v3h-3zM564 778h3v2h-3zM921 787h2v2h-2zM557 827h1v3h-1zM704 839h4v2h-4zM777 801h3v3h-3zM890 807h3v3h-3zM552 810h2v3h-2zM724 835h4v1h-4zM599 848h4v1h-4zM832 817h1v3h-1zM763 822h1v3h-1zM599 852h3v1h-3zM592 843h1v3h-1zM653 832h1v3h-1zM962 791h3v1h-3zM718 796h1v3h-1zM705 829h3v3h-3zM957 835h3v1h-3zM583 781h3v2h-3zM729 833h1v1h-1zM633 850h4v2h-4zM944 819h3v2h-3zM765 775h2v2h-2zM956 845h4v1h-4zM789 840h1v3h-1zM657 799h3v2h-3zM991 825h4v3h-4zM805 832h3v2h-3zM621 800h2v2h-2zM947 829h4v2h-4zM947 827h1v1h-1zM736 842h1v2h-1zM694 811h1v3h-1zM729 824h3v3h-3zM753 816h1v2h-1zM630 784h3v1h-3zM546 831h1v1h-1zM940 792h4v3h-4zM786 830h4v1h-4zM632 852h2v1h-2zM906 846h3v2h-3zM814 825h1v3h-1zM954 792h1v1h-1zM841 791h3v2h-3zM702 835h1v1h-1zM681 822h4v1h-4zM911 842h2v2h-2zM601 853h2v3h-2zM763 813h2v3h-2zM567 851h2v1h-2zM795 798h1v3h-1zM983 832h3v1h-3zM614 788h1v2h-1zM929 789h4v1h-4zM571 763h1v2h-1zM981 845h4v1h-4zM991 816h1v1h-1zM644 787h3v1h-3zM989 830h2v1h-2zM928 846h1v2h-1zM822 835h4v2h-4zM996 836h3v2h-3zM658 824h3v2h-3zM773 805h3v3h-3zM699 802h1v3h-1zM656 811h3v1h-3zM940 818h4v2h-4zM752 812h2v2h-2zM951 838h1v3h-1zM680 782h3v1h-3zM907 842h4v1h-4zM801 821h3v1h-3zM614 865h2v3h-2zM897 827h1v1h-1zM901 831h1v2h-1zM999 846h1v1h-1zM739 793h4v1h-4zM835 808h4v1h-4zM720 822h2v3h-2zM770 828h1v2h-1zM956 811h3v3h-3zM691 791h1v1h-1zM976 817h3v2h-3zM648 839h3v3h-3zM894 848h3v1h-3zM618 794h4v2h-4zM900 849h4v3h-4zM997 837h4v2h-4zM906 820h3v2h-3zM593 827h3v3h-3zM933 839h4v2h-4zM831 824h2v1h-2zM747 838h4v2h-4zM724 835h1v2h-1zM994 840h1v3h-1zM672 801h4v1h-4zM810 822h1v3h-1zM573 814h1v3h-1zM540 868h1v1h-1zM598 855h1v2h-1zM545 785h1v1h-1zM636 820h4v3h-4zM936 822h2v3h-2zM563 842h4v2h-4zM974 805h2v2h-2zM853 817h3v1h-3zM685 833h3v1h-3zM595 863h3v3h-3zM982 844h2v2h-2zM728 821h2v1h-2zM538 815h2v2h-2zM993 835h3v3h-3zM900 826h2v2h-2zM649 822h3v1h-3zM971 796h4v3h-4zM960 824h4v1h-4zM581 816h3v2h-3zM867 842h1v3h-1zM775 820h4v2h-4zM743 848h4v2h-4zM693 771h3v1h-3zM900 842h3v3h-3zM967 822h4v1h-4zM905 824h3v2h-3zM981 827h1v1h-1zM957 838h3v3h-3zM750 829h2v1h-2zM654 764h1v2h-1zM536 763h2v2h-2zM937 792h4v3h-4zM814 841h4v3h-4zM735 813h3v3h-3zM560 857h4v2h-4zM637 865h2v2h-2zM631 772h4v1h-4zM589 792h1v2h-1zM657 792h2v3h-2zM559 808h1v2h-1zM606 857h4v2h-4zM884 840h1v3h-1zM535 835h2v1h-2zM838 849h4v2h-4zM571 866h1v3h-1zM786 808h1v3h-1zM784 785h3v1h-3zM543 844h3v1h-3zM555 798h4v3h-4zM618 850h4v2h-4z" fill="#000" shape-rendering="crispEdges"/>
<path d="M651 782h5v5h-5zM573 818h4v6h-4zM871 849h3v3h-3zM652 834h5v6h-5zM875 845h7v5h-7zM896 811h3v5h-3zM921 835h5v5h-5zM947 839h5v6h-5zM917 820h4v6h-4zM575 786h3v3h-3zM663 785h3v6h-3zM685 848h6v4h-6zM863 827h7v4h-7zM952 845h6v5h-6zM651 842h4v5h-4zM959 807h6v5h-6zM871 825h3v3h-3zM803 774h7v5h-7zM826 830h4v4h-4zM560 849h7v3h-7zM634 779h5v6h-5zM729 813h4v3h-4zM750 839h4v5h-4zM620 831h3v4h-3zM601 770h7v5h-7zM828 791h5v4h-5zM693 848h4v4h-4zM823 834h4v3h-4zM584 814h3v4h-3zM835 810h5v6h-5zM950 846h3v3h-3zM906 837h4v4h-4zM917 846h4v3h-4zM548 764h6v3h-6zM782 835h4v4h-4zM537 793h5v3h-5zM694 845h4v6h-4zM830 786h5v6h-5zM664 841h7v5h-7zM832 824h4v6h-4zM570 828h3v6h-3zM664 798h6v6h-6zM546 773h3v3h-3zM783 827h6v4h-6zM538 806h6v3h-6zM955 830h7v3h-7zM804 804h5v6h-5zM816 796h5v4h-5zM786 784h6v6h-6zM702 840h4v5h-4zM765 832h5v6h-5zM948 819h4v4h-4zM752 846h7v3h-7zM740 818h7v5h-7zM576 834h4v3h-4zM848 803h7v6h-7zM568 832h3v5h-3zM580 772h7v5h-7zM642 825h7v6h-7zM885 816h6v6h-6zM858 842h5v6h-5zM545 832h3v5h-3zM945 849h6v6h-6zM858 819h4v6h-4zM897 821h6v4h-6zM920 806h7v5h-7zM550 778h4v3h-4zM945 848h4v6h-4zM698 803h4v4h-4zM628 833h6v6h-6zM799 818h4v5h-4zM536 799h5v4h-5zM849 804h3v4h-3zM543 761h3v5h-3zM902 833h6v5h-6zM950 809h5v3h-5zM833 777h4v5h-4zM568 843h7v5h-7zM890 822h6v3h-6zM676 824h5v6h-5zM655 790h7v5h-7zM684 809h6v5h-6zM553 835h6v5h-6zM914 845h3v4h-3zM570 799h7v5h-7zM681 845h3v4h-3zM865 828h6v6h-6zM948 819h3v3h-3zM767 845h3v3h-3zM636 834h3v5h-3zM835 835h4v3h-4zM926 818h7v3h-7zM779 848h4v6h-4zM540 779h3v3h-3zM799 778h5v3h-5zM586 813h4v6h-4zM914 843h7v4h-7zM894 814h5v6h-5zM637 778h7v5h-7zM742 789h5v3h-5zM691 795h3v4h-3zM791 829h5v6h-5zM678 814h6v4h-6zM576 837h6v5h-6zM631 781h5v5h-5zM653 790h3v3h-3zM587 773h4v6h-4zM811 770h4v6h-4zM575 777h6v6h-6zM740 801h4v4h-4zM595 837h6v4h-6zM946 805h3v4h-3zM711 812h3v4h-3zM575 770h7v6h-7zM671 792h7v4h-7zM854 812h4v4h-4zM931 850h4v5h-4zM690 798h7v5h-7zM660 815h4v5h-4zM840 799h4v3h-4zM883 826h5v5h-5zM786 839h6v3h-6zM740 795h7v5h-7zM933 793h7v5h-7zM691 805h6v4h-6zM689 837h6v6h-6zM735 804h5v3h-5zM893 845h4v6h-4zM629 839h4v5h-4zM821 822h3v6h-3zM735 795h3v6h-3zM682 833h6v6h-6zM715 851h6v5h-6zM798 828h7v3h-7zM718 825h7v6h-7zM703 844h5v5h-5zM639 817h5v4h-5zM876 841h6v4h-6zM912 814h4v6h-4zM959 819h5v6h-5zM625 815h5v4h-5zM552 760h3v4h-3zM560 851h6v6h-6zM548 825h3v4h-3zM936 813h3v5h-3zM756 841h7v3h-7zM765 818h7v4h-7zM705 826h6v5h-6zM616 796h3v5h-3zM855 793h3v3h-3zM587 839h4v6h-4zM592 789h6v6h-6zM584 795h3v6h-3zM754 834h4v5h-4zM859 827h5v4h-5zM559 773h4v4h-4zM905 848h3v4h-3zM548 830h6v6h-6zM798 779h7v6h-7zM904 817h4v5h-4zM862 811h4v6h-4zM874 821h3v3h-3zM880 844h4v6h-4zM911 825h5v3h-5zM877 815h3v4h-3zM897 846h3v4h-3zM840 785h5v6h-5zM714 798h6v5h-6zM929 818h7v3h-7zM677 846h5v5h-5zM652 828h6v6h-6zM922 797h5v5h-5zM599 782h7v5h-7zM870 836h5v6h-5zM921 828h4v3h-4zM794 807h4v5h-4zM900 834h4v3h-4zM734 841h4v5h-4zM741 828h3v3h-3zM917 842h5v4h-5zM576 843h3v3h-3zM959 835h6v6h-6zM927 843h7v3h-7zM774 807h3v3h-3zM922 845h6v3h-6zM893 845h7v4h-7zM941 813h5v6h-5zM741 812h7v4h-7zM542 787h4v5h-4zM546 770h7v6h-7zM891 815h3v5h-3zM639 813h4v5h-4zM946 808h5v5h-5zM910 813h7v6h-7zM834 782h6v5h-6zM911 831h6v6h-6zM887 851h3v4h-3zM850 838h3v6h-3zM609 842h5v5h-5zM801 833h5v5h-5zM607 806h6v5h-6zM882 829h7v4h-7zM656 824h3v3h-3zM621 847h5v3h-5zM607 842h6v4h-6zM910 824h3v6h-3zM591 795h5v3h-5zM592 794h6v5h-6zM794 840h3v5h-3zM819 832h4v3h-4zM623 790h3v3h-3zM924 833h7v3h-7zM900 835h3v6h-3zM587 824h5v6h-5zM872 846h6v6h-6zM672 809h7v6h-7zM553 846h6v3h-6zM904 847h4v6h-4zM587 767h6v5h-6zM897 850h6v4h-6zM828 806h5v4h-5zM760 848h5v4h-5zM941 835h5v4h-5zM784 847h3v4h-3zM729 844h7v4h-7zM702 843h5v3h-5zM852 838h3v3h-3zM577 764h3v3h-3zM901 837h3v6h-3zM612 806h6v5h-6zM554 830h5v3h-5zM602 770h5v6h-5zM835 823h4v6h-4zM956 833h7v3h-7zM812 792h7v5h-7zM833 844h6v5h-6zM943 800h5v6h-5zM564 821h3v6h-3zM869 834h5v6h-5zM696 816h7v6h-7zM774 804h6v5h-6zM873 848h3v5h-3zM564 823h5v6h-5zM722 792h5v5h-5zM922 799h4v6h-4zM813 778h6v3h-6zM686 825h3v6h-3zM824 792h3v6h-3zM735 810h4v5h-4zM843 784h3v3h-3zM710 793h6v3h-6zM886 830h7v3h-7zM677 830h5v6h-5zM577 793h5v5h-5zM578 816h7v4h-7zM931 794h7v3h-7zM662 782h3v3h-3zM621 813h5v5h-5zM578 834h5v3h-5zM891 837h4v6h-4z" fill="#000" shape-rendering="crispEdges"/>
<path d="M818 804h1v1h-1zM891 840h1v1h-1zM816 788h3v1h-3zM583 848h2v1h-2zM817 821h2v1h-2zM833 793h2v1h-2zM629 775h1v1h-1zM956 847h2v2h-2zM623 791h3v1h-3zM748 827h1v1h-1zM614 836h3v2h-3zM738 845h2v1h-2zM646 808h1v2h-1zM554 765h3v2h-3zM592 804h2v1h-2zM823 783h1v2h-1zM917 800h2v1h-2zM903 851h2v1h-2zM745 786h2v1h-2zM859 821h3v2h-3zM770 817h1v1h-1zM837 831h2v2h-2zM777 790h3v1h-3zM881 848h3v2h-3zM618 793h2v2h-2zM706 786h1v1h-1zM713 791h2v2h-2zM700 823h3v2h-3zM732 793h3v1h-3zM553 801h2v1h-2zM594 767h2v2h-2zM588 783h3v1h-3zM597 774h3v1h-3zM621 839h2v2h-2zM752 799h2v1h-2zM699 825h2v2h-2zM787 792h1v1h-1zM695 789h2v1h-2zM746 825h2v2h-2zM939 799h1v2h-1zM897 826h2v1h-2zM897 824h2v2h-2zM898 829h2v2h-2zM664 783h1v1h-1zM725 850h2v2h-2zM846 832h1v2h-1zM631 828h3v1h-3zM890 819h1v1h-1zM705 815h1v2h-1zM674 811h1v1h-1zM575 787h3v2h-3zM764 834h1v1h-1zM598 805h3v1h-3zM799 775h1v2h-1zM849 849h3v1h-3zM709 793h3v2h-3zM572 807h3v1h-3zM761 817h2v1h-2zM754 821h3v1h-3zM692 825h1v2h-1zM762 792h2v2h-2zM695 791h3v2h-3zM938 817h2v1h-2zM597 841h1v2h-1zM540 796h2v2h-2zM669 802h1v1h-1zM592 812h1v2h-1zM581 827h3v1h-3zM721 825h3v1h-3zM791 810h1v1h-1zM882 845h2v1h-2zM784 804h1v1h-1zM603 795h1v2h-1zM911 830h1v1h-1zM821 798h3v2h-3zM948 830h1v2h-1zM932 806h2v1h-2zM710 840h1v1h-1zM752 823h3v1h-3zM563 821h2v1h-2zM811 833h3v1h-3zM853 836h2v1h-2zM620 834h1v1h-1zM564 759h3v2h-3zM935 819h1v1h-1zM868 845h3v1h-3zM630 823h2v1h-2zM642 780h3v2h-3zM813 790h1v2h-1zM549 841h3v2h-3zM654 846h1v2h-1zM703 835h3v2h-3zM537 813h3v2h-3zM661 822h3v1h-3zM734 828h3v2h-3zM828 807h1v1h-1zM637 777h2v2h-2zM916 842h2v1h-2zM794 846h3v1h-3zM584 776h3v2h-3zM591 793h2v1h-2zM689 784h2v2h-2zM848 841h2v2h-2zM563 779h3v2h-3zM553 847h3v2h-3zM713 831h3v1h-3zM886 834h1v2h-1zM721 828h1v2h-1zM906 828h2v1h-2zM756 848h3v2h-3zM732 803h2v2h-2zM866 843h2v2h-2zM663 788h3v2h-3zM719 838h1v1h-1zM713 789h2v1h-2zM745 787h3v1h-3zM937 846h3v1h-3zM596 827h2v2h-2zM556 784h1v2h-1zM734 821h2v1h-2zM737 801h2v1h-2zM662 800h3v1h-3zM742 817h2v1h-2zM712 844h3v2h-3zM732 798h3v2h-3zM867 812h3v2h-3zM685 820h1v1h-1zM669 816h1v1h-1zM767 791h1v1h-1zM886 827h1v2h-1zM725 811h2v1h-2zM865 844h3v1h-3zM881 813h2v2h-2zM818 844h3v2h-3zM885 829h3v2h-3zM667 810h2v1h-2zM865 841h3v1h-3zM753 795h1v1h-1zM669 811h1v2h-1zM731 849h1v1h-1zM613 817h3v1h-3zM901 846h3v1h-3zM627 843h1v2h-1zM748 801h3v1h-3zM550 825h3v2h-3zM684 846h3v2h-3zM712 792h2v2h-2zM658 784h1v2h-1zM901 835h1v1h-1zM843 831h2v1h-2zM854 843h2v2h-2zM702 826h3v2h-3zM606 781h2v2h-2zM585 833h2v1h-2zM603 803h1v1h-1zM901 836h3v1h-3zM893 822h1v1h-1zM591 769h2v2h-2zM646 836h2v2h-2zM907 849h1v1h-1zM675 813h3v1h-3zM779 813h1v1h-1zM688 837h3v2h-3zM616 805h2v2h-2zM574 792h1v1h-1zM588 803h1v1h-1zM587 793h2v1h-2zM824 835h2v2h-2zM638 788h2v1h-2zM882 836h1v1h-1zM929 815h1v2h-1zM603 776h2v2h-2zM890 848h3v2h-3zM605 816h3v1h-3zM800 776h2v2h-2zM908 833h2v1h-2zM686 817h1v2h-1zM549 841h2v2h-2zM611 791h2v1h-2zM655 820h2v1h-2zM825 786h3v1h-3zM858 826h2v1h-2zM927 812h1v1h-1zM677 846h3v2h-3zM709 807h3v1h-3zM597 837h2v2h-2zM923 810h1v2h-1zM676 845h3v1h-3zM568 804h3v1h-3zM918 823h3v1h-3zM618 842h1v1h-1zM761 842h1v1h-1zM688 789h1v1h-1zM889 820h2v1h-2zM661 786h2v2h-2zM929 810h3v2h-3zM908 814h1v1h-1zM541 810h1v1h-1zM569 841h1v2h-1zM832 847h2v1h-2z" fill="#884606" shape-rendering="crispEdges"/>
<rect x="1713" y="351" width="7" height="205" fill="#00ffff"/>
<path d="M1716.500 353 Q1712 349.500 1696 349.500 Q1682 349.500 1670 354" fill="none" stroke="#00ffff" stroke-width="3"/>
<polygon points="1666.5,347.0 1660.0,361.0 1667.0,365.0 1674.5,361.0" fill="#00ffff" />
<path d="M1702 432.500 h12 M1702 489 h12" stroke="#a0a0a0" stroke-width="2"/>
<path d="M1290 450 Q1294 436 1312 432" fill="none" stroke="#00ffff" stroke-width="2.600"/>
<ellipse cx="1314.500" cy="433" rx="3.500" ry="5" fill="#00ffff"/>
<path d="M646 474h1M862 474h2M537 395h2M654 520h1M606 332h1M535 324h1M819 481h1M770 345h2M623 456h1M859 460h2M791 347h1M575 435h1M664 358h1M730 399h1M609 464h1M693 504h1M712 367h1M696 528h2M582 363h1M692 490h1M538 533h1M581 437h2M581 527h1M577 352h1M543 304h2M554 275h1M593 330h1M603 383h1M612 502h1M685 534h1M599 304h1M603 548h1M962 392h1M684 399h1M903 441h1M709 510h1M711 484h1M659 480h1M702 460h1M868 448h1M535 418h1M662 394h1M653 490h1M652 473h1M583 503h1M668 542h2M617 413h1M742 531h1M669 468h1M555 485h1M659 382h1M705 444h1M654 324h1M538 397h1M606 371h1M636 330h1M593 341h1M548 500h1M538 438h1M624 359h1M899 496h1M726 446h1M551 433h1M896 539h1M583 518h1M547 424h1M551 442h1M588 385h1M573 541h1M907 524h1M568 543h1M595 353h2M611 344h1M548 440h1M573 486h1M535 414h1M848 486h1M569 306h1M641 398h1M640 475h1M698 348h1M574 414h1M585 475h1M538 334h1M819 516h1M535 485h1M632 465h1M609 523h1M591 506h1M574 500h1M742 461h1M572 486h2M551 399h1M613 356h1M635 494h1M564 497h1M681 542h2M746 324h2M642 380h1M547 370h1M540 427h1M598 352h1M611 531h1M540 462h1M648 407h2M627 440h1M626 334h1M550 329h1M687 313h1M544 453h1M549 432h1M774 399h1M552 535h1M563 295h1M646 363h1M580 438h1M590 301h1M721 386h1M617 432h1M688 375h1M787 400h1M534 396h1M645 385h1M587 372h1M552 334h1M554 344h1M831 367h2M667 455h1M660 345h1M576 396h1M685 468h1M565 454h2M653 385h2M534 279h1M539 419h2M618 362h1M542 519h1M541 335h1M615 377h1M544 352h1M623 526h1M623 401h1M588 441h1M814 350h1M576 287h1M559 344h1M545 382h1M694 421h1M656 480h1M601 496h1M890 470h1M569 495h1M569 455h1M541 481h1M584 508h2M585 356h1M634 499h1M545 414h1M676 390h2M577 524h1M599 388h1M850 414h2M638 291h1M540 542h1M632 400h1M559 423h1M566 543h1M752 439h1M551 500h1M679 520h1M717 355h1M646 491h1M535 408h1M557 373h1M537 351h1M608 463h1M728 527h1M661 416h1M585 432h1M618 343h1M544 364h1M697 467h1M694 454h2M795 459h1M688 437h1M617 519h1M956 418h1M534 373h1M655 520h2M643 372h1M668 420h1M587 516h1M575 338h1M649 481h1M541 424h1M776 470h1M597 413h2M575 342h1M537 295h1M557 316h1M668 471h1M610 501h2M578 506h1M671 503h1M545 305h1M697 473h1M721 466h2M895 441h2M560 369h1M665 475h1M593 417h1M548 433h1M666 404h2M698 468h1M548 399h1M687 525h1M573 405h1M712 427h1M581 505h1M539 382h1M623 372h2M545 364h1M534 481h1M535 333h1M589 410h1M562 541h1M889 459h1M540 374h1M599 432h2M653 444h1M536 482h1M772 498h2M588 548h1M708 383h2M562 382h1M606 344h1M542 371h1M536 499h2M824 531h1M557 385h1M695 369h1M552 410h2M547 446h1M586 399h1M630 337h1M550 400h1M534 483h1M614 437h1M540 405h1M589 361h1M574 391h1M831 368h1M677 531h2M575 309h1M602 473h1M590 527h1M626 500h1M583 403h1M560 392h1M544 360h1M571 486h1M568 499h1M590 442h1M569 513h1M550 276h1M535 274h1M636 295h1M642 325h1M541 458h1M541 394h1M790 468h1M652 504h1M534 479h1M801 395h1M562 337h2M543 384h1M611 459h1M631 523h1M569 403h1M799 421h1M596 487h1M584 517h1M648 445h2M548 482h1M546 443h1M650 469h1M594 356h1M541 467h1M575 313h1M794 407h1M629 345h1M616 529h2M606 291h1M622 286h1M600 340h1M949 384h1M617 525h1M649 525h1M725 413h1M540 531h1M601 525h1M613 343h1M568 397h1M670 471h1M601 439h1M554 462h1M540 468h1M700 358h1M651 402h1M580 513h1M596 381h2M549 450h1M754 451h1M743 455h1M685 406h1M643 490h1M713 483h1M539 415h1M548 320h1M565 499h1M589 447h1M656 428h1M614 386h1M686 368h1M696 389h1M541 336h1M604 387h1M608 411h1M716 482h1M741 438h1M752 439h1M782 545h1M541 359h1M534 385h1M684 373h1M886 518h1M562 377h1M603 482h1M760 458h1M769 525h1M595 451h1M780 466h1M558 355h1M665 482h1M621 503h1M545 435h1M551 344h1M552 384h1M534 419h2M740 355h1M639 479h1M721 391h2M641 416h1M597 388h1M564 346h1M542 416h1M659 432h1M684 378h1M757 485h1M664 297h1M651 524h1M538 409h1M602 282h1M545 361h2M544 360h1M665 394h1M761 356h1M563 343h1M732 406h1M615 504h1M603 450h1M593 384h1M600 514h1M586 435h1M556 389h1M538 293h2M542 285h1M670 408h1M745 439h1M556 398h1M646 293h1M710 532h2M590 507h2M550 476h1M604 341h1M595 529h1M567 439h1M643 392h1M538 496h1M566 405h1M614 520h1M576 359h1M554 530h1M613 340h1M539 326h2M576 333h1M547 547h1M824 501h1M541 312h1M535 349h1M752 471h1M813 421h1M631 343h1M568 393h1M543 332h1M896 401h1M690 432h1M591 353h1M756 488h1M552 264h1M534 348h1M560 452h1M572 471h1M637 464h1M610 512h1M557 395h1M545 474h1M608 411h1M575 422h1M656 351h1M607 434h1M550 390h1M558 291h1M613 346h1M583 461h1M536 327h1M793 388h1M609 401h1M660 468h1M622 483h2M614 452h1M666 367h1M643 454h2M675 465h1M564 438h1M541 478h1M611 412h1M700 396h2M601 424h2M578 466h2M544 485h1M623 488h1M552 401h1M672 537h1M597 524h2M696 357h1M621 453h1M764 466h2M612 403h1M558 528h1M574 495h1M660 425h1M608 356h1M702 532h1M567 346h1M608 295h1M551 487h1M600 481h1M771 353h2M539 518h1M534 336h2M678 473h1M534 350h1M809 522h1M626 349h1M597 411h1M576 534h1M576 485h1M645 412h1M662 411h1M663 358h1M577 403h1M754 400h1M544 517h1M573 466h1M786 530h1M539 384h1M541 411h1M601 519h2M611 486h1M873 510h1M783 347h2M578 527h1M847 470h1M571 450h2M583 361h1M563 410h1M569 380h2M638 477h2M537 514h1M559 474h1M643 398h1M547 272h2M583 380h1M708 403h1M781 528h1M604 325h1M574 348h1M614 401h1M607 533h1M714 529h1M636 488h1M558 381h1M536 459h1M662 364h1M663 522h1M562 545h1M633 446h1M786 437h1M551 500h1M644 473h1M569 356h2M657 397h1M547 429h1M972 440h1M612 383h1M587 480h1M549 536h1M692 419h1M684 362h1M728 476h1M590 299h1M660 461h1M534 431h1M636 544h1M685 386h1M575 328h1M810 435h1M655 442h1M569 457h1M667 450h1M693 456h1M622 508h1M558 493h1M848 356h1M652 546h1M590 297h1M558 534h1M695 361h1M586 544h1M804 515h1M569 471h2M637 325h2M534 369h1M612 283h1M577 428h1M713 427h1M629 498h1M547 510h1M534 518h1M756 463h1M547 481h1M607 339h1M850 394h1M559 471h1M607 458h1M624 384h1M551 524h1M741 542h1M557 385h1M567 358h1M664 412h1M600 283h1M704 338h2M838 397h1M605 417h1M696 367h1M675 385h1M569 381h1M606 518h2M668 459h1M713 394h1M856 420h1M576 452h1M864 548h2M542 359h1M645 299h1M775 470h1M569 383h1M591 523h1M718 443h1M561 427h1M564 333h1M604 382h2M541 450h1M797 433h1M628 421h1M623 404h1M601 501h1M579 330h1M626 347h1M594 442h1M587 416h1M551 474h1M558 484h2M560 464h1M638 518h1M550 388h1M553 287h2M672 545h1M678 388h1M834 405h1M552 535h1M546 458h1M605 328h1M682 385h1M591 395h1M606 538h1M550 454h1M582 517h2M542 441h1M606 419h1M648 516h1M717 374h1M720 427h1M791 403h1M579 418h1M572 415h2M671 338h1M586 454h1M708 373h1M549 513h2M595 330h1M566 349h1M548 303h1M818 537h1M570 480h1M768 383h1M693 463h1M572 350h1M683 391h1M616 365h1M538 535h1M545 320h1M692 477h1M692 495h1M589 472h1M601 546h1M864 516h2M555 527h1M746 403h1M563 507h1M709 547h1M642 477h1M562 355h2M651 547h1M611 392h1M643 402h2M784 486h1M569 320h1M728 501h1M536 312h1M584 434h1M657 486h1M629 426h1M569 378h1M542 536h1M629 459h1M649 384h1M939 535h1M730 446h1M670 340h1M802 536h1M573 469h1M624 361h1M549 268h1M791 382h1M598 407h1M574 466h1M556 378h2M764 360h2M579 399h1M963 459h1M725 407h1M590 401h1M585 537h1M586 393h1M614 378h1M571 457h1M674 361h1M559 401h1M700 494h1M722 539h1M552 301h1M577 301h1M564 432h1M538 428h1M626 409h1M732 509h1M538 397h1M650 399h1M740 472h1M580 470h1M562 511h1M621 318h1M689 503h1M635 394h1M718 526h1M537 396h1M600 360h1M705 428h2M558 371h1M704 384h1M590 425h2M655 504h1M598 407h1M681 376h1M567 459h1M851 431h1M636 545h1M685 380h1M576 337h1M537 335h1M603 414h2M547 300h1M622 349h1M847 425h1M587 464h1M571 375h1M593 498h1M606 310h1M589 483h1M543 446h1M540 361h1M615 378h1M573 430h2M658 539h1M542 359h1M540 285h1M550 285h1M537 394h1M542 403h1M712 521h1M621 302h1M705 347h1M688 404h1M611 385h1M624 414h1M581 438h1M618 330h1M791 351h1M592 503h1M801 418h1M614 278h1M818 500h1M721 345h1M850 409h1M645 322h1M646 513h1M571 425h1M671 398h1M549 308h2M717 505h1M646 424h1M630 490h1M596 519h1M806 457h1M602 430h1M563 314h1M563 418h1M576 503h1M707 380h1M537 306h1M534 297h1M567 275h1M556 387h1M582 423h1M828 528h1M607 375h1M633 465h1M592 469h1M582 330h1M762 351h1M831 396h1M546 435h1M702 480h1M579 524h1M544 511h1M601 461h1M742 316h2M712 411h1M981 547h1M615 518h1M614 299h1M580 425h1M652 497h2M576 535h1M583 479h2M615 490h1M577 439h2M536 297h1M596 489h1M551 362h1M652 404h1M543 341h1M853 459h1M691 453h1M711 420h1M568 485h1M545 442h1M606 336h1M644 318h2M552 324h1M546 265h2M538 501h1M560 515h1M651 454h1M565 304h1M640 474h1M682 542h1M632 356h1M562 290h1M631 320h1M590 476h1M825 501h1M714 541h1M974 397h1M747 527h1M634 434h1M583 348h1M592 371h1M672 534h1M568 437h1M643 352h2M595 465h1M796 541h2M581 501h2M547 283h2M537 502h1M608 302h1M559 520h1M554 440h1M854 543h1M540 382h1M736 438h1M867 511h1M647 418h1M537 318h1M602 504h1M683 492h1M564 436h1M566 487h1M589 435h1M898 515h1M548 510h1M651 435h1M574 409h1M633 540h1M588 426h1M670 407h1M709 489h1M666 440h1M544 335h1M621 495h1M645 349h1M538 542h1M696 383h1M567 533h1M903 485h1M545 545h1M633 424h1M886 543h2M551 414h1M557 517h1M548 347h1M779 548h1M741 430h1M568 541h1M644 417h2M735 527h1M688 513h1M641 356h2M569 548h1M581 475h1M561 298h1M616 502h1M608 309h1M660 374h1M698 509h1M657 530h1M770 477h1M537 517h1M639 389h1M687 369h1M561 532h1M813 415h1M559 456h1M550 489h1M789 455h1M553 548h1M577 412h1M595 371h1M653 363h1M586 454h1M595 295h1M609 540h1M556 293h1M611 423h1M765 473h1M602 410h1M574 531h2M695 416h2M581 393h1M789 497h1M733 342h1M564 417h1M717 329h1M535 387h1M649 334h1M580 420h1M553 500h1M616 444h1M565 510h2M646 467h1M552 331h1M752 491h1M535 417h1M573 529h1M591 454h2M541 431h1M581 462h2M658 385h2M846 388h1M617 292h1M608 429h2M645 459h1M686 393h2M554 514h1M708 361h1M555 497h1M758 545h1M556 519h1M616 504h1M569 448h1M764 476h1M706 302h1M589 495h1M539 462h1M596 462h1M583 327h1M634 470h1M537 285h1M649 544h1M597 536h1M547 374h1M630 415h1M642 396h1M713 491h1M546 426h1M559 368h1M595 483h2M749 518h2M616 439h1M680 501h1M642 289h1M604 325h2M595 412h1M673 439h1M536 406h2M536 441h1M548 348h2M561 398h1M547 268h1M538 502h1M638 331h1M626 522h1M641 532h1M577 539h2M549 508h1M561 329h1M742 490h2M547 494h1M547 504h1M687 545h1M597 518h1M669 390h1M790 478h1M678 466h1M814 475h1M705 472h1M535 523h1M769 533h1M752 440h1M558 283h1M540 498h1M555 424h1M619 393h1M569 405h2M561 382h1M602 360h1M602 543h1M669 367h1M651 545h1M849 409h1M658 482h1M667 466h1M780 436h1M648 360h1M584 431h1M545 340h1M551 400h1M543 542h1M617 529h2M592 408h1M576 317h1M600 356h2M546 481h1M769 506h1M560 443h1M632 350h1M546 459h1M632 469h1M579 466h1M590 362h1M613 356h1M601 359h1M648 517h1M602 514h2M906 476h1M585 359h1M711 496h1M563 547h1M637 384h1M534 493h2M670 362h1M561 482h1M637 477h1M702 521h1M811 466h1M559 523h1M767 468h1M784 467h1M582 457h1M634 506h1M756 538h1M600 332h1M576 417h1M587 516h1M579 308h1M877 404h1M554 529h1M558 545h1M899 547h1M596 489h2M623 522h1M656 322h1M537 390h1M642 474h1M598 344h1M673 338h1M545 360h2M740 449h2M710 512h1M863 543h1M904 457h1M547 470h1M798 493h1M688 341h1M774 433h1M679 485h1M587 453h1M546 339h1M616 294h1M550 463h1M537 472h1M797 525h1M716 315h1M692 391h1M588 309h1M645 487h1M641 490h1M556 343h1M577 458h1M560 534h1M811 385h1M542 523h1M542 433h1M538 359h1M554 369h1M614 516h1M695 496h1M546 497h1M595 509h1M609 491h1M542 336h1M643 375h1M620 514h1M643 370h1M657 409h1M577 381h1M927 470h2M697 546h1M611 320h1M534 399h2M606 387h1M588 378h1M717 333h1M648 373h2M615 309h1M627 470h1M535 534h1M576 546h1M615 349h1M737 488h1M714 543h1M554 456h1M551 268h2M691 389h1M575 465h1M597 470h1M917 516h1M623 410h1M649 312h1M612 402h1M641 351h1M694 342h1M580 343h1M535 333h2M940 443h2M540 419h2M569 268h1M738 429h1M577 270h1M641 484h1M558 498h1M636 315h1M544 358h1M574 496h1M591 474h1M672 519h1M538 501h1M543 264h1M546 501h1M551 430h1M561 322h1M565 301h1M837 434h1M650 501h1M600 387h2M609 473h1M572 394h1M581 480h1M607 384h1M618 334h1M572 502h1M649 473h1M561 511h1M697 475h1M989 470h2M572 350h1M581 424h2M668 518h1M567 450h1M535 463h1M651 291h1M596 320h2M608 473h1M536 326h1M574 336h1M693 366h1M655 524h1M583 506h2M604 363h1M630 393h2M668 365h1M605 537h1M538 333h1M569 443h1M575 417h1M702 546h1M544 514h2M593 538h1M536 502h1M547 483h1M558 475h1M616 436h1M568 362h1M564 488h2M636 390h1M536 373h1M547 545h1M665 468h1M637 469h1M578 405h1M560 278h1M783 518h1M557 328h1M562 438h1M555 413h1M681 458h1M544 299h1M675 470h1M677 384h2M661 400h1M582 360h1M573 291h1M608 364h1M552 408h1M594 352h1M564 413h2M586 382h1M613 486h1M564 406h1M604 444h1M571 332h1" stroke="#000" stroke-width="1" fill="none" shape-rendering="crispEdges"/>
<path d="M567 577h2M656 579h1M662 607h1M534 607h1M637 613h1M582 574h1M707 601h1M563 643h1M637 578h1M820 605h1M549 644h1M769 551h1M688 565h1M570 616h1M546 606h1M716 610h1M552 575h1M565 617h1M658 569h1M775 635h1M798 562h1M562 586h1M577 606h1M599 638h1M706 630h1M717 595h1M676 617h1M694 641h1M808 590h2M585 593h1M565 571h1M572 551h1M781 620h1M618 607h1M744 643h1M727 588h1M679 633h1M542 645h2M684 569h1M539 624h1M832 565h1M561 631h1M701 597h1M586 560h1M651 601h1M540 609h1M556 612h1M769 570h1M581 577h1M572 587h1M536 612h1M590 591h1M540 618h1M555 568h1M688 607h1M598 589h1M708 588h1M613 572h1M535 582h1M538 610h1M806 637h1M547 613h1M552 581h2M802 584h1M822 612h1M802 605h1M785 554h1M535 575h2M695 584h1M598 596h1M797 621h1M653 639h1M540 553h1M580 602h1M596 607h1M639 599h1M559 614h2M538 554h1M805 634h1M654 556h1M535 640h1M566 582h1M577 569h1M606 629h1M629 560h1M556 593h1M547 600h1M598 555h2M780 570h1M602 632h1M535 644h1M534 570h1M749 642h1M539 560h2M607 561h1M619 609h1M721 592h1M682 607h1M568 575h1M768 617h1M540 550h1M599 577h2M537 609h1M546 627h1M609 595h1M650 621h1M743 627h1M795 557h1M630 618h1M655 618h1M534 576h1M696 588h1M759 608h1M588 559h1M824 598h1M671 571h1M554 600h1M732 622h1M833 603h1M543 550h1M654 575h1M608 561h1M615 619h1M683 579h1M731 611h1M707 598h1M542 601h1M534 620h2M650 634h1M711 551h1M709 625h2M589 553h1M830 640h1M534 615h2M565 608h1M583 638h1M544 621h1M610 633h1M555 552h1M565 608h1M629 575h1M734 592h1M628 553h1M572 580h1M534 619h1M735 594h1M588 600h1M565 594h1M535 642h1M725 550h2M540 637h1M534 622h1M745 561h1M534 561h1M653 619h1M636 631h1M758 616h1M618 594h1M742 567h1M749 571h1M732 644h1M534 598h1M669 608h1M538 583h1M832 597h1M671 609h1M538 570h1M595 578h1M537 554h1M535 553h1M585 597h1M710 638h1M601 586h1M635 631h1M543 557h1M838 610h1M821 569h1M648 643h1M574 642h1M742 579h1M699 645h1M649 556h1M539 639h2M766 559h1M662 624h1M540 568h1M829 595h1M767 567h1M669 582h1M588 605h1M582 643h1M561 602h1M553 564h1M645 630h1M615 593h1M567 623h1M536 635h1M758 622h1M558 585h1M535 567h1M755 555h1M554 629h1M563 608h1M640 606h1M632 610h1M766 639h1M654 634h1M575 581h1M723 606h1M723 583h1M718 594h1M534 608h1M686 559h1M662 617h2M538 569h1M534 591h1M661 610h1M541 581h1M612 606h1M534 554h1M547 640h1M544 604h1M555 606h1M536 612h1M817 567h1M561 627h1M737 570h1M628 600h2M722 597h1M837 645h1M711 621h2M711 605h1M653 554h1M537 633h1M561 621h1M547 596h2M825 557h1M544 626h1M751 598h1M748 584h1M641 559h1M610 581h2M534 595h1M567 614h1M551 556h1M677 602h1M537 566h1M582 607h1M554 555h2M558 590h1M597 643h1M534 588h1M573 552h1M596 636h2M653 622h1M536 607h1M726 605h1M735 628h1M830 634h1M564 557h1M541 591h1M642 579h1M534 636h1M665 556h1M626 610h2M558 634h2M581 604h1M676 626h1M652 581h1M594 609h1M570 632h1M793 560h1M554 610h2M662 641h1M549 629h1M675 637h1M718 631h1M642 598h1M570 558h1M763 625h1M642 582h1M738 586h1M534 590h1M721 598h1M537 561h1M543 560h1M629 598h1M617 554h1M672 551h1M792 643h2M568 578h1M535 613h1M534 619h1M662 587h1M534 573h2M758 565h1M534 566h1M545 628h1M721 608h1M796 627h1M838 549h1M620 621h1M602 600h1M726 594h2M546 632h1M721 636h1M766 589h1M595 596h1M683 639h1M540 572h1M576 550h1M549 602h1M755 549h1M578 626h1M799 568h1M782 615h1M598 638h2M743 626h2M542 629h1M673 575h1M559 560h1M770 583h1M737 574h1M535 616h2M684 604h1M711 645h1M542 645h1M586 636h1M585 589h1M810 617h1M550 621h2M766 593h1M666 554h1M591 639h1M539 601h1M555 605h1M702 606h2M788 577h1M672 615h1M568 588h1M650 575h1M693 577h2M752 591h1M534 601h1M537 590h1M607 606h1M686 570h1M610 605h1M784 643h1M692 600h1M553 591h1M589 637h1M600 553h1M555 586h1M563 581h1M606 610h1M607 589h1M669 583h2M737 630h1M551 608h1M601 627h1M534 643h2M582 627h1M666 611h1M759 561h1M638 619h1M679 570h1M616 620h1M723 578h2M576 565h1M805 616h1M538 615h1M540 584h1M655 642h1M544 598h1M838 579h1M749 618h1M608 641h1M628 558h2M580 601h1M806 589h1M738 627h1M751 617h1M612 602h1M678 589h1M767 565h1M544 584h1M534 643h1M759 604h1M801 582h2M706 596h1M737 553h1M575 617h2M676 563h1M827 625h1M726 560h1M694 601h1M634 608h1M562 567h2M804 561h1M632 628h1M831 581h1M544 624h1M554 638h1M571 632h1M551 635h2M576 615h1M720 613h1M684 564h1M536 567h1M744 583h1M542 616h1M568 550h1M543 559h1M751 598h2M634 596h1M688 569h1M664 612h1M596 630h1M538 613h1M571 642h1M556 612h1M534 557h1M575 551h1M665 603h1M542 639h1M564 593h1M780 600h1M536 633h1M690 569h1M613 616h1M619 625h1M732 590h1M764 637h2M623 637h1M781 567h1M594 612h1M547 630h1M597 623h1M791 587h1M535 613h1M534 600h1M791 577h1M792 614h1M580 566h1M678 594h1M618 573h1M551 556h1M657 628h1M534 644h1M534 577h1M587 615h1M609 644h1M811 615h1M760 569h1M786 583h1M673 638h1M815 617h1M656 573h1M551 637h1M575 563h1M678 630h1M544 567h1M713 584h1M610 591h1M833 599h1M547 549h1M545 572h1M747 633h1M665 644h2M560 586h2M833 582h1M734 556h2M549 625h1M605 633h1M692 571h1M657 613h1M604 612h1M788 609h1M607 635h1M544 623h1M539 562h1M552 550h1M796 642h1M816 556h1M575 598h2M701 583h1M589 600h1M831 553h1M555 616h1M538 577h1M797 570h1M571 565h2M795 551h1M577 560h1M562 550h1M737 565h2M640 628h1M715 615h1M768 556h1M804 623h1M822 613h1M631 580h2M536 600h1M662 563h1M744 604h1M535 555h1M564 632h1M777 639h1M606 592h1M812 552h1M596 584h1M568 559h1M534 644h1M692 591h2M549 563h1M601 551h1M604 612h1M754 571h1M826 639h1M694 568h1M629 577h1M821 562h1M780 633h1M709 636h1M539 635h1M542 588h1M604 633h1M792 618h2M543 561h1M548 613h1M813 573h1M823 613h1M768 592h1M568 618h2M761 604h1M543 603h1M766 570h1M584 633h1M539 550h1M639 608h1M673 578h1M818 637h1M559 643h2M534 554h1M762 595h1M555 562h1M760 615h1M534 581h2M788 600h1M752 565h2M713 612h1M663 639h1M622 582h1M601 590h1M817 643h1M590 567h1M542 609h1M786 571h2M794 626h1M558 595h1M596 628h1M696 568h1M534 564h1M546 587h1M578 592h1M546 644h1M826 589h1M750 559h2M602 557h1M733 584h1M767 632h1M707 624h1M811 553h2M832 588h1M760 626h1M752 573h1M567 630h1M537 591h1M541 643h2M677 627h1M581 595h1M534 628h1M640 592h1M728 615h1M729 629h2M618 576h1M583 557h1M797 552h2M606 640h1M613 588h1M659 583h1M538 623h1M698 572h1M613 635h1M535 585h1M837 557h1M536 591h1M661 610h1M692 607h1M799 600h1M560 586h2M592 552h2M718 631h1M784 563h1M534 642h1M541 597h1M756 598h1M555 552h1M551 603h2M746 604h1M648 617h1M534 569h1M645 640h2M704 592h1M605 565h1M640 571h1M591 614h1M534 550h1M569 587h1M549 619h1M582 592h1M583 609h1M534 555h1M740 607h1M573 601h1M559 558h1M591 617h1M541 591h1M633 644h1M637 603h1M602 592h1M599 607h1M684 636h1M722 639h1M677 639h1M537 559h2M554 572h1M547 558h1M621 623h1M583 582h1M625 589h2M638 581h1M639 598h1M580 596h1M729 550h1M563 582h1M764 632h1M543 572h1M538 554h1M583 609h1M810 621h1M611 567h1M823 553h2M549 622h1M807 586h1M544 598h1M687 607h1M538 636h1M540 554h1M803 570h1M749 554h1M547 550h1M620 551h1M572 624h1M579 585h1M581 578h1M540 623h1M837 597h1M600 568h1M535 572h1M620 619h1M718 580h2M606 583h1M737 577h1M534 614h1M541 549h1M688 585h1M834 613h1M686 566h2M749 613h1M607 642h1M826 617h1M548 617h1M618 563h1M669 635h1M641 606h1M606 553h1M560 617h1M802 641h1M754 613h1M710 599h1M764 563h2M681 558h1M574 623h1M830 551h1M618 604h1M557 577h1M588 599h1M794 608h1M561 558h1M581 589h1M541 632h1M548 607h2M535 601h1M684 623h1M800 610h1M700 561h1M543 552h1M757 577h1M681 610h1M664 552h1M810 581h2M551 565h1M611 626h1M736 608h2M759 575h1M534 580h1M627 573h1M536 572h1M738 609h2M696 640h1M550 569h2M696 602h1M731 553h1M536 589h1M694 589h1M684 579h2M602 551h1M537 574h1M534 635h1M612 614h1M612 564h1M698 581h2M703 555h1M769 619h1M552 590h1M618 567h1M534 619h1M540 586h1M571 621h1M721 600h1M828 599h2M547 615h1M534 620h1M637 611h1M534 594h2M656 592h1M569 555h1M836 565h1M554 604h1M705 644h1M718 596h1M648 579h1M551 591h1M677 556h1M599 627h1M805 605h1M704 590h1M541 588h1M803 583h2M725 584h1M795 556h2M534 631h1M732 631h1M731 603h1M725 586h1M575 603h1M657 552h1M624 602h1M538 555h1M553 617h1M538 579h1M666 590h1M534 556h1M749 620h1M722 562h1M535 607h1M587 617h1M644 606h1M537 549h1M562 567h1M535 559h1M793 613h1M534 598h2M771 553h1M557 566h1M553 560h1M814 633h1M772 573h1M560 580h1M694 586h1M621 584h1M827 610h1M541 630h2M544 602h1M544 611h1M662 608h1M592 556h2M534 563h1M799 601h1M536 571h1M832 641h2M815 575h1M673 550h1M742 575h1M552 602h1M560 627h1M598 551h1M574 564h1M756 572h1M718 597h2M800 612h1M622 606h1M563 589h1M723 577h1M534 632h1M819 554h1M571 585h2M811 561h1M555 606h1M559 596h1M815 609h1M551 589h1M553 563h1M647 603h1M671 622h1M664 625h1M741 563h1M559 605h1M607 629h1M676 554h1M783 572h1M820 610h1M825 620h1M704 632h1M696 617h1M537 584h2M721 619h1M763 584h1M539 606h1M814 559h1M689 550h1M597 610h1M575 623h1M769 565h1M819 607h1M549 579h1M590 600h1M534 607h1M587 558h1M559 633h1M537 556h1M633 601h1M752 573h1M728 592h1M534 551h1M545 592h1M638 569h1M770 633h1M576 594h1M599 579h2M567 557h1M613 616h1M836 563h2M830 579h2M537 583h1M685 603h1M656 582h1M606 641h2M657 597h1M564 623h1M699 579h1M720 592h1M609 607h1M544 562h1M777 572h1M561 615h1M534 644h1M596 633h1M643 605h1M534 588h1M591 597h1M561 611h1M567 621h1M534 580h1M636 642h1M534 600h1M716 630h1M651 601h1M743 560h1M589 578h1M611 552h2M547 565h1M622 635h1M784 619h1M684 642h2M730 594h1M564 571h1M557 620h1M595 613h1M650 598h1M689 602h1M758 582h2M603 615h1M821 554h1M542 641h1M534 576h1M668 615h1M626 593h1M594 644h1M537 612h1M642 550h1M686 598h2M790 636h2M785 554h1M805 645h1M795 639h1M655 592h1M574 626h1M577 614h1M547 565h1M540 567h1M550 616h2M626 595h1M802 624h1M629 633h1M573 599h1M709 562h1M761 613h2M684 593h1M591 617h1M612 549h1M536 598h1M657 556h1M637 605h1M666 623h1M613 557h1M592 591h1M535 602h1M637 567h1M535 625h1M554 627h1M604 635h1M535 582h1M660 633h1M727 563h1M623 607h1M550 644h1M638 624h1M639 578h1M692 576h1M626 578h1M789 552h2M585 638h1M646 638h1M535 642h1M668 613h1M534 574h2M546 572h2M621 608h1M544 602h1M547 603h1M655 578h1M545 631h1M579 573h1M678 615h1M713 599h1M534 568h1M741 637h1M637 579h1M567 617h1M539 599h1M534 606h1M572 638h1M803 578h1M586 581h1M766 571h1M723 553h2M661 601h1M548 641h1M624 577h1M622 618h1M540 601h1M650 584h1M732 575h2M747 606h2M566 619h1M577 585h1M544 617h1M685 633h1M705 576h1M572 628h1M734 639h1M560 569h1M750 571h1M685 600h1M657 556h1M534 592h1M549 585h1M773 644h2M754 607h2M836 572h1M673 588h1M574 594h1M534 632h1M549 624h1M613 643h1M604 559h1M780 618h1M658 638h1M748 643h1M551 617h1M631 553h1M739 590h1M609 635h2M822 622h1M541 589h1M653 638h1M826 553h1M697 579h1M545 588h1M761 617h2M584 627h2M803 607h1M691 605h1M756 602h1M661 594h1M534 632h2M534 604h1M680 629h1M564 602h2M546 576h1M570 636h1M550 579h1M554 613h1M550 627h1M811 561h1M543 568h1M589 579h1M593 640h1M580 602h1M762 624h1M578 621h2M580 618h1M807 584h2M626 634h1M836 595h1M585 590h1M746 579h1M534 578h1M570 592h1M567 626h1M544 595h1M793 553h1M556 639h1M740 635h1M594 560h1M604 631h1M809 619h1M550 569h1M643 606h1M556 616h1M696 644h1M536 626h1M713 615h1M632 581h1M636 580h1M535 549h1M656 584h1M575 575h1M750 603h2M693 579h1M711 561h1M768 557h1M737 604h1M638 569h2M736 628h2M644 635h2M562 613h2M715 572h1M553 579h1M600 623h1M749 602h1M549 555h1M581 562h1M752 589h1M810 638h1M558 634h1M725 575h1M571 564h2M548 598h1M631 555h1M534 618h1M691 640h1M580 569h1M729 635h1M559 571h1M728 585h1M547 594h1M720 580h1M544 600h2M544 584h1M598 629h1M656 585h1M598 623h1M660 558h1M764 579h1M539 563h1M797 637h1M787 622h1M604 555h1M551 592h1M743 589h1M543 617h1M590 579h2M586 591h1M750 563h1M819 569h1M540 607h1M794 559h1M562 553h1M743 626h1M602 557h1M823 642h1M557 571h1M622 569h1M611 623h1M803 609h2M548 565h1M621 606h1M583 627h1M573 549h1M629 642h1M560 613h1M783 622h1M588 551h1M684 580h1M643 576h1M718 550h1M588 566h1M535 590h1M767 602h1M571 577h1M761 635h1M793 567h2M566 555h1M564 637h1M590 587h1M593 644h1M540 561h1M541 631h1M709 639h1M574 606h2M574 588h1M781 624h1M541 634h1M683 568h1M543 644h1M563 550h1M668 560h1M691 572h1M534 588h1M694 556h1M740 598h1M557 600h1M571 550h1M668 549h1M703 578h1M720 565h1M534 556h1M814 642h1M810 605h1M537 572h1M578 555h1M751 595h1M536 594h1M581 576h1M737 587h1M539 625h1M546 569h1M743 586h1M603 566h1M817 570h2M740 551h1M643 598h1M539 604h2M643 582h1M541 564h1M708 549h1M553 576h1M571 591h1M564 583h1M817 627h1M534 549h2M557 555h1M631 551h1M543 628h1M686 580h2M551 568h1M534 590h1M582 595h1M575 561h2M792 606h1M539 599h1M597 557h2M629 633h1M785 574h1M661 592h1M691 640h1M643 558h1M535 634h1M536 586h1M691 645h1M539 569h1M534 608h1M535 638h1M633 577h1M556 591h1M602 582h1M741 623h1M654 592h2M620 567h1M555 600h1M556 613h1M827 631h1M630 628h1M766 602h2M732 632h1M724 563h1M786 594h1M724 598h1M661 551h1M661 555h1M802 613h2M596 583h1M828 625h1M590 585h1M783 602h1M778 631h2M555 627h1M800 589h1M625 579h1M545 629h1M648 630h1M594 614h1M552 553h2M737 629h1M588 552h1M741 645h1" stroke="#000" stroke-width="1" fill="none" shape-rendering="crispEdges"/>
<path d="M687 698h1M698 663h1M730 653h1M534 654h1M662 704h1M631 706h1M541 678h1M807 674h1M587 758h1M711 737h1M722 657h1M572 681h1M606 726h1M614 764h1M603 646h1M798 643h1M585 695h1M539 641h1M628 683h1M918 664h1M569 720h1M605 687h1M590 730h1M747 658h1M702 723h1M567 642h1M547 657h1M603 664h1M590 649h1M570 657h1M572 683h1M572 684h1M971 721h1M579 667h1M799 688h1M639 666h1M828 756h1M859 741h1M643 701h1M1001 704h1M657 666h1M544 692h1M548 641h1M815 656h1M738 652h1M819 677h1M992 731h1M551 658h1M636 723h2M646 713h1M900 697h1M987 699h2M730 675h1M945 729h1M725 676h1M889 680h1M754 652h1M751 733h1M733 676h1M736 693h1M833 759h1M628 715h1M783 697h1M900 681h1M599 661h1M849 678h1M569 712h1M771 695h1M568 684h1M940 667h1M760 718h1M778 645h1M549 684h1M660 676h1M914 697h1M538 717h1M783 690h1M996 732h1M617 743h1M537 671h1M629 735h1M601 714h1M750 682h1M547 719h1M643 661h1M846 662h1M799 677h1M724 666h1M830 684h1M670 715h1M554 664h1M745 730h1M850 655h1M624 731h1M807 704h1M830 648h1M593 703h1M833 728h1M948 737h1M859 722h1M755 681h2M540 759h1M591 689h1M574 705h1M833 712h1M757 693h1M1000 723h1M648 690h2M606 685h1M559 733h2M733 677h1M753 705h1M817 658h1M746 766h1M686 716h1M756 740h1M720 720h1M614 716h2M867 676h1M771 678h2M814 726h1M698 686h1M788 666h1M857 685h2M770 685h1M760 689h1M887 722h1M945 720h1M792 738h2M618 651h1M699 681h1M573 731h1M548 701h1M574 723h1M854 722h1M943 754h1M535 657h1M677 713h1M537 655h2M685 657h1M836 732h1M953 739h1M685 641h1M626 731h2M887 712h1M608 683h1M779 644h1M701 692h1M977 671h1M537 682h1M727 704h1M752 731h1M630 678h1M919 674h1M799 745h1M726 695h1M724 701h1M586 719h2M741 689h1M986 735h1M595 714h1M534 729h1M573 729h1M609 735h1M750 640h1M753 645h1M690 716h1M867 641h1M599 647h1M695 698h1M910 680h1M595 721h2M770 735h1M550 699h2M800 647h2M913 743h1M564 669h1M673 704h1M742 685h1M834 664h1M838 693h1M787 671h1M807 711h2M581 669h1M534 676h1M687 737h1M756 661h1M775 646h1M831 745h1M831 685h1M548 679h1M912 681h1M858 692h1M693 686h1M568 722h1M540 730h1M778 694h1M613 684h1M963 701h1M745 642h1M570 671h1M558 689h1M548 705h1M644 732h1M618 645h1M622 682h1M978 690h1M632 761h1M627 708h1M539 656h1M724 739h1M896 653h1M549 689h2M582 731h2M534 673h1M804 710h1M729 737h1M790 713h1M597 709h1M540 716h2M626 649h2M626 753h1M790 692h1M534 759h2M534 664h1M899 712h1M567 684h1M539 677h1M630 703h1M812 676h1M728 661h1M872 643h1M687 687h1M545 753h1M835 705h1M643 721h1M548 716h1M587 698h1M804 641h1M653 766h1M745 694h1M556 657h1M540 708h1M534 696h1M829 701h1M536 654h2M984 725h1M594 697h1M534 691h2M575 664h1M769 662h2M594 679h1M593 649h1M582 751h1M763 719h1M822 658h1M588 698h1M841 703h1M660 711h1M719 650h1M895 708h1M964 690h1M537 679h1M539 697h1M767 703h1M923 680h1M536 640h1M879 655h1M593 707h1M542 692h1M749 738h1M544 724h1M820 659h1M774 647h1M550 673h1M543 703h1M646 686h1M960 675h1M614 679h2M634 710h1M539 700h1M776 670h1M959 716h1M559 722h1M756 676h1M622 751h1M665 644h1M777 696h1M536 703h1M556 696h1M986 730h2M585 643h1M541 698h1M774 644h2M920 655h1M544 707h1M536 678h1M597 641h2M757 643h1M739 670h1M944 718h2M551 645h1M602 757h1M545 697h1M821 641h1M930 681h1M688 679h1M600 686h1M871 687h1M749 723h1M597 707h1M716 737h1M591 670h1M563 651h2M562 709h1M704 687h1M902 700h1M569 708h1M769 663h1M905 664h1M534 724h1M957 734h1M824 761h1M847 693h1M841 657h1M535 680h1M709 700h2M809 746h1M926 711h1M805 648h1M764 716h1M825 739h1M577 692h1M578 749h2M581 689h1M964 668h1M666 655h1M711 654h1M547 712h1M851 709h1M534 651h1M560 737h1M825 739h2M961 712h1M842 686h1M703 695h1M663 724h1M996 748h1M645 671h1M788 651h1M607 720h1M591 707h1M948 667h1M864 749h1M767 705h1M768 686h1M610 670h1M976 733h1M843 742h1M582 723h1M575 703h1M864 694h1M626 668h1M573 688h1M651 747h1M740 680h1M573 715h1M717 676h1M599 696h1M604 709h1M940 673h1M563 652h1M787 733h1M626 677h1M813 726h1M776 656h1M901 749h1M814 748h1M623 687h1M827 682h1M634 670h1M623 701h2M805 697h1M864 660h1M569 687h1M999 750h1M569 659h2M711 724h1M705 721h1M577 648h1M580 671h1M920 650h1M796 692h1M911 716h2M968 757h1M620 711h1M791 729h1M541 645h1M795 726h1M546 658h1M578 721h1M597 670h1M575 680h1M547 707h1M719 699h1M579 714h1M588 717h1M837 699h1M547 684h1M799 727h1M800 709h1M721 650h2M621 682h1M625 698h1M542 669h1M903 695h2M920 749h1M811 727h2M599 745h1M866 748h1M620 719h1M540 711h1M674 728h1M979 702h1M735 680h1M559 657h1M772 734h1M952 761h1M706 649h1M590 684h1M607 667h1M557 690h1M695 700h1M873 717h1M979 765h1M914 680h1M727 699h1M737 715h1M597 667h1M951 698h1M972 757h1M656 672h1M790 696h1M636 714h1M903 672h1M725 724h1M973 684h1M928 662h1M701 735h1M590 700h1M658 720h1M545 644h1M761 689h1M765 702h2M554 747h1M817 648h1M958 722h2M560 664h1M557 644h2M945 696h1M721 740h1M602 674h1M544 674h1M568 662h1M580 641h1M609 699h1M795 742h1M687 660h1M683 707h1M643 695h1M677 728h1M971 666h1M781 673h1M784 699h1M557 702h1M870 673h1M881 726h1M717 688h2M794 746h1M889 696h2M534 713h1M551 728h1M851 720h2M907 691h1M612 699h1M612 655h1M760 678h1M756 645h1M653 724h1M999 707h1M536 672h1M772 647h1M587 661h1M791 660h1M591 722h1M811 682h1M725 737h1M607 733h1M752 671h2M659 686h1M853 690h1M858 645h1M836 744h1M537 742h1M670 729h1M595 722h2M740 741h2M590 673h1M534 681h1M757 686h1M733 733h1M757 657h2M697 708h2M585 672h1M762 685h1M676 640h1M907 656h1M955 687h1M621 700h1M831 685h1M626 702h1M740 739h1M620 734h1M743 730h2M897 707h1M685 651h1M951 726h1M778 657h1M723 725h1M999 749h1M744 725h2M623 696h1M706 659h1M566 740h1M547 703h1M673 747h1M727 730h1M724 711h1M864 661h1M736 676h1M995 748h1M538 706h1M682 644h1M601 754h1M567 686h1M567 697h1M691 690h1M944 723h1M553 686h1M896 647h1M559 682h1M700 733h1M910 735h1M554 711h1M680 648h1M642 699h1M569 697h2M939 680h1M789 661h1M983 722h1M841 689h1M743 716h1M669 655h1M734 693h1M929 672h1M799 678h1M876 676h1M805 727h1M862 721h1M710 754h1M799 706h1M803 685h1M541 674h1M992 693h1M625 640h1M760 660h1M761 644h1M838 647h1M599 710h1M955 714h1M843 667h2M592 683h1M763 681h1M866 665h1M789 664h2M886 710h1M543 702h1M536 763h1M678 716h1M638 650h1M956 715h1M829 695h1M856 713h1M558 651h1M543 702h1M811 740h1M549 676h1M653 710h1M537 723h1M988 733h1M710 677h1M773 647h2M741 702h1M826 705h1M604 764h1M932 685h1M604 756h1M536 673h1M793 759h1M595 667h1M673 697h1M581 669h1M676 713h1M682 652h1M741 719h1M776 653h1M858 640h1M761 709h1M738 671h1M542 686h1M988 693h1M990 740h1M645 688h1M536 714h1M566 696h1M571 735h1M642 662h2M553 648h1M538 739h1M862 722h1M534 704h1M922 684h1M727 682h1M543 663h1M814 666h1M815 719h1M602 655h1M694 654h1M913 713h1M988 724h1M1002 718h1M548 650h1M800 730h1M537 717h1M615 704h1M793 731h1M875 657h1M619 733h1M726 666h1M990 720h1M568 690h1M622 706h2M815 644h2M671 710h1M902 648h1M538 680h2M534 712h1M850 746h1M695 690h1M590 689h1M595 704h1M715 676h1M534 643h2M637 641h1M838 665h1M543 696h1M953 695h1M574 704h2M535 717h1M680 682h2M890 743h1M565 714h1M953 718h1M534 706h1M925 723h1M593 665h1M534 645h1M971 713h1M929 653h1M605 662h1M548 671h1M865 662h1M735 727h1M628 685h2M545 685h2M663 754h1M800 751h1M536 685h1M610 697h1M773 663h1M729 655h1M538 718h1M582 686h1M764 696h1M747 696h1M780 693h1M567 722h1M592 702h1M534 681h1M579 726h1M648 719h1M713 661h1M743 640h1M924 718h1M937 740h1M627 705h2M558 723h1M984 745h2M730 679h2M645 708h1M925 742h1M940 746h1M543 720h1M830 663h1M679 648h1M898 692h1M943 720h2M985 750h1M732 651h1M603 711h1M772 664h2M771 687h2M774 676h1M603 670h1M772 694h1M600 721h1M534 709h1M578 672h1M633 701h1M966 734h1M873 702h1M598 717h1M604 665h2M635 692h1M576 675h1M766 695h1M752 740h1M716 728h1M571 698h1M702 671h1M704 678h1M563 644h1M851 657h1M999 676h1M567 688h1M908 647h1M853 645h1M539 706h1M602 676h1M540 669h1M541 640h1M540 720h2M853 726h1M811 731h1M699 644h1M851 640h1M737 676h1M719 640h1M547 680h1M907 710h1M606 695h1M696 694h1M540 660h1M627 703h1M734 704h1M678 673h1M537 726h1M578 706h1M650 756h1M832 725h1M574 700h2M884 707h1M564 724h1M627 707h1M717 725h2M831 654h1M554 650h1M628 688h2M538 660h1M755 686h1M900 723h1M554 740h1M709 708h1M636 667h1M739 685h2M883 652h1M542 695h2M785 693h1M655 680h2M922 729h1M606 642h1M539 647h1M658 649h2M639 714h1M976 679h1M631 701h1M583 705h1M535 718h1M557 690h1M822 738h1M534 701h1M974 715h1M985 699h1M568 651h1M546 658h1M797 650h1M745 729h1M888 640h1M710 757h1M536 690h1M820 676h1M579 729h1M870 749h1M565 722h1M560 755h1M754 683h2M883 653h1M550 691h2M675 692h1M622 648h1M874 658h2M800 696h1M632 743h1M587 714h1M793 721h1M933 744h1M837 731h1M1000 696h1M576 719h1M819 715h1M776 711h1M748 682h1M802 717h1M779 642h1M997 677h1M907 698h1M550 653h1M589 710h1M658 697h1M740 646h1M975 721h1M646 719h1M649 644h1M571 665h1M618 702h1M540 641h1M621 641h1M951 723h1M633 641h1M854 640h1M654 684h1M635 679h1M605 723h1M940 693h1M755 651h1M692 665h1M574 645h2M922 688h1M596 645h1M606 654h1M566 670h1M590 725h1M627 644h1M539 704h1M714 675h1M917 715h1M592 666h2M872 704h1M749 643h1M571 740h1M797 669h1M984 701h1M807 667h1M539 698h1M799 647h2M619 672h1M590 713h1M850 656h1M819 699h1M710 701h2M671 643h1M570 674h1M586 727h2M656 646h1M992 728h1M992 687h1M623 650h1M928 744h1M542 722h1M535 715h1M948 659h1M877 676h1M599 690h1M926 685h1M534 660h1M631 663h1M555 767h1M960 755h1M797 731h1M814 717h1M1002 737h1M657 739h2M797 698h1M616 712h1M852 684h1M668 663h1M712 660h1M865 718h1M534 724h1M579 700h1M949 703h1M811 745h1M785 735h1M855 725h1M536 699h1M565 663h1M762 665h1M905 719h2M878 716h1M876 730h1M650 645h1M902 687h2M697 721h1M667 719h1M554 726h1M552 708h1M942 688h1M674 747h1M920 730h1M542 659h1M549 712h1M567 649h1M546 709h1M664 696h1M534 662h1M594 698h1M735 648h1M554 673h1M704 725h1M605 684h1M730 645h1M768 743h1M716 713h1M632 684h1M670 641h1M549 671h2M672 674h1M535 712h1M577 712h2M933 724h1M620 721h1M570 702h1M572 737h1M992 751h1M654 763h1M575 731h1M603 656h1M874 703h1M716 718h1M935 740h1M773 674h1M995 752h1M734 724h2M587 674h1M869 726h2M539 717h2M909 703h1M991 675h1M571 714h1M872 750h1M562 697h1M548 739h1M553 651h1M850 728h1M786 647h1M929 694h1M600 660h1M535 702h1M652 699h1M762 673h2M546 693h1M563 655h1M689 665h1M713 724h1M535 763h1M699 667h1M802 707h1M537 737h1M621 699h1M978 698h1M790 746h1M565 671h2M729 696h1M870 747h1M648 670h2M593 651h1M857 657h1M815 722h1M556 693h1M864 735h1M680 642h1M843 674h1M862 698h1M739 658h1M852 658h1M603 642h1M741 694h1M549 706h1M677 726h1M564 703h2M966 669h1M596 715h1M587 642h1M708 685h1M565 727h1M782 654h1M540 653h1M711 726h1M555 674h1M702 674h2M559 693h1M663 701h1M609 723h1M632 693h1M567 661h1M654 710h1M545 694h1M732 688h1M544 665h1M650 687h1M920 650h1M783 641h1M752 700h1M535 706h1M918 710h1M964 746h1M821 681h1M674 711h2M707 671h1M561 705h1M564 665h1M667 728h1M734 644h1M923 674h1M641 681h1M701 685h1M942 721h1M858 689h1M616 655h1M549 650h1M823 715h2M538 647h1M766 726h2M575 680h1M534 641h1M759 659h1M549 670h1M539 653h1M949 753h1M746 658h1M546 656h2M966 726h1M550 710h2M553 640h2M819 660h1M767 643h1M557 677h1M717 650h1M771 714h1M805 714h1M853 722h1M688 670h2M859 676h1M730 702h1M573 694h1M584 673h1M651 715h1M539 658h1M596 695h1M868 676h1M742 682h1M578 684h1M622 668h1M996 724h1M648 735h1M777 655h1M538 727h1M835 717h1M957 734h1M688 727h1M585 652h2M661 712h1M787 684h1M886 707h1M620 706h1M627 760h1M895 705h1M703 735h1M966 672h1M754 732h1M534 690h1M765 688h1M685 663h1M746 660h2M535 686h1M789 725h1M537 669h1M675 654h1M605 732h1M643 663h1M642 735h1M602 675h1M893 716h1M723 737h1M806 740h1M595 713h1M556 717h1M788 691h1M951 672h1M854 671h1M950 737h1M566 646h1M670 680h1M670 705h1M685 697h1M579 658h1M964 724h1M785 684h1M694 725h1M534 693h2M536 683h1M877 679h1M887 701h1M937 674h1M619 705h1M714 724h1M783 703h1M866 683h1M954 679h1M549 654h1M639 643h1M944 680h1M656 656h1M798 651h1M984 674h1M559 663h1M704 674h1M811 720h1M538 704h1M548 654h1M941 674h1M568 708h1M571 659h1M628 704h2M537 725h1M703 679h1M838 663h1M876 644h1M879 745h2M848 706h1M619 664h1M725 656h1M938 720h1M864 728h1M794 717h1M660 749h1M554 680h1M534 679h1M547 720h1M989 683h1M977 731h1M841 736h1M788 653h2M706 659h1M900 727h1M730 645h1M575 727h2M655 642h1M543 678h1M955 682h1M621 641h1M982 684h1M782 703h1M766 653h1M539 664h2M823 696h1M589 719h1M863 659h1M586 694h1M698 662h1M637 672h1M940 703h1M665 683h1M1002 730h1M570 678h1M784 658h1M542 675h1M791 724h1M833 667h1M957 708h1M670 649h1M684 669h1M566 729h1M545 641h2M626 703h1M736 670h1M840 657h1M697 646h2M581 731h1M806 692h1M553 717h1M598 654h1M536 732h1M592 715h1M850 698h1M708 732h1M833 654h1M583 703h1M707 669h1M542 700h1M567 652h2M850 714h1M663 754h1M732 698h1M997 753h1M543 695h2M994 732h2M692 676h1M826 707h2M631 665h1M824 643h1M725 678h1M725 711h1M603 681h1M960 687h1M847 741h1M534 696h1M686 656h1M552 747h1M560 725h1M917 650h1M733 692h1M566 667h1M574 683h1M554 657h1M856 748h1M964 742h1M858 725h1M539 719h1M652 654h1M872 662h2M908 693h1M545 704h1M676 691h1M693 653h1M752 707h1M565 656h1M614 722h1M913 712h1M875 649h1M872 650h2M540 659h1M543 718h1M929 677h1M625 735h1M640 703h1M737 659h1M977 689h1M536 727h1M536 687h1M590 711h1M679 682h2M764 705h1M779 698h1M662 657h1M857 705h1M976 693h1M923 726h1M537 677h1M534 705h1M700 647h1M543 725h1M984 706h1M650 642h1M610 729h1M755 738h1M571 647h1M562 643h1M534 659h1M886 654h1M924 692h1M1001 755h1M749 671h1M783 659h1M594 720h1M776 727h1M956 698h1M596 664h1M652 662h1M623 688h1M555 662h1M907 716h2M824 681h1M613 677h1M769 684h1M608 690h1M605 670h2M552 656h1M891 697h1M575 714h1M549 645h1M763 758h1M790 688h1M586 666h1M765 741h1M923 685h1M792 702h1M867 688h1M534 713h1M545 693h1M809 689h1M594 712h1M687 722h1M976 700h1M723 703h1M559 671h1M837 674h1M712 681h2M569 658h1M695 683h1M865 727h1M688 713h1M838 690h1M601 676h1M721 683h1M866 701h1M536 700h1M886 744h1M702 640h1M566 658h1M663 719h1M866 735h1M595 647h1M721 685h1M582 653h1M853 645h1M666 670h1M632 716h1M599 667h1M926 660h1M734 668h1M984 746h1M550 695h1M871 759h1M923 676h2M684 667h2M573 659h1M757 717h2M698 697h1M728 666h1M637 692h2M723 652h1M618 679h1M593 643h1M708 733h1M685 723h1M828 703h1M672 714h1M692 685h1M633 659h1M733 654h1M846 737h1M638 671h1M856 713h1M614 693h1M674 699h1M697 656h1M537 694h1M720 728h1M854 648h2M535 666h1M874 748h1M546 730h2M605 700h1M691 732h1M537 728h1M536 687h1M843 687h1M723 728h1M981 703h1M627 699h1M582 731h1M601 669h2M615 667h2M568 703h1M927 752h1M645 732h1M855 678h1M602 714h1M693 660h1M771 662h1M869 654h1M874 730h2M909 667h1M769 647h1M558 647h1M771 749h1M684 719h2M784 723h1M917 712h1M574 669h1M534 685h1M766 665h1M619 717h1M785 693h1M558 728h1M980 743h1M699 657h1M600 666h1M775 701h1M757 667h1M860 668h1M606 733h1M914 664h1M640 673h1M615 667h1M700 714h1M993 694h1M751 674h1M701 717h1M579 699h1M565 764h1M869 703h1M793 739h1M831 743h1M599 704h1M795 661h1M645 672h1M534 670h1M791 715h1M629 695h2M961 723h1M541 735h1M739 655h1M688 716h1M840 707h1M939 720h1M959 736h1M847 658h1M944 677h1M692 685h2M593 661h1M697 693h1M588 736h1M966 732h1M593 676h1M674 737h1M673 733h1M658 673h1M544 650h1M540 656h1M858 691h1M959 737h2M703 666h1M719 728h1M586 719h1M534 640h1M895 711h1M588 723h1M541 739h1M743 707h1M578 665h1M664 660h2M607 733h1M831 683h1M547 698h1M970 733h1M907 704h2M1001 740h1M684 718h1M535 687h1M749 736h1M746 668h1M604 660h1M817 679h2M732 648h2M872 650h1M769 728h1M859 667h1M664 668h1M670 700h1M682 642h1M585 646h1M858 687h1M719 654h1M539 660h2M593 716h1M634 642h1M921 651h1M572 715h1M731 661h1M534 694h1M586 700h1M702 706h1M539 665h1M598 702h1M534 691h1M573 652h1M861 649h1M990 729h1M754 687h1M555 686h2M629 656h1M890 654h1M534 707h1M603 664h1M744 687h1M755 680h1M989 726h1M577 681h1M534 676h1M636 703h1M845 695h1M987 754h1M777 704h1M584 693h1" stroke="#000" stroke-width="1" fill="none" shape-rendering="crispEdges"/>
<path d="M1617 604h1M1633 604h1M1592 610h1M1632 606h1M1596 611h1M1584 594h1M1583 602h1M1604 608h1M1611 604h1M1605 607h1M1620 607h1M1584 609h2M1625 609h1M1626 604h1M1609 602h1M1603 594h1M1633 592h1M1601 601h1M1596 611h1M1628 592h1M1612 593h1M1615 595h1M1629 601h1M1610 609h1M1607 611h1M1604 600h1M1602 605h1M1583 597h2M1585 597h1M1612 597h1M1596 611h1M1597 610h1M1630 595h1M1614 594h1M1621 598h1M1600 595h1M1620 592h2M1627 599h1M1591 612h1M1605 599h2M1608 600h1M1583 605h1M1619 607h1M1633 609h1M1624 604h1M1612 602h1M1633 592h1M1601 596h1M1581 603h1M1598 595h1M1618 604h1M1588 592h1M1629 598h1M1610 604h1M1610 599h1M1629 597h1M1610 611h1M1631 601h1M1609 601h1M1625 605h1M1582 593h1M1581 592h1M1633 609h1M1631 609h1M1593 603h1M1586 597h1M1598 608h1M1615 602h1M1607 604h1M1593 592h1" stroke="#000" stroke-width="1" fill="none" shape-rendering="crispEdges"/>
<path d="M1611 595h2M1654 600h1M1614 612h1M1625 603h1M1618 626h1M1656 644h1M1624 600h1M1621 620h1M1626 603h2M1608 595h1M1620 620h1M1630 623h1M1647 610h1M1611 621h1M1613 598h1M1649 612h1M1650 642h1M1646 613h1M1601 635h1M1625 634h1M1646 597h1M1641 617h1M1646 601h1M1622 617h1M1633 632h2M1633 635h1M1658 630h1M1654 597h1M1616 630h1M1619 633h1M1622 612h1M1638 616h2M1648 598h1M1626 628h1M1613 604h1M1621 607h1M1611 624h1M1631 628h2M1617 612h1M1622 596h1M1631 634h1M1630 619h1M1608 625h2M1655 634h2M1600 635h1M1609 609h1M1632 623h1M1637 609h1M1635 620h1M1658 599h1M1641 624h1M1649 619h1M1619 616h1M1641 620h1M1629 633h1M1657 597h1M1633 635h1M1632 618h1M1628 638h1M1611 642h1" stroke="#000" stroke-width="1" fill="none" shape-rendering="crispEdges"/>
<path d="M887 717h1M560 765h1M934 748h1M622 755h1M801 754h1M885 760h1M708 760h1M623 730h1M650 720h1M633 716h1M703 755h1M689 714h1M593 718h1M755 721h1M949 745h1M903 702h1M596 765h1M938 744h1M831 700h1M654 745h1M978 744h1M832 767h1M701 721h1M597 741h2M598 713h1M637 736h1M686 749h1M860 716h1M881 730h1M871 745h1M782 722h1M563 754h1M705 724h1M890 760h1M754 710h1M779 729h1M547 736h1M693 757h1M589 758h1M600 752h1M979 727h1M806 735h1M701 769h1M843 721h1M898 711h1M992 721h1M795 759h1M789 749h1M924 716h1M863 703h1M586 735h1M648 758h1M877 752h1M694 731h1M788 733h1M611 743h1M869 713h1M909 747h1M800 765h1M720 748h1" stroke="#844200" stroke-width="1" fill="none" shape-rendering="crispEdges"/>
<circle cx="856.8" cy="591.1" r="1.500" fill="#b4b4b4" stroke="#1c1c2c" stroke-width="0.900"/>
<circle cx="888.1" cy="597.7" r="1.500" fill="#b4b4b4" stroke="#1c1c2c" stroke-width="0.900"/>
<circle cx="886.5" cy="590.2" r="1.500" fill="#b4b4b4" stroke="#1c1c2c" stroke-width="0.900"/>
<circle cx="874.6" cy="588.8" r="1.500" fill="#b4b4b4" stroke="#1c1c2c" stroke-width="0.900"/>
<circle cx="851.7" cy="587.7" r="1.500" fill="#b4b4b4" stroke="#1c1c2c" stroke-width="0.900"/>
<circle cx="883.2" cy="591.2" r="1.500" fill="#b4b4b4" stroke="#1c1c2c" stroke-width="0.900"/>
<circle cx="865.6" cy="584.7" r="1.500" fill="#b4b4b4" stroke="#1c1c2c" stroke-width="0.900"/>
<circle cx="868.7" cy="587.1" r="1.500" fill="#b4b4b4" stroke="#1c1c2c" stroke-width="0.900"/>
<circle cx="870.5" cy="592.4" r="1.500" fill="#b4b4b4" stroke="#1c1c2c" stroke-width="0.900"/>
<circle cx="838.3" cy="589.6" r="1.500" fill="#b4b4b4" stroke="#1c1c2c" stroke-width="0.900"/>
<circle cx="849.6" cy="585.4" r="1.500" fill="#b4b4b4" stroke="#1c1c2c" stroke-width="0.900"/>
<circle cx="852.7" cy="595.5" r="1.500" fill="#b4b4b4" stroke="#1c1c2c" stroke-width="0.900"/>
<circle cx="879.3" cy="592.5" r="1.500" fill="#b4b4b4" stroke="#1c1c2c" stroke-width="0.900"/>
<circle cx="859.7" cy="582.9" r="1.500" fill="#b4b4b4" stroke="#1c1c2c" stroke-width="0.900"/>
<circle cx="864.7" cy="591.0" r="1.500" fill="#b4b4b4" stroke="#1c1c2c" stroke-width="0.900"/>
<circle cx="869.0" cy="593.4" r="1.500" fill="#b4b4b4" stroke="#1c1c2c" stroke-width="0.900"/>
<circle cx="865.0" cy="598.9" r="1.500" fill="#b4b4b4" stroke="#1c1c2c" stroke-width="0.900"/>
<circle cx="879.1" cy="599.9" r="1.500" fill="#b4b4b4" stroke="#1c1c2c" stroke-width="0.900"/>
<circle cx="873.4" cy="588.8" r="1.500" fill="#b4b4b4" stroke="#1c1c2c" stroke-width="0.900"/>
<circle cx="858.2" cy="594.0" r="1.500" fill="#b4b4b4" stroke="#1c1c2c" stroke-width="0.900"/>
<circle cx="884.6" cy="590.8" r="1.500" fill="#b4b4b4" stroke="#1c1c2c" stroke-width="0.900"/>
<circle cx="875.7" cy="588.6" r="1.500" fill="#b4b4b4" stroke="#1c1c2c" stroke-width="0.900"/>
<circle cx="864.2" cy="588.5" r="1.500" fill="#b4b4b4" stroke="#1c1c2c" stroke-width="0.900"/>
<circle cx="843.8" cy="585.0" r="1.500" fill="#b4b4b4" stroke="#1c1c2c" stroke-width="0.900"/>
<circle cx="870.5" cy="590.6" r="1.500" fill="#b4b4b4" stroke="#1c1c2c" stroke-width="0.900"/>
<circle cx="885.1" cy="593.1" r="1.500" fill="#b4b4b4" stroke="#1c1c2c" stroke-width="0.900"/>
<circle cx="875.9" cy="590.2" r="1.500" fill="#b4b4b4" stroke="#1c1c2c" stroke-width="0.900"/>
<circle cx="838.5" cy="590.2" r="1.500" fill="#b4b4b4" stroke="#1c1c2c" stroke-width="0.900"/>
<circle cx="857.6" cy="592.4" r="1.500" fill="#b4b4b4" stroke="#1c1c2c" stroke-width="0.900"/>
<circle cx="866.0" cy="588.3" r="1.500" fill="#b4b4b4" stroke="#1c1c2c" stroke-width="0.900"/>
<circle cx="862.4" cy="588.5" r="1.500" fill="#b4b4b4" stroke="#1c1c2c" stroke-width="0.900"/>
<circle cx="842.6" cy="582.0" r="1.500" fill="#b4b4b4" stroke="#1c1c2c" stroke-width="0.900"/>
<circle cx="886.8" cy="592.1" r="1.500" fill="#b4b4b4" stroke="#1c1c2c" stroke-width="0.900"/>
<circle cx="863.8" cy="588.2" r="1.500" fill="#b4b4b4" stroke="#1c1c2c" stroke-width="0.900"/>
<circle cx="864.8" cy="606.1" r="1.500" fill="#b4b4b4" stroke="#1c1c2c" stroke-width="0.900"/>
<circle cx="877.1" cy="590.0" r="1.500" fill="#b4b4b4" stroke="#1c1c2c" stroke-width="0.900"/>
<circle cx="860.5" cy="578.2" r="1.500" fill="#b4b4b4" stroke="#1c1c2c" stroke-width="0.900"/>
<circle cx="871.6" cy="596.8" r="1.500" fill="#b4b4b4" stroke="#1c1c2c" stroke-width="0.900"/>
<circle cx="882.9" cy="591.3" r="1.500" fill="#b4b4b4" stroke="#1c1c2c" stroke-width="0.900"/>
<circle cx="861.4" cy="584.1" r="1.500" fill="#b4b4b4" stroke="#1c1c2c" stroke-width="0.900"/>
<circle cx="1091.3" cy="594.3" r="1.500" fill="#b4b4b4" stroke="#1c1c2c" stroke-width="0.900"/>
<circle cx="1067.1" cy="602.5" r="1.500" fill="#b4b4b4" stroke="#1c1c2c" stroke-width="0.900"/>
<circle cx="1071.1" cy="593.8" r="1.500" fill="#b4b4b4" stroke="#1c1c2c" stroke-width="0.900"/>
<circle cx="1042.2" cy="602.7" r="1.500" fill="#b4b4b4" stroke="#1c1c2c" stroke-width="0.900"/>
<circle cx="1086.6" cy="595.7" r="1.500" fill="#b4b4b4" stroke="#1c1c2c" stroke-width="0.900"/>
<circle cx="1095.5" cy="592.6" r="1.500" fill="#b4b4b4" stroke="#1c1c2c" stroke-width="0.900"/>
<circle cx="1077.3" cy="597.1" r="1.500" fill="#b4b4b4" stroke="#1c1c2c" stroke-width="0.900"/>
<circle cx="1073.4" cy="597.2" r="1.500" fill="#b4b4b4" stroke="#1c1c2c" stroke-width="0.900"/>
<circle cx="1113.9" cy="599.0" r="1.500" fill="#b4b4b4" stroke="#1c1c2c" stroke-width="0.900"/>
<circle cx="1117.9" cy="600.2" r="1.500" fill="#b4b4b4" stroke="#1c1c2c" stroke-width="0.900"/>
<circle cx="1124.4" cy="597.1" r="1.500" fill="#b4b4b4" stroke="#1c1c2c" stroke-width="0.900"/>
<circle cx="1098.3" cy="591.6" r="1.500" fill="#b4b4b4" stroke="#1c1c2c" stroke-width="0.900"/>
<circle cx="1086.2" cy="593.1" r="1.500" fill="#b4b4b4" stroke="#1c1c2c" stroke-width="0.900"/>
<circle cx="1088.4" cy="591.8" r="1.500" fill="#b4b4b4" stroke="#1c1c2c" stroke-width="0.900"/>
<circle cx="1096.2" cy="606.2" r="1.500" fill="#b4b4b4" stroke="#1c1c2c" stroke-width="0.900"/>
<circle cx="1074.3" cy="598.3" r="1.500" fill="#b4b4b4" stroke="#1c1c2c" stroke-width="0.900"/>
<circle cx="1102.2" cy="593.0" r="1.500" fill="#b4b4b4" stroke="#1c1c2c" stroke-width="0.900"/>
<circle cx="1083.9" cy="593.9" r="1.500" fill="#b4b4b4" stroke="#1c1c2c" stroke-width="0.900"/>
<circle cx="1098.6" cy="593.4" r="1.500" fill="#b4b4b4" stroke="#1c1c2c" stroke-width="0.900"/>
<circle cx="1141.7" cy="599.4" r="1.500" fill="#b4b4b4" stroke="#1c1c2c" stroke-width="0.900"/>
<circle cx="1112.6" cy="604.6" r="1.500" fill="#b4b4b4" stroke="#1c1c2c" stroke-width="0.900"/>
<circle cx="1117.2" cy="595.5" r="1.500" fill="#b4b4b4" stroke="#1c1c2c" stroke-width="0.900"/>
<circle cx="1097.1" cy="596.1" r="1.500" fill="#b4b4b4" stroke="#1c1c2c" stroke-width="0.900"/>
<circle cx="1095.1" cy="599.8" r="1.500" fill="#b4b4b4" stroke="#1c1c2c" stroke-width="0.900"/>
<circle cx="1050.2" cy="589.3" r="1.500" fill="#b4b4b4" stroke="#1c1c2c" stroke-width="0.900"/>
<circle cx="1083.3" cy="597.7" r="1.500" fill="#b4b4b4" stroke="#1c1c2c" stroke-width="0.900"/>
<circle cx="1079.9" cy="595.2" r="1.500" fill="#b4b4b4" stroke="#1c1c2c" stroke-width="0.900"/>
<circle cx="1111.8" cy="598.6" r="1.500" fill="#b4b4b4" stroke="#1c1c2c" stroke-width="0.900"/>
<circle cx="1087.5" cy="594.6" r="1.500" fill="#b4b4b4" stroke="#1c1c2c" stroke-width="0.900"/>
<circle cx="1060.2" cy="597.9" r="1.500" fill="#b4b4b4" stroke="#1c1c2c" stroke-width="0.900"/>
<circle cx="1091.7" cy="592.1" r="1.500" fill="#b4b4b4" stroke="#1c1c2c" stroke-width="0.900"/>
<circle cx="1099.2" cy="594.4" r="1.500" fill="#b4b4b4" stroke="#1c1c2c" stroke-width="0.900"/>
<circle cx="1082.6" cy="589.3" r="1.500" fill="#b4b4b4" stroke="#1c1c2c" stroke-width="0.900"/>
<circle cx="1107.1" cy="592.8" r="1.500" fill="#b4b4b4" stroke="#1c1c2c" stroke-width="0.900"/>
<circle cx="1095.1" cy="596.7" r="1.500" fill="#b4b4b4" stroke="#1c1c2c" stroke-width="0.900"/>
<circle cx="1077.9" cy="595.6" r="1.500" fill="#b4b4b4" stroke="#1c1c2c" stroke-width="0.900"/>
<circle cx="1084.2" cy="594.8" r="1.500" fill="#b4b4b4" stroke="#1c1c2c" stroke-width="0.900"/>
<circle cx="1092.7" cy="593.2" r="1.500" fill="#b4b4b4" stroke="#1c1c2c" stroke-width="0.900"/>
<circle cx="1102.4" cy="596.2" r="1.500" fill="#b4b4b4" stroke="#1c1c2c" stroke-width="0.900"/>
<circle cx="1065.3" cy="597.4" r="1.500" fill="#b4b4b4" stroke="#1c1c2c" stroke-width="0.900"/>
<circle cx="1080.6" cy="597.6" r="1.500" fill="#b4b4b4" stroke="#1c1c2c" stroke-width="0.900"/>
<circle cx="1041.9" cy="597.1" r="1.500" fill="#b4b4b4" stroke="#1c1c2c" stroke-width="0.900"/>
<circle cx="1043.6" cy="593.9" r="1.500" fill="#b4b4b4" stroke="#1c1c2c" stroke-width="0.900"/>
<circle cx="1152.1" cy="598.3" r="1.500" fill="#b4b4b4" stroke="#1c1c2c" stroke-width="0.900"/>
<circle cx="1109.2" cy="592.8" r="1.500" fill="#b4b4b4" stroke="#1c1c2c" stroke-width="0.900"/>
<circle cx="1065.4" cy="595.3" r="1.500" fill="#b4b4b4" stroke="#1c1c2c" stroke-width="0.900"/>
<circle cx="1096.2" cy="595.2" r="1.500" fill="#b4b4b4" stroke="#1c1c2c" stroke-width="0.900"/>
<circle cx="1074.4" cy="592.1" r="1.500" fill="#b4b4b4" stroke="#1c1c2c" stroke-width="0.900"/>
<circle cx="1080.0" cy="602.1" r="1.500" fill="#b4b4b4" stroke="#1c1c2c" stroke-width="0.900"/>
<circle cx="1088.3" cy="594.2" r="1.500" fill="#b4b4b4" stroke="#1c1c2c" stroke-width="0.900"/>
<circle cx="1083.1" cy="591.8" r="1.500" fill="#b4b4b4" stroke="#1c1c2c" stroke-width="0.900"/>
<circle cx="1061.6" cy="596.3" r="1.500" fill="#b4b4b4" stroke="#1c1c2c" stroke-width="0.900"/>
<circle cx="1115.7" cy="597.8" r="1.500" fill="#b4b4b4" stroke="#1c1c2c" stroke-width="0.900"/>
<circle cx="1061.3" cy="601.9" r="1.500" fill="#b4b4b4" stroke="#1c1c2c" stroke-width="0.900"/>
<circle cx="1094.4" cy="603.4" r="1.500" fill="#b4b4b4" stroke="#1c1c2c" stroke-width="0.900"/>
<circle cx="1086.4" cy="590.4" r="1.500" fill="#b4b4b4" stroke="#1c1c2c" stroke-width="0.900"/>
<circle cx="1093.8" cy="595.2" r="1.500" fill="#b4b4b4" stroke="#1c1c2c" stroke-width="0.900"/>
<circle cx="1067.4" cy="592.8" r="1.500" fill="#b4b4b4" stroke="#1c1c2c" stroke-width="0.900"/>
<circle cx="1081.1" cy="592.3" r="1.500" fill="#b4b4b4" stroke="#1c1c2c" stroke-width="0.900"/>
<circle cx="1101.8" cy="597.1" r="1.500" fill="#b4b4b4" stroke="#1c1c2c" stroke-width="0.900"/>
<circle cx="1017.5" cy="594.2" r="1.500" fill="#b4b4b4" stroke="#1c1c2c" stroke-width="0.900"/>
<circle cx="1024.3" cy="595.7" r="1.500" fill="#b4b4b4" stroke="#1c1c2c" stroke-width="0.900"/>
<circle cx="1013.9" cy="595.5" r="1.500" fill="#b4b4b4" stroke="#1c1c2c" stroke-width="0.900"/>
<circle cx="1028.5" cy="595.6" r="1.500" fill="#b4b4b4" stroke="#1c1c2c" stroke-width="0.900"/>
<circle cx="1015.6" cy="598.0" r="1.500" fill="#b4b4b4" stroke="#1c1c2c" stroke-width="0.900"/>
<circle cx="1032.4" cy="595.3" r="1.500" fill="#b4b4b4" stroke="#1c1c2c" stroke-width="0.900"/>
</svg>
<div style="left:533px;top:239px;width:1px;height:703px;background:#b4b8c0;"></div>
<div style="left:533px;top:941px;width:1386px;height:23px;background:#f0f0f0;border-top:1px solid #c8ccd4;box-sizing:border-box;"></div>
<span class="t " style="left:537.0px;top:944.0px;font-size:14.4px;line-height:19px;color:#1a1a1a;transform:scaleX(1.0042);">&lt;NO LABEL&gt; Reserved for ASPRS Definition [LIDAR, Unclassified] [72.416 ft]</span>
<span class="t " style="left:1751.0px;top:944.0px;font-size:14.4px;line-height:19px;color:#1a1a1a;transform:scaleX(1.0519);">Default</span>
<div style="left:1844px;top:944px;width:1px;height:18px;background:#d0d0d0;"></div>
<span class="t " style="left:1848.0px;top:944.0px;font-size:14.4px;line-height:19px;color:#1a1a1a;transform:scaleX(1.0338);">View</span>
<div style="left:0px;top:964px;width:1919px;height:23px;background:linear-gradient(#d5d9e2 0%,#c3c8d3 35%,#b4b9c5 100%);"></div>
<span class="t " style="left:5.0px;top:967.5px;font-size:14.4px;line-height:19px;color:#3a3f4a;transform:scaleX(0.9057);">For Help, press F1</span>
<div style="left:1225px;top:966px;width:1px;height:21px;background:#9aa0ad;"></div><div style="left:1226px;top:966px;width:1px;height:21px;background:#e2e5ec;"></div>
<div style="left:1290px;top:966px;width:1px;height:21px;background:#9aa0ad;"></div><div style="left:1291px;top:966px;width:1px;height:21px;background:#e2e5ec;"></div>
<div style="left:1660px;top:966px;width:1px;height:21px;background:#9aa0ad;"></div><div style="left:1661px;top:966px;width:1px;height:21px;background:#e2e5ec;"></div>
<span class="t " style="left:1229.0px;top:967.5px;font-size:14.4px;line-height:19px;color:#3a3f4a;transform:scaleX(0.9656);">1:221000</span>
<span class="t " style="left:1294.0px;top:967.5px;font-size:14.4px;line-height:19px;color:#3a3f4a;transform:scaleX(0.9474);">SPCS FL East ( NAD83 ) ( 511071.941, 1443671.368 us-ft )</span>
<span class="t " style="left:1664.0px;top:967.5px;font-size:14.4px;line-height:19px;color:#3a3f4a;transform:scaleX(0.9784);">28° 18&#x27; 16.1066&quot; N, 81° 27&#x27; 03.2851&quot; W</span>
</div>
</body></html>
